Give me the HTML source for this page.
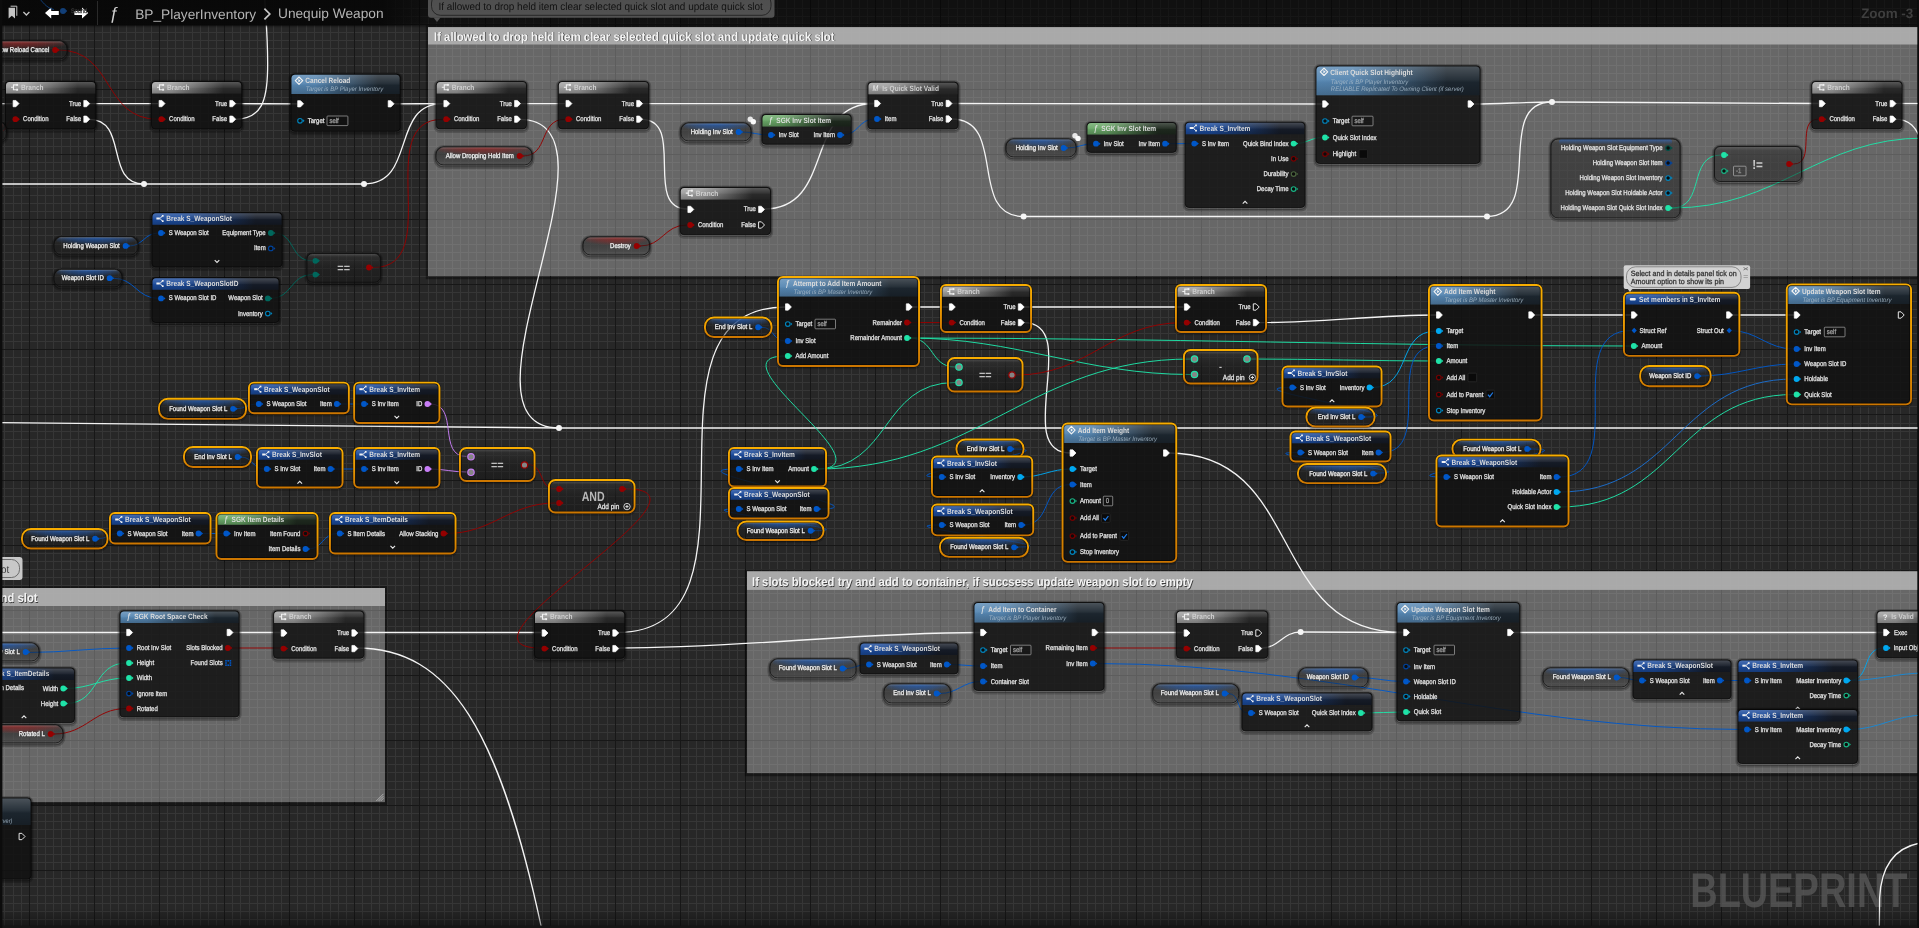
<!DOCTYPE html>
<html><head><meta charset="utf-8"><title>BP_PlayerInventory - Unequip Weapon</title><style>html,body{margin:0;padding:0;background:#262626;overflow:hidden}svg{display:block;will-change:transform}</style></head><body><svg width="1919" height="928" viewBox="0 0 1919 928" font-family="Liberation Sans, sans-serif" text-rendering="geometricPrecision">
<defs><linearGradient id="g1" x1="0" y1="0" x2="0" y2="1"><stop offset="0" stop-color="#505050" stop-opacity="0.8"/><stop offset="0.2" stop-color="#2c2c2c" stop-opacity="0.62"/><stop offset="0.5" stop-color="#1c1c1c" stop-opacity="0.5"/><stop offset="1" stop-color="#141414" stop-opacity="0.3"/></linearGradient><radialGradient id="g2" cx="0.5" cy="0" r="0.62" fx="0.5" fy="0" gradientTransform="translate(0 0) scale(1 1.6)"><stop offset="0" stop-color="#a82020" stop-opacity="0.66"/><stop offset="0.55" stop-color="#a82020" stop-opacity="0.36"/><stop offset="1" stop-color="#a82020" stop-opacity="0"/></radialGradient><linearGradient id="g3" x1="0" y1="0" x2="1" y2="0"><stop offset="0" stop-color="#a0a0a0" stop-opacity="1"/><stop offset="0.22" stop-color="#a0a0a0" stop-opacity="0.97"/><stop offset="0.8" stop-color="#2c2c2c" stop-opacity="1"/><stop offset="1" stop-color="#2c2c2c" stop-opacity="1"/></linearGradient><linearGradient id="g4" x1="0" y1="0" x2="0" y2="1"><stop offset="0" stop-color="#ffffff" stop-opacity="0.2"/><stop offset="0.45" stop-color="#ffffff" stop-opacity="0.05"/><stop offset="0.55" stop-color="#000000" stop-opacity="0.05"/><stop offset="1" stop-color="#000000" stop-opacity="0.22"/></linearGradient><linearGradient id="g5" x1="0" y1="0" x2="1" y2="0"><stop offset="0" stop-color="#5788b4" stop-opacity="1"/><stop offset="0.22" stop-color="#5788b4" stop-opacity="0.97"/><stop offset="0.8" stop-color="#1d2730" stop-opacity="1"/><stop offset="1" stop-color="#1d2730" stop-opacity="1"/></linearGradient><linearGradient id="g6" x1="0" y1="0" x2="1" y2="0"><stop offset="0" stop-color="#1c4c9e" stop-opacity="1"/><stop offset="0.22" stop-color="#1c4c9e" stop-opacity="0.97"/><stop offset="0.8" stop-color="#161c28" stop-opacity="1"/><stop offset="1" stop-color="#161c28" stop-opacity="1"/></linearGradient><radialGradient id="g7" cx="0.5" cy="0" r="0.62" fx="0.5" fy="0" gradientTransform="translate(0 0) scale(1 1.6)"><stop offset="0" stop-color="#1a62d0" stop-opacity="0.66"/><stop offset="0.55" stop-color="#1a62d0" stop-opacity="0.36"/><stop offset="1" stop-color="#1a62d0" stop-opacity="0"/></radialGradient><linearGradient id="g8" x1="0" y1="0" x2="0" y2="1"><stop offset="0" stop-color="#606060" stop-opacity="0.8"/><stop offset="0.12" stop-color="#303030" stop-opacity="0.62"/><stop offset="0.5" stop-color="#1c1c1c" stop-opacity="0.52"/><stop offset="1" stop-color="#121212" stop-opacity="0.45"/></linearGradient><linearGradient id="g9" x1="0" y1="0" x2="1" y2="0"><stop offset="0" stop-color="#6aa868" stop-opacity="1"/><stop offset="0.22" stop-color="#6aa868" stop-opacity="0.97"/><stop offset="0.8" stop-color="#1f2a1f" stop-opacity="1"/><stop offset="1" stop-color="#1f2a1f" stop-opacity="1"/></linearGradient><linearGradient id="g10" x1="0" y1="0" x2="1" y2="0"><stop offset="0" stop-color="#a0a0a0" stop-opacity="1"/><stop offset="0.22" stop-color="#a0a0a0" stop-opacity="0.97"/><stop offset="0.8" stop-color="#2c2c2c" stop-opacity="1"/><stop offset="1" stop-color="#2c2c2c" stop-opacity="1"/></linearGradient><linearGradient id="g11" x1="0" y1="0" x2="0" y2="1"><stop offset="0" stop-color="#606060" stop-opacity="0.8"/><stop offset="0.05" stop-color="#2c2c2c" stop-opacity="0.6"/><stop offset="0.4" stop-color="#1c1c1c" stop-opacity="0.5"/><stop offset="1" stop-color="#141414" stop-opacity="0.48"/></linearGradient><linearGradient id="g12" x1="0" y1="0" x2="0" y2="1"><stop offset="0" stop-color="#1a62d0" stop-opacity="0.5"/><stop offset="1" stop-color="#1a62d0" stop-opacity="0"/></linearGradient><linearGradient id="g13" x1="0" y1="0" x2="0" y2="1"><stop offset="0" stop-color="#f8ad00" stop-opacity="1"/><stop offset="0.5" stop-color="#ec9a00" stop-opacity="1"/><stop offset="1" stop-color="#cc7600" stop-opacity="1"/></linearGradient><linearGradient id="g14" x1="0" y1="0" x2="1" y2="0"><stop offset="0" stop-color="#1c4c9e" stop-opacity="1"/><stop offset="0.22" stop-color="#1c4c9e" stop-opacity="0.97"/><stop offset="0.8" stop-color="#161c28" stop-opacity="1"/><stop offset="1" stop-color="#161c28" stop-opacity="1"/></linearGradient><linearGradient id="g15" x1="0" y1="0" x2="0" y2="1"><stop offset="0" stop-color="#000" stop-opacity="0.6"/><stop offset="0.8" stop-color="#000" stop-opacity="0.58"/><stop offset="0.92" stop-color="#000" stop-opacity="0.35"/><stop offset="1" stop-color="#000" stop-opacity="0"/></linearGradient><linearGradient id="g16" x1="0" y1="0" x2="1" y2="0"><stop offset="0" stop-color="#080808" stop-opacity="0.92"/><stop offset="0.9" stop-color="#080808" stop-opacity="0.9"/><stop offset="1" stop-color="#080808" stop-opacity="0"/></linearGradient><linearGradient id="g17" x1="0" y1="0" x2="0" y2="1"><stop offset="0" stop-color="#000" stop-opacity="0"/><stop offset="1" stop-color="#000" stop-opacity="0.4"/></linearGradient></defs>
<g id="Lbg"><rect width="1919" height="928" fill="#272727"/>
<path d="M4.5 0V928M13.5 0V928M21.5 0V928M37.5 0V928M45.5 0V928M53.5 0V928M61.5 0V928M70.5 0V928M78.5 0V928M86.5 0V928M102.5 0V928M110.5 0V928M118.5 0V928M126.5 0V928M135.5 0V928M143.5 0V928M151.5 0V928M167.5 0V928M175.5 0V928M183.5 0V928M192.5 0V928M200.5 0V928M208.5 0V928M216.5 0V928M232.5 0V928M240.5 0V928M249.5 0V928M257.5 0V928M265.5 0V928M273.5 0V928M281.5 0V928M297.5 0V928M306.5 0V928M314.5 0V928M322.5 0V928M330.5 0V928M338.5 0V928M346.5 0V928M362.5 0V928M371.5 0V928M379.5 0V928M387.5 0V928M395.5 0V928M403.5 0V928M411.5 0V928M428.5 0V928M436.5 0V928M444.5 0V928M452.5 0V928M460.5 0V928M468.5 0V928M476.5 0V928M493.5 0V928M501.5 0V928M509.5 0V928M517.5 0V928M525.5 0V928M533.5 0V928M542.5 0V928M558.5 0V928M566.5 0V928M574.5 0V928M582.5 0V928M590.5 0V928M598.5 0V928M607.5 0V928M623.5 0V928M631.5 0V928M639.5 0V928M647.5 0V928M655.5 0V928M664.5 0V928M672.5 0V928M688.5 0V928M696.5 0V928M704.5 0V928M712.5 0V928M721.5 0V928M729.5 0V928M737.5 0V928M753.5 0V928M761.5 0V928M769.5 0V928M777.5 0V928M786.5 0V928M794.5 0V928M802.5 0V928M818.5 0V928M826.5 0V928M834.5 0V928M843.5 0V928M851.5 0V928M859.5 0V928M867.5 0V928M883.5 0V928M891.5 0V928M900.5 0V928M908.5 0V928M916.5 0V928M924.5 0V928M932.5 0V928M948.5 0V928M957.5 0V928M965.5 0V928M973.5 0V928M981.5 0V928M989.5 0V928M997.5 0V928M1013.5 0V928M1022.5 0V928M1030.5 0V928M1038.5 0V928M1046.5 0V928M1054.5 0V928M1062.5 0V928M1079.5 0V928M1087.5 0V928M1095.5 0V928M1103.5 0V928M1111.5 0V928M1119.5 0V928M1127.5 0V928M1144.5 0V928M1152.5 0V928M1160.5 0V928M1168.5 0V928M1176.5 0V928M1184.5 0V928M1193.5 0V928M1209.5 0V928M1217.5 0V928M1225.5 0V928M1233.5 0V928M1241.5 0V928M1249.5 0V928M1258.5 0V928M1274.5 0V928M1282.5 0V928M1290.5 0V928M1298.5 0V928M1306.5 0V928M1315.5 0V928M1323.5 0V928M1339.5 0V928M1347.5 0V928M1355.5 0V928M1363.5 0V928M1372.5 0V928M1380.5 0V928M1388.5 0V928M1404.5 0V928M1412.5 0V928M1420.5 0V928M1428.5 0V928M1437.5 0V928M1445.5 0V928M1453.5 0V928M1469.5 0V928M1477.5 0V928M1485.5 0V928M1494.5 0V928M1502.5 0V928M1510.5 0V928M1518.5 0V928M1534.5 0V928M1542.5 0V928M1551.5 0V928M1559.5 0V928M1567.5 0V928M1575.5 0V928M1583.5 0V928M1599.5 0V928M1608.5 0V928M1616.5 0V928M1624.5 0V928M1632.5 0V928M1640.5 0V928M1648.5 0V928M1664.5 0V928M1673.5 0V928M1681.5 0V928M1689.5 0V928M1697.5 0V928M1705.5 0V928M1713.5 0V928M1730.5 0V928M1738.5 0V928M1746.5 0V928M1754.5 0V928M1762.5 0V928M1770.5 0V928M1778.5 0V928M1795.5 0V928M1803.5 0V928M1811.5 0V928M1819.5 0V928M1827.5 0V928M1835.5 0V928M1844.5 0V928M1860.5 0V928M1868.5 0V928M1876.5 0V928M1884.5 0V928M1892.5 0V928M1900.5 0V928M1909.5 0V928M0 8.5H1919M0 16.5H1919M0 32.5H1919M0 40.5H1919M0 48.5H1919M0 56.5H1919M0 65.5H1919M0 73.5H1919M0 81.5H1919M0 97.5H1919M0 105.5H1919M0 113.5H1919M0 121.5H1919M0 130.5H1919M0 138.5H1919M0 146.5H1919M0 162.5H1919M0 170.5H1919M0 178.5H1919M0 187.5H1919M0 195.5H1919M0 203.5H1919M0 211.5H1919M0 227.5H1919M0 235.5H1919M0 244.5H1919M0 252.5H1919M0 260.5H1919M0 268.5H1919M0 276.5H1919M0 292.5H1919M0 301.5H1919M0 309.5H1919M0 317.5H1919M0 325.5H1919M0 333.5H1919M0 341.5H1919M0 357.5H1919M0 366.5H1919M0 374.5H1919M0 382.5H1919M0 390.5H1919M0 398.5H1919M0 406.5H1919M0 423.5H1919M0 431.5H1919M0 439.5H1919M0 447.5H1919M0 455.5H1919M0 463.5H1919M0 471.5H1919M0 488.5H1919M0 496.5H1919M0 504.5H1919M0 512.5H1919M0 520.5H1919M0 528.5H1919M0 537.5H1919M0 553.5H1919M0 561.5H1919M0 569.5H1919M0 577.5H1919M0 585.5H1919M0 593.5H1919M0 602.5H1919M0 618.5H1919M0 626.5H1919M0 634.5H1919M0 642.5H1919M0 650.5H1919M0 659.5H1919M0 667.5H1919M0 683.5H1919M0 691.5H1919M0 699.5H1919M0 707.5H1919M0 716.5H1919M0 724.5H1919M0 732.5H1919M0 748.5H1919M0 756.5H1919M0 764.5H1919M0 772.5H1919M0 781.5H1919M0 789.5H1919M0 797.5H1919M0 813.5H1919M0 821.5H1919M0 829.5H1919M0 838.5H1919M0 846.5H1919M0 854.5H1919M0 862.5H1919M0 878.5H1919M0 886.5H1919M0 895.5H1919M0 903.5H1919M0 911.5H1919M0 919.5H1919M0 927.5H1919" stroke="#363636" stroke-width="1" fill="none"/>
<path d="M29.5 0V928M94.5 0V928M159.5 0V928M224.5 0V928M289.5 0V928M354.5 0V928M419.5 0V928M485.5 0V928M550.5 0V928M615.5 0V928M680.5 0V928M745.5 0V928M810.5 0V928M875.5 0V928M940.5 0V928M1005.5 0V928M1070.5 0V928M1136.5 0V928M1201.5 0V928M1266.5 0V928M1331.5 0V928M1396.5 0V928M1461.5 0V928M1526.5 0V928M1591.5 0V928M1656.5 0V928M1721.5 0V928M1787.5 0V928M1852.5 0V928M1917.5 0V928M0 24.5H1919M0 89.5H1919M0 154.5H1919M0 219.5H1919M0 284.5H1919M0 349.5H1919M0 414.5H1919M0 480.5H1919M0 545.5H1919M0 610.5H1919M0 675.5H1919M0 740.5H1919M0 805.5H1919M0 870.5H1919" stroke="#171717" stroke-width="1" fill="none"/></g>
<g id="Lcomments"><rect x="427" y="26.4" width="1491.5" height="251.6" fill="none" stroke="#000" stroke-width="2.5" opacity="0.4"/>
<rect x="428" y="27" width="1489.5" height="249" fill="#c8c8c8" fill-opacity="0.4"/>
<rect x="428" y="27" width="1489.5" height="17.5" fill="#aeaeae" fill-opacity="0.93"/>
<text transform="translate(434.7 41.2) scale(0.9 1)" font-size="12.6" fill="#222" font-weight="bold" opacity="0.8">If allowed to drop held item clear selected quick slot and update quick slot</text>
<text transform="translate(434 40.5) scale(0.9 1)" font-size="12.6" fill="#f4f4f4" font-weight="bold">If allowed to drop held item clear selected quick slot and update quick slot</text>
<rect x="-41" y="587.4" width="427" height="216.6" fill="none" stroke="#000" stroke-width="2.5" opacity="0.4"/>
<rect x="-40" y="588" width="425" height="214" fill="#c8c8c8" fill-opacity="0.4"/>
<rect x="-40" y="588" width="425" height="18" fill="#aeaeae" fill-opacity="0.93"/>
<text transform="translate(1.2 602.7) scale(0.9 1)" font-size="12.6" fill="#222" font-weight="bold" opacity="0.8">nd slot</text>
<text transform="translate(0.5 602) scale(0.9 1)" font-size="12.6" fill="#f4f4f4" font-weight="bold">nd slot</text>
<path d="M383.5 796 l-5 5 M383.5 798.2 l-2.8 2.8 M383.5 793.8 l-7.2 7.2" stroke="#ddd" stroke-width="0.6" fill="none"/>
<rect x="746" y="570.7" width="1172.5" height="204.3" fill="none" stroke="#000" stroke-width="2.5" opacity="0.4"/>
<rect x="747" y="571.3" width="1170.5" height="201.7" fill="#c8c8c8" fill-opacity="0.4"/>
<rect x="747" y="571.3" width="1170.5" height="18.6" fill="#aeaeae" fill-opacity="0.93"/>
<text transform="translate(752.7 586.6) scale(0.9 1)" font-size="12.6" fill="#222" font-weight="bold" opacity="0.8">If slots blocked try and add to container, if succsess update weapon slot to empty</text>
<text transform="translate(752 585.9) scale(0.9 1)" font-size="12.6" fill="#f4f4f4" font-weight="bold">If slots blocked try and add to container, if succsess update weapon slot to empty</text>
<text transform="translate(1690.2 907.2) scale(0.78 1)" font-size="48.7" fill="#5a5a5a" font-weight="bold" opacity="0.75">BLUEPRINT</text></g>
<g id="Lwires"><path d="M-5 103.7 C0.83 103.7 6.67 103.7 12.5 103.7" stroke="#f4f4f4" stroke-width="1.3" fill="none"/>
<path d="M89 103.7 C112.07 103.7 135.13 103.7 158.2 103.7" stroke="#f4f4f4" stroke-width="1.3" fill="none"/>
<path d="M89 119.3 C128.9 119.3 104.1 184 144 184" stroke="#f4f4f4" stroke-width="1.3" fill="none"/>
<path d="M234.7 103.7 C255.67 103.7 276.53 103.8 297.5 103.8" stroke="#f4f4f4" stroke-width="1.3" fill="none"/>
<path d="M234.7 119.3 C262 119.3 267 100 267.6 70 S265.5 15 264.5 -5" stroke="#f4f4f4" stroke-width="1.3" fill="none"/>
<path d="M393.6 103.8 C410.03 103.8 426.37 103.7 442.8 103.7" stroke="#f4f4f4" stroke-width="1.3" fill="none"/>
<path d="M-5 184 C44.67 184 94.33 184 144 184" stroke="#f4f4f4" stroke-width="1.3" fill="none"/>
<path d="M144 184 C217.33 184 290.67 184 364 184" stroke="#f4f4f4" stroke-width="1.3" fill="none"/>
<path d="M364 184 C417.03 184 389.77 103.7 442.8 103.7" stroke="#f4f4f4" stroke-width="1.3" fill="none"/>
<circle cx="144" cy="184" r="3" fill="#f4f4f4"/>
<circle cx="364" cy="184" r="3" fill="#f4f4f4"/>
<path d="M519.3 103.7 C534.47 103.7 549.63 103.7 564.8 103.7" stroke="#f4f4f4" stroke-width="1.3" fill="none"/>
<path d="M519.3 119.3 C635.43 119.3 442.87 428 559 428" stroke="#f4f4f4" stroke-width="1.3" fill="none"/>
<path d="M641.3 103.7 C719.1 103.7 796.7 103.5 874.5 103.5" stroke="#f4f4f4" stroke-width="1.3" fill="none"/>
<path d="M641.3 119.3 C686.6 119.3 642.2 209 687.5 209" stroke="#f4f4f4" stroke-width="1.3" fill="none"/>
<path d="M764 209 C836 209 802.5 103.5 874.5 103.5" stroke="#f4f4f4" stroke-width="1.3" fill="none"/>
<path d="M951.5 103.5 C1075.33 103.5 1198.67 104 1322.5 104" stroke="#f4f4f4" stroke-width="1.3" fill="none"/>
<path d="M951.5 119 C1008.03 119 967.07 216.5 1023.6 216.5" stroke="#f4f4f4" stroke-width="1.3" fill="none"/>
<path d="M1023.6 216.5 C1178.07 216.5 1332.53 216.5 1487 216.5" stroke="#f4f4f4" stroke-width="1.3" fill="none"/>
<path d="M1487 216.5 C1546.83 216.5 1492.17 102 1552 102" stroke="#f4f4f4" stroke-width="1.3" fill="none"/>
<path d="M1473.5 104 C1500.33 104 1525.17 102 1552 102" stroke="#f4f4f4" stroke-width="1.3" fill="none"/>
<path d="M1552 102 C1641.33 102 1729.17 103.5 1818.5 103.5" stroke="#f4f4f4" stroke-width="1.3" fill="none"/>
<circle cx="1023.6" cy="216.5" r="3" fill="#f4f4f4"/>
<circle cx="1487" cy="216.5" r="3" fill="#f4f4f4"/>
<circle cx="1552" cy="102" r="3" fill="#f4f4f4"/>
<path d="M1895 103.5 C1905 103.5 1915 103.5 1925 103.5" stroke="#f4f4f4" stroke-width="1.3" fill="none"/>
<path d="M1895 119.1 C1910 119.1 1916 128 1921 140" stroke="#f4f4f4" stroke-width="1.3" fill="none"/>
<path d="M-5 422.5 C200 423.5 400 428 559 428" stroke="#f4f4f4" stroke-width="1.3" fill="none"/>
<path d="M559 428 C892.33 428 1591.67 428 1925 428" stroke="#f4f4f4" stroke-width="1.3" fill="none"/>
<circle cx="559" cy="428" r="3" fill="#f4f4f4"/>
<path d="M617.5 632.5 C781.93 632.5 620.87 307 785.3 307" stroke="#f4f4f4" stroke-width="1.3" fill="none"/>
<path d="M617.5 648 C743.67 648 854.33 632.5 980.5 632.5" stroke="#f4f4f4" stroke-width="1.3" fill="none"/>
<path d="M356.6 632.5 C418.07 632.5 479.53 632.5 541 632.5" stroke="#f4f4f4" stroke-width="1.3" fill="none"/>
<path d="M356.6 648 C450 648 500 730 543 935" stroke="#f4f4f4" stroke-width="1.3" fill="none"/>
<path d="M232.5 632.5 C248.37 632.5 264.23 632.5 280.1 632.5" stroke="#f4f4f4" stroke-width="1.3" fill="none"/>
<path d="M-5 632.5 C38.83 632.5 82.67 632.5 126.5 632.5" stroke="#f4f4f4" stroke-width="1.3" fill="none"/>
<path d="M911.7 307 C923.9 307 936.1 307 948.3 307" stroke="#f4f4f4" stroke-width="1.3" fill="none"/>
<path d="M1023.7 307 C1076.9 307 1130.1 307 1183.3 307" stroke="#f4f4f4" stroke-width="1.3" fill="none"/>
<path d="M1023.7 322.6 C1082.7 322.6 1011.3 453 1070.3 453" stroke="#f4f4f4" stroke-width="1.3" fill="none"/>
<path d="M1258.7 322.6 C1320.43 322.6 1374.57 315 1436.3 315" stroke="#f4f4f4" stroke-width="1.3" fill="none"/>
<path d="M1534.2 315 C1566.57 315 1598.93 315 1631.3 315" stroke="#f4f4f4" stroke-width="1.3" fill="none"/>
<path d="M1732 315 C1752.7 315 1773.4 315 1794.1 315" stroke="#f4f4f4" stroke-width="1.3" fill="none"/>
<path d="M1168.2 453 C1306.47 453 1265.23 632.5 1403.5 632.5" stroke="#f4f4f4" stroke-width="1.3" fill="none"/>
<path d="M1097.5 632.5 C1126 632.5 1154.5 632.5 1183 632.5" stroke="#f4f4f4" stroke-width="1.3" fill="none"/>
<path d="M1261.2 648 C1279.67 648 1282.13 632 1300.6 632" stroke="#f4f4f4" stroke-width="1.3" fill="none"/>
<path d="M1300.6 632 C1335.07 632 1369.03 632.5 1403.5 632.5" stroke="#f4f4f4" stroke-width="1.3" fill="none"/>
<circle cx="1300.6" cy="632" r="3" fill="#f4f4f4"/>
<path d="M1513.1 632.5 C1636.57 632.5 1760.03 632.5 1883.5 632.5" stroke="#f4f4f4" stroke-width="1.3" fill="none"/>
<path d="M1925 842.3 C1900 845 1881.5 860 1879.6 898 L1879.3 935" stroke="#f4f4f4" stroke-width="1.3" fill="none"/>
<path d="M58.5 50 C114.83 50 101.87 119.3 158.2 119.3" stroke="#950000" stroke-width="0.95" fill="none"/>
<path d="M3 131 C7 129 7 120 13 119.3" stroke="#5a1010" stroke-width="0.9" fill="none"/>
<path d="M523 156 C549.17 156 538.63 119.3 564.8 119.3" stroke="#950000" stroke-width="0.95" fill="none"/>
<path d="M373.5 267.5 C446 267.5 370.3 119.3 442.8 119.3" stroke="#950000" stroke-width="0.95" fill="none"/>
<path d="M129 246 C143.17 246 144.33 233 158.5 233" stroke="#0057c8" stroke-width="0.95" fill="none"/>
<path d="M113 278.2 C134.9 278.2 136.6 298.4 158.5 298.4" stroke="#0057c8" stroke-width="0.95" fill="none"/>
<path d="M273.5 233 C295.6 233 289.9 260.8 312 260.8" stroke="#00675c" stroke-width="0.95" fill="none"/>
<path d="M270.5 298.4 C292.27 298.4 290.23 274.6 312 274.6" stroke="#00675c" stroke-width="0.95" fill="none"/>
<path d="M742 132 C751.83 132 758.67 135 768.5 135" stroke="#0057c8" stroke-width="0.95" fill="none"/>
<path d="M842.5 135 C858.5 135 858.5 119 874.5 119" stroke="#0057c8" stroke-width="0.95" fill="none"/>
<path d="M640 246 C662.6 246 664.2 225 686.8 225" stroke="#950000" stroke-width="0.95" fill="none"/>
<path d="M1067 148 C1077.27 148 1083.23 143.7 1093.5 143.7" stroke="#0057c8" stroke-width="0.95" fill="none"/>
<path d="M1167.5 143.7 C1175.53 143.7 1183.47 143.6 1191.5 143.6" stroke="#0057c8" stroke-width="0.95" fill="none"/>
<path d="M1295.5 143.6 C1306.53 143.6 1311.47 137.5 1322.5 137.5" stroke="#1fe3a8" stroke-width="0.95" fill="none"/>
<path d="M1672 208 C1706 208 1687 155 1721 155" stroke="#1fe3a8" stroke-width="0.95" fill="none"/>
<path d="M1672 208 C1779.67 208 1817.33 138 1925 138" stroke="#1fe3a8" stroke-width="0.95" fill="none"/>
<path d="M1793.5 164 C1816.8 164 1795.2 119.1 1818.5 119.1" stroke="#950000" stroke-width="0.95" fill="none"/>
<path d="M236.5 408.8 C244.7 408.8 248.1 404 256.3 404" stroke="#0057c8" stroke-width="0.95" fill="none"/>
<path d="M339.5 404 C346.83 404 354.17 404 361.5 404" stroke="#0057c8" stroke-width="0.95" fill="none"/>
<path d="M430.1 404 C459.73 404 436.87 456.5 466.5 456.5" stroke="#c77df5" stroke-width="0.95" fill="none"/>
<path d="M241 457 C252.77 457 252.53 469 264.3 469" stroke="#0057c8" stroke-width="0.95" fill="none"/>
<path d="M333.2 469 C342.63 469 352.07 469 361.5 469" stroke="#0057c8" stroke-width="0.95" fill="none"/>
<path d="M430.1 469 C443.23 469 453.37 472 466.5 472" stroke="#c77df5" stroke-width="0.95" fill="none"/>
<path d="M527.5 464.5 C545 464.5 538 489 555.5 489" stroke="#950000" stroke-width="0.95" fill="none"/>
<path d="M446.2 533.5 C492.8 533.5 508.9 503 555.5 503" stroke="#950000" stroke-width="0.95" fill="none"/>
<path d="M626.5 489 C733.83 489 433.67 648 541 648" stroke="#950000" stroke-width="0.95" fill="none"/>
<path d="M98.5 538.8 C106.53 538.8 109.27 533.5 117.3 533.5" stroke="#0057c8" stroke-width="0.95" fill="none"/>
<path d="M201.2 533.5 C208.73 533.5 216.27 533.5 223.8 533.5" stroke="#0057c8" stroke-width="0.95" fill="none"/>
<path d="M308.2 549 C323.07 549 322.43 533.5 337.3 533.5" stroke="#0057c8" stroke-width="0.95" fill="none"/>
<path d="M761.5 327.2 C774.03 327.2 772.77 341 785.3 341" stroke="#0057c8" stroke-width="0.95" fill="none"/>
<path d="M909.7 322.5 C922.6 322.5 935.4 322.6 948.3 322.6" stroke="#950000" stroke-width="0.95" fill="none"/>
<path d="M909.7 338 C934.47 338 930.23 367 955 367" stroke="#1fe3a8" stroke-width="0.95" fill="none"/>
<path d="M909.7 338 C1015.47 338 1084.73 374.5 1190.5 374.5" stroke="#1fe3a8" stroke-width="0.95" fill="none"/>
<path d="M909.7 338 C1152.9 338 1388.1 346 1631.3 346" stroke="#1fe3a8" stroke-width="0.95" fill="none"/>
<path d="M816.7 469 C894.13 469 707.87 356 785.3 356" stroke="#1fe3a8" stroke-width="0.95" fill="none"/>
<path d="M816.7 469 C891.63 469 880.07 382.5 955 382.5" stroke="#1fe3a8" stroke-width="0.95" fill="none"/>
<path d="M816.7 469 C977.97 469 1029.23 359 1190.5 359" stroke="#1fe3a8" stroke-width="0.95" fill="none"/>
<path d="M1251 359 C1313.43 359 1373.87 361 1436.3 361" stroke="#1fe3a8" stroke-width="0.95" fill="none"/>
<path d="M1016 375 C1089.23 375 1110.07 322.6 1183.3 322.6" stroke="#950000" stroke-width="0.95" fill="none"/>
<path d="M814 530.7 C876.65 530.7 673.65 509 736.3 509" stroke="#0057c8" stroke-width="0.95" fill="none"/>
<path d="M819.2 509 C894.47 509 661.03 469 736.3 469" stroke="#0057c8" stroke-width="0.95" fill="none"/>
<path d="M1013.5 449 C1076.97 449 875.83 477 939.3 477" stroke="#0057c8" stroke-width="0.95" fill="none"/>
<path d="M1022.2 477 C1040.9 477 1051.6 469 1070.3 469" stroke="#00a8f0" stroke-width="0.95" fill="none"/>
<path d="M1017.5 547 C1080.63 547 876.17 525 939.3 525" stroke="#0057c8" stroke-width="0.95" fill="none"/>
<path d="M1023.2 525 C1052.4 525 1041.1 484.5 1070.3 484.5" stroke="#0057c8" stroke-width="0.95" fill="none"/>
<path d="M1372.2 387.5 C1412.4 387.5 1396.1 331 1436.3 331" stroke="#00a8f0" stroke-width="0.95" fill="none"/>
<path d="M1364.5 417 C1429.05 417 1225.25 387.5 1289.8 387.5" stroke="#0057c8" stroke-width="0.95" fill="none"/>
<path d="M1381.2 452.5 C1435.07 452.5 1382.43 346 1436.3 346" stroke="#0057c8" stroke-width="0.95" fill="none"/>
<path d="M1376.5 473 C1439.22 473 1235.08 452.5 1297.8 452.5" stroke="#0057c8" stroke-width="0.95" fill="none"/>
<path d="M1530.5 449 C1602.3 449 1372 477 1443.8 477" stroke="#0057c8" stroke-width="0.95" fill="none"/>
<path d="M1559.2 477 C1632.07 477 1558.43 330.5 1631.3 330.5" stroke="#0057c8" stroke-width="0.95" fill="none"/>
<path d="M1559.2 492 C1675.17 492 1678.13 379 1794.1 379" stroke="#1a6fd0" stroke-width="0.95" fill="none"/>
<path d="M1559.2 507 C1675 507 1678.3 394.5 1794.1 394.5" stroke="#1fe3a8" stroke-width="0.95" fill="none"/>
<path d="M1730 330.5 C1757.53 330.5 1766.57 349 1794.1 349" stroke="#0057c8" stroke-width="0.95" fill="none"/>
<path d="M1700 376 C1735.37 376 1758.73 364 1794.1 364" stroke="#0057c8" stroke-width="0.95" fill="none"/>
<path d="M29 652.5 C63 652.5 92.5 648 126.5 648" stroke="#0057c8" stroke-width="0.95" fill="none"/>
<path d="M66 688.5 C89.67 688.5 102.83 678 126.5 678" stroke="#1fe3a8" stroke-width="0.95" fill="none"/>
<path d="M66 703.5 C99.67 703.5 92.83 663 126.5 663" stroke="#1fe3a8" stroke-width="0.95" fill="none"/>
<path d="M54 734 C86.67 734 93.83 708.5 126.5 708.5" stroke="#950000" stroke-width="0.95" fill="none"/>
<path d="M230.5 648 C247.03 648 263.57 648 280.1 648" stroke="#950000" stroke-width="0.95" fill="none"/>
<path d="M846 668.5 C854.17 668.5 858.33 664.5 866.5 664.5" stroke="#0057c8" stroke-width="0.95" fill="none"/>
<path d="M949.5 664.5 C960.33 664.5 969.67 666 980.5 666" stroke="#0057c8" stroke-width="0.95" fill="none"/>
<path d="M940 693.5 C957.5 693.5 963 681.5 980.5 681.5" stroke="#0057c8" stroke-width="0.95" fill="none"/>
<path d="M1095.5 648 C1124.67 648 1153.83 648 1183 648" stroke="#950000" stroke-width="0.95" fill="none"/>
<path d="M1095.5 663.5 C1333.83 663.5 1506.17 729.5 1744.5 729.5" stroke="#0057c8" stroke-width="0.95" fill="none"/>
<path d="M1228 693.5 C1241.33 693.5 1235.17 713 1248.5 713" stroke="#0057c8" stroke-width="0.95" fill="none"/>
<path d="M1363.5 713 C1377.17 713 1389.83 712 1403.5 712" stroke="#1fe3a8" stroke-width="0.95" fill="none"/>
<path d="M1358 677.5 C1374.5 677.5 1387 681.5 1403.5 681.5" stroke="#0057c8" stroke-width="0.95" fill="none"/>
<path d="M1620 677.5 C1627.5 677.5 1632 680.5 1639.5 680.5" stroke="#0057c8" stroke-width="0.95" fill="none"/>
<path d="M1722.5 680.5 C1729.83 680.5 1737.17 680.5 1744.5 680.5" stroke="#0057c8" stroke-width="0.95" fill="none"/>
<path d="M1849 680.5 C1871.33 680.5 1861.17 648 1883.5 648" stroke="#00a8f0" stroke-width="0.95" fill="none"/>
<path d="M1849 680.5 C1876.83 680.5 1897.17 673 1925 673" stroke="#1888d4" stroke-width="0.95" fill="none"/>
<path d="M1849 729.5 C1879.17 729.5 1894.83 715 1925 715" stroke="#1888d4" stroke-width="0.95" fill="none"/></g>
<g id="Lnodes"><rect x="-31.3" y="40.4" width="99.6" height="21.4" rx="8.8" fill="none" stroke="#000" stroke-width="2.6" opacity="0.2"/>
<rect x="-30.7" y="40.8" width="98.4" height="19.8" rx="8.2" fill="none" stroke="#000" stroke-width="1.4" opacity="0.3"/>
<rect x="-30" y="41" width="97" height="18" rx="7.5" fill="url(#g1)" stroke="#0c0c0c" stroke-opacity="0.85" stroke-width="0.9"/>
<rect x="-27.5" y="41.6" width="92" height="8.1" rx="5" fill="url(#g2)"/>
<path d="M-24.75 41.9 h86.5" stroke="#ffffff" stroke-opacity="0.22" stroke-width="0.8" fill="none"/>
<circle cx="55.1" cy="50" r="2.9" fill="#950000"/>
<path d="M57.7 48.3 l1.9 1.7 l-1.9 1.7 z" fill="#950000"/>
<text transform="translate(49.3 51.9) scale(0.86 1)" font-size="7" fill="#f2f2f2" text-anchor="end" stroke="#f2f2f2" stroke-width="0.28">ow Reload Cancel</text>
<rect x="-41.3" y="121.4" width="49.1" height="22.4" rx="8.8" fill="none" stroke="#000" stroke-width="2.6" opacity="0.2"/>
<rect x="-40.7" y="121.8" width="47.9" height="20.8" rx="8.2" fill="none" stroke="#000" stroke-width="1.4" opacity="0.3"/>
<rect x="-40" y="122" width="46.5" height="19" rx="7.5" fill="url(#g1)" stroke="#0c0c0c" stroke-opacity="0.85" stroke-width="0.9"/>
<rect x="-37.5" y="122.6" width="41.5" height="8.55" rx="5" fill="url(#g2)"/>
<path d="M-34.75 122.9 h36" stroke="#ffffff" stroke-opacity="0.22" stroke-width="0.8" fill="none"/>
<circle cx="-12.4" cy="131.5" r="2.9" fill="#950000"/>
<path d="M-9.8 129.8 l1.9 1.7 l-1.9 1.7 z" fill="#950000"/>
<text transform="translate(-18.2 133.4) scale(0.86 1)" font-size="7" fill="#f2f2f2" text-anchor="end" stroke="#f2f2f2" stroke-width="0.28"></text>
<rect x="4.2" y="81" width="92.8" height="50.7" rx="4.8" fill="none" stroke="#000" stroke-width="2.6" opacity="0.2"/>
<rect x="4.8" y="81.4" width="91.6" height="49.1" rx="4.2" fill="none" stroke="#000" stroke-width="1.4" opacity="0.3"/>
<rect x="5.5" y="81.6" width="90.2" height="47.3" rx="3.5" fill="#111111" fill-opacity="0.86" stroke="#050505" stroke-opacity="0.9" stroke-width="0.8"/>
<path d="M6 93.6 v-8 a3.5 3.5 0 0 1 3.5 -3.5 h82.2 a3.5 3.5 0 0 1 3.5 3.5 v8 z" fill="url(#g3)"/>
<path d="M6 93.6 v-8 a3.5 3.5 0 0 1 3.5 -3.5 h82.2 a3.5 3.5 0 0 1 3.5 3.5 v8 z" fill="url(#g4)"/>
<g transform="translate(14.8 87.3)" fill="none" stroke="#f0f0f0" stroke-width="1.1"><path d="M-3.8 0 h2.6 M-1.3 -2.4 v4.8 M-1.9 -2.4 h3.4 M-1.9 2.4 h3.4"/><rect x="1.3" y="-3.4" width="2" height="2" fill="#f0f0f0" stroke="none"/><rect x="1.3" y="1.4" width="2" height="2" fill="#f0f0f0" stroke="none"/></g>
<text transform="translate(21 90) scale(0.86 1)" font-size="7.6" fill="#d0d0d0" font-weight="bold">Branch</text>
<path d="M13.1 100.45 h2.8 l3.1 3.15 l-3.1 3.15 h-2.8 z" fill="#fff" stroke="#fff" stroke-width="0.7" stroke-linejoin="round"/>
<circle cx="15.4" cy="119.2" r="2.9" fill="#950000"/>
<path d="M18 117.5 l1.9 1.7 l-1.9 1.7 z" fill="#950000"/>
<text transform="translate(23.1 121.2) scale(0.86 1)" font-size="7" fill="#e4e4e4" stroke="#e4e4e4" stroke-width="0.28">Condition</text>
<path d="M83.8 100.45 h2.8 l3.1 3.15 l-3.1 3.15 h-2.8 z" fill="#fff" stroke="#fff" stroke-width="0.7" stroke-linejoin="round"/>
<text transform="translate(81.1 105.6) scale(0.86 1)" font-size="7" fill="#e4e4e4" text-anchor="end" stroke="#e4e4e4" stroke-width="0.28">True</text>
<path d="M83.8 116.05 h2.8 l3.1 3.15 l-3.1 3.15 h-2.8 z" fill="#fff" stroke="#fff" stroke-width="0.7" stroke-linejoin="round"/>
<text transform="translate(81.1 121.2) scale(0.86 1)" font-size="7" fill="#e4e4e4" text-anchor="end" stroke="#e4e4e4" stroke-width="0.28">False</text>
<rect x="150.2" y="81" width="92.8" height="50.7" rx="4.8" fill="none" stroke="#000" stroke-width="2.6" opacity="0.2"/>
<rect x="150.8" y="81.4" width="91.6" height="49.1" rx="4.2" fill="none" stroke="#000" stroke-width="1.4" opacity="0.3"/>
<rect x="151.5" y="81.6" width="90.2" height="47.3" rx="3.5" fill="#111111" fill-opacity="0.86" stroke="#050505" stroke-opacity="0.9" stroke-width="0.8"/>
<path d="M152 93.6 v-8 a3.5 3.5 0 0 1 3.5 -3.5 h82.2 a3.5 3.5 0 0 1 3.5 3.5 v8 z" fill="url(#g3)"/>
<path d="M152 93.6 v-8 a3.5 3.5 0 0 1 3.5 -3.5 h82.2 a3.5 3.5 0 0 1 3.5 3.5 v8 z" fill="url(#g4)"/>
<g transform="translate(160.8 87.3)" fill="none" stroke="#f0f0f0" stroke-width="1.1"><path d="M-3.8 0 h2.6 M-1.3 -2.4 v4.8 M-1.9 -2.4 h3.4 M-1.9 2.4 h3.4"/><rect x="1.3" y="-3.4" width="2" height="2" fill="#f0f0f0" stroke="none"/><rect x="1.3" y="1.4" width="2" height="2" fill="#f0f0f0" stroke="none"/></g>
<text transform="translate(167 90) scale(0.86 1)" font-size="7.6" fill="#d0d0d0" font-weight="bold">Branch</text>
<path d="M159.1 100.45 h2.8 l3.1 3.15 l-3.1 3.15 h-2.8 z" fill="#fff" stroke="#fff" stroke-width="0.7" stroke-linejoin="round"/>
<circle cx="161.4" cy="119.2" r="2.9" fill="#950000"/>
<path d="M164 117.5 l1.9 1.7 l-1.9 1.7 z" fill="#950000"/>
<text transform="translate(169.1 121.2) scale(0.86 1)" font-size="7" fill="#e4e4e4" stroke="#e4e4e4" stroke-width="0.28">Condition</text>
<path d="M229.8 100.45 h2.8 l3.1 3.15 l-3.1 3.15 h-2.8 z" fill="#fff" stroke="#fff" stroke-width="0.7" stroke-linejoin="round"/>
<text transform="translate(227.1 105.6) scale(0.86 1)" font-size="7" fill="#e4e4e4" text-anchor="end" stroke="#e4e4e4" stroke-width="0.28">True</text>
<path d="M229.8 116.05 h2.8 l3.1 3.15 l-3.1 3.15 h-2.8 z" fill="#fff" stroke="#fff" stroke-width="0.7" stroke-linejoin="round"/>
<text transform="translate(227.1 121.2) scale(0.86 1)" font-size="7" fill="#e4e4e4" text-anchor="end" stroke="#e4e4e4" stroke-width="0.28">False</text>
<rect x="289.7" y="73.6" width="111.7" height="60.4" rx="4.8" fill="none" stroke="#000" stroke-width="2.6" opacity="0.2"/>
<rect x="290.3" y="74" width="110.5" height="58.8" rx="4.2" fill="none" stroke="#000" stroke-width="1.4" opacity="0.3"/>
<rect x="291" y="74.2" width="109.1" height="57" rx="3.5" fill="#111111" fill-opacity="0.86" stroke="#050505" stroke-opacity="0.9" stroke-width="0.8"/>
<path d="M291.5 94 v-15.8 a3.5 3.5 0 0 1 3.5 -3.5 h101.1 a3.5 3.5 0 0 1 3.5 3.5 v15.8 z" fill="url(#g5)"/>
<path d="M291.5 94 v-15.8 a3.5 3.5 0 0 1 3.5 -3.5 h101.1 a3.5 3.5 0 0 1 3.5 3.5 v15.8 z" fill="url(#g4)"/>
<g transform="translate(299 80.7)"><path d="M-3.7 0 L0 -3.7 L3.7 0 L0 3.7 Z" fill="none" stroke="#f4f4f4" stroke-width="1.15" stroke-linejoin="round"/><path d="M-0.6 -1.7 L1.6 0 L-0.6 1.7 Z" fill="#f4f4f4"/></g>
<text transform="translate(305.3 83.4) scale(0.86 1)" font-size="7.6" fill="#dcdcdc" font-weight="bold">Cancel Reload</text>
<text transform="translate(305.8 91.4) scale(0.94 1)" font-size="6.4" fill="#a9bccb" font-style="italic" opacity="0.85">Target is BP Player Inventory</text>
<path d="M297.7 100.65 h2.8 l3.1 3.15 l-3.1 3.15 h-2.8 z" fill="#fff" stroke="#fff" stroke-width="0.7" stroke-linejoin="round"/>
<circle cx="300" cy="120.8" r="2.3" fill="#0c0c0c" stroke="#0083bb" stroke-width="1.15"/>
<path d="M303 119.3 l1.6 1.5 l-1.6 1.5 z" fill="#0083bb"/>
<text transform="translate(307.7 122.8) scale(0.86 1)" font-size="7" fill="#e4e4e4" stroke="#e4e4e4" stroke-width="0.28">Target</text>
<rect x="327" y="116" width="20.9" height="9.6" rx="0.8" fill="#000" fill-opacity="0.15" stroke="#a8a8a8" stroke-width="0.7"/>
<text transform="translate(329.4 122.9) scale(0.86 1)" font-size="7" fill="#a0a0a0" stroke="#a0a0a0" stroke-width="0.28">self</text>
<path d="M388.2 100.65 h2.8 l3.1 3.15 l-3.1 3.15 h-2.8 z" fill="#fff" stroke="#fff" stroke-width="0.7" stroke-linejoin="round"/>
<rect x="435" y="81" width="92.8" height="50.7" rx="4.8" fill="none" stroke="#000" stroke-width="2.6" opacity="0.2"/>
<rect x="435.6" y="81.4" width="91.6" height="49.1" rx="4.2" fill="none" stroke="#000" stroke-width="1.4" opacity="0.3"/>
<rect x="436.3" y="81.6" width="90.2" height="47.3" rx="3.5" fill="#111111" fill-opacity="0.86" stroke="#050505" stroke-opacity="0.9" stroke-width="0.8"/>
<path d="M436.8 93.6 v-8 a3.5 3.5 0 0 1 3.5 -3.5 h82.2 a3.5 3.5 0 0 1 3.5 3.5 v8 z" fill="url(#g3)"/>
<path d="M436.8 93.6 v-8 a3.5 3.5 0 0 1 3.5 -3.5 h82.2 a3.5 3.5 0 0 1 3.5 3.5 v8 z" fill="url(#g4)"/>
<g transform="translate(445.6 87.3)" fill="none" stroke="#f0f0f0" stroke-width="1.1"><path d="M-3.8 0 h2.6 M-1.3 -2.4 v4.8 M-1.9 -2.4 h3.4 M-1.9 2.4 h3.4"/><rect x="1.3" y="-3.4" width="2" height="2" fill="#f0f0f0" stroke="none"/><rect x="1.3" y="1.4" width="2" height="2" fill="#f0f0f0" stroke="none"/></g>
<text transform="translate(451.8 90) scale(0.86 1)" font-size="7.6" fill="#d0d0d0" font-weight="bold">Branch</text>
<path d="M443.9 100.45 h2.8 l3.1 3.15 l-3.1 3.15 h-2.8 z" fill="#fff" stroke="#fff" stroke-width="0.7" stroke-linejoin="round"/>
<circle cx="446.2" cy="119.2" r="2.9" fill="#950000"/>
<path d="M448.8 117.5 l1.9 1.7 l-1.9 1.7 z" fill="#950000"/>
<text transform="translate(453.9 121.2) scale(0.86 1)" font-size="7" fill="#e4e4e4" stroke="#e4e4e4" stroke-width="0.28">Condition</text>
<path d="M514.6 100.45 h2.8 l3.1 3.15 l-3.1 3.15 h-2.8 z" fill="#fff" stroke="#fff" stroke-width="0.7" stroke-linejoin="round"/>
<text transform="translate(511.9 105.6) scale(0.86 1)" font-size="7" fill="#e4e4e4" text-anchor="end" stroke="#e4e4e4" stroke-width="0.28">True</text>
<path d="M514.6 116.05 h2.8 l3.1 3.15 l-3.1 3.15 h-2.8 z" fill="#fff" stroke="#fff" stroke-width="0.7" stroke-linejoin="round"/>
<text transform="translate(511.9 121.2) scale(0.86 1)" font-size="7" fill="#e4e4e4" text-anchor="end" stroke="#e4e4e4" stroke-width="0.28">False</text>
<rect x="557.1" y="81" width="92.8" height="50.7" rx="4.8" fill="none" stroke="#000" stroke-width="2.6" opacity="0.2"/>
<rect x="557.7" y="81.4" width="91.6" height="49.1" rx="4.2" fill="none" stroke="#000" stroke-width="1.4" opacity="0.3"/>
<rect x="558.4" y="81.6" width="90.2" height="47.3" rx="3.5" fill="#111111" fill-opacity="0.86" stroke="#050505" stroke-opacity="0.9" stroke-width="0.8"/>
<path d="M558.9 93.6 v-8 a3.5 3.5 0 0 1 3.5 -3.5 h82.2 a3.5 3.5 0 0 1 3.5 3.5 v8 z" fill="url(#g3)"/>
<path d="M558.9 93.6 v-8 a3.5 3.5 0 0 1 3.5 -3.5 h82.2 a3.5 3.5 0 0 1 3.5 3.5 v8 z" fill="url(#g4)"/>
<g transform="translate(567.7 87.3)" fill="none" stroke="#f0f0f0" stroke-width="1.1"><path d="M-3.8 0 h2.6 M-1.3 -2.4 v4.8 M-1.9 -2.4 h3.4 M-1.9 2.4 h3.4"/><rect x="1.3" y="-3.4" width="2" height="2" fill="#f0f0f0" stroke="none"/><rect x="1.3" y="1.4" width="2" height="2" fill="#f0f0f0" stroke="none"/></g>
<text transform="translate(573.9 90) scale(0.86 1)" font-size="7.6" fill="#d0d0d0" font-weight="bold">Branch</text>
<path d="M566 100.45 h2.8 l3.1 3.15 l-3.1 3.15 h-2.8 z" fill="#fff" stroke="#fff" stroke-width="0.7" stroke-linejoin="round"/>
<circle cx="568.3" cy="119.2" r="2.9" fill="#950000"/>
<path d="M570.9 117.5 l1.9 1.7 l-1.9 1.7 z" fill="#950000"/>
<text transform="translate(576 121.2) scale(0.86 1)" font-size="7" fill="#e4e4e4" stroke="#e4e4e4" stroke-width="0.28">Condition</text>
<path d="M636.7 100.45 h2.8 l3.1 3.15 l-3.1 3.15 h-2.8 z" fill="#fff" stroke="#fff" stroke-width="0.7" stroke-linejoin="round"/>
<text transform="translate(634 105.6) scale(0.86 1)" font-size="7" fill="#e4e4e4" text-anchor="end" stroke="#e4e4e4" stroke-width="0.28">True</text>
<path d="M636.7 116.05 h2.8 l3.1 3.15 l-3.1 3.15 h-2.8 z" fill="#fff" stroke="#fff" stroke-width="0.7" stroke-linejoin="round"/>
<text transform="translate(634 121.2) scale(0.86 1)" font-size="7" fill="#e4e4e4" text-anchor="end" stroke="#e4e4e4" stroke-width="0.28">False</text>
<rect x="434.7" y="146.4" width="98.6" height="21.4" rx="8.8" fill="none" stroke="#000" stroke-width="2.6" opacity="0.2"/>
<rect x="435.3" y="146.8" width="97.4" height="19.8" rx="8.2" fill="none" stroke="#000" stroke-width="1.4" opacity="0.3"/>
<rect x="436" y="147" width="96" height="18" rx="7.5" fill="url(#g1)" stroke="#0c0c0c" stroke-opacity="0.85" stroke-width="0.9"/>
<rect x="438.5" y="147.6" width="91" height="8.1" rx="5" fill="url(#g2)"/>
<path d="M441.25 147.9 h85.5" stroke="#ffffff" stroke-opacity="0.22" stroke-width="0.8" fill="none"/>
<circle cx="519.6" cy="156" r="2.9" fill="#950000"/>
<path d="M522.2 154.3 l1.9 1.7 l-1.9 1.7 z" fill="#950000"/>
<text transform="translate(513.8 157.9) scale(0.86 1)" font-size="7" fill="#f2f2f2" text-anchor="end" stroke="#f2f2f2" stroke-width="0.28">Allow Dropping Held Item</text>
<rect x="150.7" y="212.2" width="132.6" height="57.6" rx="4.8" fill="none" stroke="#000" stroke-width="2.6" opacity="0.2"/>
<rect x="151.3" y="212.6" width="131.4" height="56" rx="4.2" fill="none" stroke="#000" stroke-width="1.4" opacity="0.3"/>
<rect x="152" y="212.8" width="130" height="54.2" rx="3.5" fill="#111111" fill-opacity="0.86" stroke="#050505" stroke-opacity="0.9" stroke-width="0.8"/>
<path d="M152.5 224.8 v-8 a3.5 3.5 0 0 1 3.5 -3.5 h122 a3.5 3.5 0 0 1 3.5 3.5 v8 z" fill="url(#g6)"/>
<path d="M152.5 224.8 v-8 a3.5 3.5 0 0 1 3.5 -3.5 h122 a3.5 3.5 0 0 1 3.5 3.5 v8 z" fill="url(#g4)"/>
<g transform="translate(160 218.5)" fill="#f2f2f2" stroke="#f2f2f2"><rect x="-3.6" y="-1" width="3.4" height="2" stroke="none"/><path d="M0 0 L2.4 -2.6 M0 0 L2.4 2.6" stroke-width="1" fill="none"/><rect x="1.9" y="-3.5" width="1.7" height="1.7" stroke="none"/><rect x="1.9" y="1.8" width="1.7" height="1.7" stroke="none"/></g>
<text transform="translate(166.3 221.2) scale(0.86 1)" font-size="7.6" fill="#dcdcdc" font-weight="bold">Break S_WeaponSlot</text>
<circle cx="161" cy="233" r="2.9" fill="#0057c8"/>
<path d="M163.6 231.3 l1.9 1.7 l-1.9 1.7 z" fill="#0057c8"/>
<text transform="translate(168.7 235) scale(0.86 1)" font-size="7" fill="#e4e4e4" stroke="#e4e4e4" stroke-width="0.28">S Weapon Slot</text>
<circle cx="270.8" cy="233" r="2.9" fill="#00675c"/>
<path d="M273.4 231.3 l1.9 1.7 l-1.9 1.7 z" fill="#00675c"/>
<text transform="translate(265.7 235) scale(0.86 1)" font-size="7" fill="#e4e4e4" text-anchor="end" stroke="#e4e4e4" stroke-width="0.28">Equipment Type</text>
<circle cx="270.8" cy="248.4" r="2.3" fill="#0c0c0c" stroke="#00439c" stroke-width="1.15"/>
<path d="M273.8 246.9 l1.6 1.5 l-1.6 1.5 z" fill="#00439c"/>
<text transform="translate(265.7 250.4) scale(0.86 1)" font-size="7" fill="#e4e4e4" text-anchor="end" stroke="#e4e4e4" stroke-width="0.28">Item</text>
<path d="M214.7 260.1 l2.3 2.3 l2.3 -2.3" fill="none" stroke="#e8e8e8" stroke-width="1.1"/>
<rect x="52.7" y="236.2" width="86.6" height="21.6" rx="8.8" fill="none" stroke="#000" stroke-width="2.6" opacity="0.2"/>
<rect x="53.3" y="236.6" width="85.4" height="20" rx="8.2" fill="none" stroke="#000" stroke-width="1.4" opacity="0.3"/>
<rect x="54" y="236.8" width="84" height="18.2" rx="7.5" fill="url(#g1)" stroke="#0c0c0c" stroke-opacity="0.85" stroke-width="0.9"/>
<rect x="56.5" y="237.4" width="79" height="8.19" rx="5" fill="url(#g7)"/>
<path d="M59.25 237.7 h73.5" stroke="#ffffff" stroke-opacity="0.22" stroke-width="0.8" fill="none"/>
<circle cx="125.6" cy="245.9" r="2.9" fill="#0057c8"/>
<path d="M128.2 244.2 l1.9 1.7 l-1.9 1.7 z" fill="#0057c8"/>
<text transform="translate(119.8 247.8) scale(0.86 1)" font-size="7" fill="#f2f2f2" text-anchor="end" stroke="#f2f2f2" stroke-width="0.28">Holding Weapon Slot</text>
<rect x="52.7" y="268.7" width="70.6" height="21.1" rx="8.8" fill="none" stroke="#000" stroke-width="2.6" opacity="0.2"/>
<rect x="53.3" y="269.1" width="69.4" height="19.5" rx="8.2" fill="none" stroke="#000" stroke-width="1.4" opacity="0.3"/>
<rect x="54" y="269.3" width="68" height="17.7" rx="7.5" fill="url(#g1)" stroke="#0c0c0c" stroke-opacity="0.85" stroke-width="0.9"/>
<rect x="56.5" y="269.9" width="63" height="7.96" rx="5" fill="url(#g7)"/>
<path d="M59.25 270.2 h57.5" stroke="#ffffff" stroke-opacity="0.22" stroke-width="0.8" fill="none"/>
<circle cx="109.6" cy="278.15" r="2.9" fill="#0057c8"/>
<path d="M112.2 276.45 l1.9 1.7 l-1.9 1.7 z" fill="#0057c8"/>
<text transform="translate(103.8 280.05) scale(0.86 1)" font-size="7" fill="#f2f2f2" text-anchor="end" stroke="#f2f2f2" stroke-width="0.28">Weapon Slot ID</text>
<rect x="150.7" y="277.2" width="129.6" height="48.1" rx="4.8" fill="none" stroke="#000" stroke-width="2.6" opacity="0.2"/>
<rect x="151.3" y="277.6" width="128.4" height="46.5" rx="4.2" fill="none" stroke="#000" stroke-width="1.4" opacity="0.3"/>
<rect x="152" y="277.8" width="127" height="44.7" rx="3.5" fill="#111111" fill-opacity="0.86" stroke="#050505" stroke-opacity="0.9" stroke-width="0.8"/>
<path d="M152.5 289.8 v-8 a3.5 3.5 0 0 1 3.5 -3.5 h119 a3.5 3.5 0 0 1 3.5 3.5 v8 z" fill="url(#g6)"/>
<path d="M152.5 289.8 v-8 a3.5 3.5 0 0 1 3.5 -3.5 h119 a3.5 3.5 0 0 1 3.5 3.5 v8 z" fill="url(#g4)"/>
<g transform="translate(160 283.5)" fill="#f2f2f2" stroke="#f2f2f2"><rect x="-3.6" y="-1" width="3.4" height="2" stroke="none"/><path d="M0 0 L2.4 -2.6 M0 0 L2.4 2.6" stroke-width="1" fill="none"/><rect x="1.9" y="-3.5" width="1.7" height="1.7" stroke="none"/><rect x="1.9" y="1.8" width="1.7" height="1.7" stroke="none"/></g>
<text transform="translate(166.3 286.2) scale(0.86 1)" font-size="7.6" fill="#dcdcdc" font-weight="bold">Break S_WeaponSlotID</text>
<circle cx="161" cy="298.4" r="2.9" fill="#0057c8"/>
<path d="M163.6 296.7 l1.9 1.7 l-1.9 1.7 z" fill="#0057c8"/>
<text transform="translate(168.7 300.4) scale(0.86 1)" font-size="7" fill="#e4e4e4" stroke="#e4e4e4" stroke-width="0.28">S Weapon Slot ID</text>
<circle cx="267.8" cy="298.4" r="2.9" fill="#00675c"/>
<path d="M270.4 296.7 l1.9 1.7 l-1.9 1.7 z" fill="#00675c"/>
<text transform="translate(262.7 300.4) scale(0.86 1)" font-size="7" fill="#e4e4e4" text-anchor="end" stroke="#e4e4e4" stroke-width="0.28">Weapon Slot</text>
<circle cx="267.8" cy="313.5" r="2.3" fill="#0c0c0c" stroke="#0083bb" stroke-width="1.15"/>
<path d="M270.8 312 l1.6 1.5 l-1.6 1.5 z" fill="#0083bb"/>
<text transform="translate(262.7 315.5) scale(0.86 1)" font-size="7" fill="#e4e4e4" text-anchor="end" stroke="#e4e4e4" stroke-width="0.28">Inventory</text>
<rect x="305.7" y="252.9" width="75.9" height="32.2" rx="6.8" fill="none" stroke="#000" stroke-width="2.6" opacity="0.2"/>
<rect x="306.3" y="253.3" width="74.7" height="30.6" rx="6.2" fill="none" stroke="#000" stroke-width="1.4" opacity="0.3"/>
<rect x="307" y="253.5" width="73.3" height="28.8" rx="5.5" fill="url(#g8)" stroke="#0a0a0a" stroke-opacity="0.85" stroke-width="0.9"/>
<text transform="translate(343.65 271.98) scale(0.9 1)" font-size="12" fill="#c0c0c0" text-anchor="middle" font-weight="bold">==</text>
<circle cx="315.4" cy="260.8" r="2.9" fill="#00675c"/>
<path d="M318 259.1 l1.9 1.7 l-1.9 1.7 z" fill="#00675c"/>
<circle cx="315.4" cy="274.6" r="2.9" fill="#00675c"/>
<path d="M318 272.9 l1.9 1.7 l-1.9 1.7 z" fill="#00675c"/>
<circle cx="369" cy="267.5" r="2.9" fill="#950000"/>
<path d="M371.6 265.8 l1.9 1.7 l-1.9 1.7 z" fill="#950000"/>
<rect x="679.7" y="122.4" width="72.6" height="21.4" rx="8.8" fill="none" stroke="#000" stroke-width="2.6" opacity="0.2"/>
<rect x="680.3" y="122.8" width="71.4" height="19.8" rx="8.2" fill="none" stroke="#000" stroke-width="1.4" opacity="0.3"/>
<rect x="681" y="123" width="70" height="18" rx="7.5" fill="url(#g1)" stroke="#0c0c0c" stroke-opacity="0.85" stroke-width="0.9"/>
<rect x="683.5" y="123.6" width="65" height="8.1" rx="5" fill="url(#g7)"/>
<path d="M686.25 123.9 h59.5" stroke="#ffffff" stroke-opacity="0.22" stroke-width="0.8" fill="none"/>
<circle cx="738.6" cy="132" r="2.9" fill="#0057c8"/>
<path d="M741.2 130.3 l1.9 1.7 l-1.9 1.7 z" fill="#0057c8"/>
<text transform="translate(732.8 133.9) scale(0.86 1)" font-size="7" fill="#f2f2f2" text-anchor="end" stroke="#f2f2f2" stroke-width="0.28">Holding Inv Slot</text>
<circle cx="750.3" cy="119.2" r="2.7" fill="#e8e8e8"/><circle cx="753.3" cy="121.8" r="2.7" fill="#fafafa"/>
<circle cx="1075" cy="135.8" r="2.7" fill="#e8e8e8"/><circle cx="1078" cy="138.4" r="2.7" fill="#fafafa"/>
<rect x="760.7" y="113.8" width="91.8" height="33.3" rx="4.8" fill="none" stroke="#000" stroke-width="2.6" opacity="0.2"/>
<rect x="761.3" y="114.2" width="90.6" height="31.7" rx="4.2" fill="none" stroke="#000" stroke-width="1.4" opacity="0.3"/>
<rect x="762" y="114.4" width="89.2" height="29.9" rx="3.5" fill="#111111" fill-opacity="0.86" stroke="#050505" stroke-opacity="0.9" stroke-width="0.8"/>
<path d="M762.5 126.4 v-8 a3.5 3.5 0 0 1 3.5 -3.5 h81.2 a3.5 3.5 0 0 1 3.5 3.5 v8 z" fill="url(#g9)"/>
<path d="M762.5 126.4 v-8 a3.5 3.5 0 0 1 3.5 -3.5 h81.2 a3.5 3.5 0 0 1 3.5 3.5 v8 z" fill="url(#g4)"/>
<text x="768.2" y="122.7" font-size="8.5" fill="#e8e8e8" font-style="italic">ƒ</text>
<text transform="translate(776.3 122.8) scale(0.86 1)" font-size="7.6" fill="#dcdcdc" font-weight="bold">SGK Inv Slot Item</text>
<circle cx="771" cy="135" r="2.9" fill="#0057c8"/>
<path d="M773.6 133.3 l1.9 1.7 l-1.9 1.7 z" fill="#0057c8"/>
<text transform="translate(778.7 137) scale(0.86 1)" font-size="7" fill="#e4e4e4" stroke="#e4e4e4" stroke-width="0.28">Inv Slot</text>
<circle cx="840" cy="135" r="2.9" fill="#0057c8"/>
<path d="M842.6 133.3 l1.9 1.7 l-1.9 1.7 z" fill="#0057c8"/>
<text transform="translate(834.9 137) scale(0.86 1)" font-size="7" fill="#e4e4e4" text-anchor="end" stroke="#e4e4e4" stroke-width="0.28">Inv Item</text>
<rect x="866.7" y="81.6" width="92.6" height="50.2" rx="4.8" fill="none" stroke="#000" stroke-width="2.6" opacity="0.2"/>
<rect x="867.3" y="82" width="91.4" height="48.6" rx="4.2" fill="none" stroke="#000" stroke-width="1.4" opacity="0.3"/>
<rect x="868" y="82.2" width="90" height="46.8" rx="3.5" fill="#111111" fill-opacity="0.86" stroke="#050505" stroke-opacity="0.9" stroke-width="0.8"/>
<path d="M868.5 94.2 v-8 a3.5 3.5 0 0 1 3.5 -3.5 h82 a3.5 3.5 0 0 1 3.5 3.5 v8 z" fill="url(#g10)"/>
<path d="M868.5 94.2 v-8 a3.5 3.5 0 0 1 3.5 -3.5 h82 a3.5 3.5 0 0 1 3.5 3.5 v8 z" fill="url(#g4)"/>
<text transform="translate(872.4 90.7) scale(0.8 1)" font-size="8.5" fill="#eee" font-style="italic">M</text>
<text transform="translate(882.3 90.6) scale(0.86 1)" font-size="7.6" fill="#d0d0d0" font-weight="bold">Is Quick Slot Valid</text>
<path d="M874.7 100.35 h2.8 l3.1 3.15 l-3.1 3.15 h-2.8 z" fill="#fff" stroke="#fff" stroke-width="0.7" stroke-linejoin="round"/>
<circle cx="877" cy="119" r="2.9" fill="#0057c8"/>
<path d="M879.6 117.3 l1.9 1.7 l-1.9 1.7 z" fill="#0057c8"/>
<text transform="translate(884.7 121) scale(0.86 1)" font-size="7" fill="#e4e4e4" stroke="#e4e4e4" stroke-width="0.28">Item</text>
<path d="M946.1 100.35 h2.8 l3.1 3.15 l-3.1 3.15 h-2.8 z" fill="#fff" stroke="#fff" stroke-width="0.7" stroke-linejoin="round"/>
<text transform="translate(943.4 105.5) scale(0.86 1)" font-size="7" fill="#e4e4e4" text-anchor="end" stroke="#e4e4e4" stroke-width="0.28">True</text>
<path d="M946.1 115.85 h2.8 l3.1 3.15 l-3.1 3.15 h-2.8 z" fill="#fff" stroke="#fff" stroke-width="0.7" stroke-linejoin="round"/>
<text transform="translate(943.4 121) scale(0.86 1)" font-size="7" fill="#e4e4e4" text-anchor="end" stroke="#e4e4e4" stroke-width="0.28">False</text>
<rect x="679" y="186.8" width="92.8" height="50.7" rx="4.8" fill="none" stroke="#000" stroke-width="2.6" opacity="0.2"/>
<rect x="679.6" y="187.2" width="91.6" height="49.1" rx="4.2" fill="none" stroke="#000" stroke-width="1.4" opacity="0.3"/>
<rect x="680.3" y="187.4" width="90.2" height="47.3" rx="3.5" fill="#111111" fill-opacity="0.86" stroke="#050505" stroke-opacity="0.9" stroke-width="0.8"/>
<path d="M680.8 199.4 v-8 a3.5 3.5 0 0 1 3.5 -3.5 h82.2 a3.5 3.5 0 0 1 3.5 3.5 v8 z" fill="url(#g3)"/>
<path d="M680.8 199.4 v-8 a3.5 3.5 0 0 1 3.5 -3.5 h82.2 a3.5 3.5 0 0 1 3.5 3.5 v8 z" fill="url(#g4)"/>
<g transform="translate(689.6 193.1)" fill="none" stroke="#f0f0f0" stroke-width="1.1"><path d="M-3.8 0 h2.6 M-1.3 -2.4 v4.8 M-1.9 -2.4 h3.4 M-1.9 2.4 h3.4"/><rect x="1.3" y="-3.4" width="2" height="2" fill="#f0f0f0" stroke="none"/><rect x="1.3" y="1.4" width="2" height="2" fill="#f0f0f0" stroke="none"/></g>
<text transform="translate(695.8 195.8) scale(0.86 1)" font-size="7.6" fill="#d0d0d0" font-weight="bold">Branch</text>
<path d="M687.9 206.25 h2.8 l3.1 3.15 l-3.1 3.15 h-2.8 z" fill="#fff" stroke="#fff" stroke-width="0.7" stroke-linejoin="round"/>
<circle cx="690.2" cy="225" r="2.9" fill="#950000"/>
<path d="M692.8 223.3 l1.9 1.7 l-1.9 1.7 z" fill="#950000"/>
<text transform="translate(697.9 227) scale(0.86 1)" font-size="7" fill="#e4e4e4" stroke="#e4e4e4" stroke-width="0.28">Condition</text>
<path d="M758.6 206.25 h2.8 l3.1 3.15 l-3.1 3.15 h-2.8 z" fill="#fff" stroke="#fff" stroke-width="0.7" stroke-linejoin="round"/>
<text transform="translate(755.9 211.4) scale(0.86 1)" font-size="7" fill="#e4e4e4" text-anchor="end" stroke="#e4e4e4" stroke-width="0.28">True</text>
<path d="M758.6 221.85 h2.8 l3.1 3.15 l-3.1 3.15 h-2.8 z" fill="#111" stroke="#e8e8e8" stroke-width="1" stroke-linejoin="round"/>
<text transform="translate(755.9 227) scale(0.86 1)" font-size="7" fill="#e4e4e4" text-anchor="end" stroke="#e4e4e4" stroke-width="0.28">False</text>
<rect x="581.7" y="236.4" width="69.2" height="21.4" rx="8.8" fill="none" stroke="#000" stroke-width="2.6" opacity="0.2"/>
<rect x="582.3" y="236.8" width="68" height="19.8" rx="8.2" fill="none" stroke="#000" stroke-width="1.4" opacity="0.3"/>
<rect x="583" y="237" width="66.6" height="18" rx="7.5" fill="url(#g1)" stroke="#0c0c0c" stroke-opacity="0.85" stroke-width="0.9"/>
<rect x="585.5" y="237.6" width="61.6" height="8.1" rx="5" fill="url(#g2)"/>
<path d="M588.25 237.9 h56.1" stroke="#ffffff" stroke-opacity="0.22" stroke-width="0.8" fill="none"/>
<circle cx="636.6" cy="246" r="2.9" fill="#950000"/>
<path d="M639.2 244.3 l1.9 1.7 l-1.9 1.7 z" fill="#950000"/>
<text transform="translate(630.8 247.9) scale(0.86 1)" font-size="7" fill="#f2f2f2" text-anchor="end" stroke="#f2f2f2" stroke-width="0.28">Destroy</text>
<rect x="1004.7" y="138.4" width="72.6" height="21.4" rx="8.8" fill="none" stroke="#000" stroke-width="2.6" opacity="0.2"/>
<rect x="1005.3" y="138.8" width="71.4" height="19.8" rx="8.2" fill="none" stroke="#000" stroke-width="1.4" opacity="0.3"/>
<rect x="1006" y="139" width="70" height="18" rx="7.5" fill="url(#g1)" stroke="#0c0c0c" stroke-opacity="0.85" stroke-width="0.9"/>
<rect x="1008.5" y="139.6" width="65" height="8.1" rx="5" fill="url(#g7)"/>
<path d="M1011.25 139.9 h59.5" stroke="#ffffff" stroke-opacity="0.22" stroke-width="0.8" fill="none"/>
<circle cx="1063.6" cy="148" r="2.9" fill="#0057c8"/>
<path d="M1066.2 146.3 l1.9 1.7 l-1.9 1.7 z" fill="#0057c8"/>
<text transform="translate(1057.8 149.9) scale(0.86 1)" font-size="7" fill="#f2f2f2" text-anchor="end" stroke="#f2f2f2" stroke-width="0.28">Holding Inv Slot</text>
<rect x="1085.7" y="122" width="91.9" height="33.2" rx="4.8" fill="none" stroke="#000" stroke-width="2.6" opacity="0.2"/>
<rect x="1086.3" y="122.4" width="90.7" height="31.6" rx="4.2" fill="none" stroke="#000" stroke-width="1.4" opacity="0.3"/>
<rect x="1087" y="122.6" width="89.3" height="29.8" rx="3.5" fill="#111111" fill-opacity="0.86" stroke="#050505" stroke-opacity="0.9" stroke-width="0.8"/>
<path d="M1087.5 134.6 v-8 a3.5 3.5 0 0 1 3.5 -3.5 h81.3 a3.5 3.5 0 0 1 3.5 3.5 v8 z" fill="url(#g9)"/>
<path d="M1087.5 134.6 v-8 a3.5 3.5 0 0 1 3.5 -3.5 h81.3 a3.5 3.5 0 0 1 3.5 3.5 v8 z" fill="url(#g4)"/>
<text x="1093.2" y="130.9" font-size="8.5" fill="#e8e8e8" font-style="italic">ƒ</text>
<text transform="translate(1101.3 131) scale(0.86 1)" font-size="7.6" fill="#dcdcdc" font-weight="bold">SGK Inv Slot Item</text>
<circle cx="1096" cy="143.7" r="2.9" fill="#0057c8"/>
<path d="M1098.6 142 l1.9 1.7 l-1.9 1.7 z" fill="#0057c8"/>
<text transform="translate(1103.7 145.7) scale(0.86 1)" font-size="7" fill="#e4e4e4" stroke="#e4e4e4" stroke-width="0.28">Inv Slot</text>
<circle cx="1165.1" cy="143.7" r="2.9" fill="#0057c8"/>
<path d="M1167.7 142 l1.9 1.7 l-1.9 1.7 z" fill="#0057c8"/>
<text transform="translate(1160 145.7) scale(0.86 1)" font-size="7" fill="#e4e4e4" text-anchor="end" stroke="#e4e4e4" stroke-width="0.28">Inv Item</text>
<rect x="1184" y="121.7" width="122.1" height="88.6" rx="4.8" fill="none" stroke="#000" stroke-width="2.6" opacity="0.2"/>
<rect x="1184.6" y="122.1" width="120.9" height="87" rx="4.2" fill="none" stroke="#000" stroke-width="1.4" opacity="0.3"/>
<rect x="1185.3" y="122.3" width="119.5" height="85.2" rx="3.5" fill="#111111" fill-opacity="0.86" stroke="#050505" stroke-opacity="0.9" stroke-width="0.8"/>
<path d="M1185.8 134.3 v-8 a3.5 3.5 0 0 1 3.5 -3.5 h111.5 a3.5 3.5 0 0 1 3.5 3.5 v8 z" fill="url(#g6)"/>
<path d="M1185.8 134.3 v-8 a3.5 3.5 0 0 1 3.5 -3.5 h111.5 a3.5 3.5 0 0 1 3.5 3.5 v8 z" fill="url(#g4)"/>
<g transform="translate(1193.3 128)" fill="#f2f2f2" stroke="#f2f2f2"><rect x="-3.6" y="-1" width="3.4" height="2" stroke="none"/><path d="M0 0 L2.4 -2.6 M0 0 L2.4 2.6" stroke-width="1" fill="none"/><rect x="1.9" y="-3.5" width="1.7" height="1.7" stroke="none"/><rect x="1.9" y="1.8" width="1.7" height="1.7" stroke="none"/></g>
<text transform="translate(1199.6 130.7) scale(0.86 1)" font-size="7.6" fill="#dcdcdc" font-weight="bold">Break S_InvItem</text>
<circle cx="1194.3" cy="143.6" r="2.9" fill="#0057c8"/>
<path d="M1196.9 141.9 l1.9 1.7 l-1.9 1.7 z" fill="#0057c8"/>
<text transform="translate(1202 145.6) scale(0.86 1)" font-size="7" fill="#e4e4e4" stroke="#e4e4e4" stroke-width="0.28">S Inv Item</text>
<circle cx="1293.6" cy="143.6" r="2.9" fill="#1fe3a8"/>
<path d="M1296.2 141.9 l1.9 1.7 l-1.9 1.7 z" fill="#1fe3a8"/>
<text transform="translate(1288.5 145.6) scale(0.86 1)" font-size="7" fill="#e4e4e4" text-anchor="end" stroke="#e4e4e4" stroke-width="0.28">Quick Bind Index</text>
<circle cx="1293.6" cy="158.8" r="2.3" fill="#0c0c0c" stroke="#740000" stroke-width="1.15"/>
<path d="M1296.6 157.3 l1.6 1.5 l-1.6 1.5 z" fill="#740000"/>
<text transform="translate(1288.5 160.8) scale(0.86 1)" font-size="7" fill="#e4e4e4" text-anchor="end" stroke="#e4e4e4" stroke-width="0.28">In Use</text>
<circle cx="1293.6" cy="174" r="2.3" fill="#0c0c0c" stroke="#4a633e" stroke-width="1.15"/>
<path d="M1296.6 172.5 l1.6 1.5 l-1.6 1.5 z" fill="#4a633e"/>
<text transform="translate(1288.5 176) scale(0.86 1)" font-size="7" fill="#e4e4e4" text-anchor="end" stroke="#e4e4e4" stroke-width="0.28">Durability</text>
<circle cx="1293.6" cy="189" r="2.3" fill="#0c0c0c" stroke="#18b183" stroke-width="1.15"/>
<path d="M1296.6 187.5 l1.6 1.5 l-1.6 1.5 z" fill="#18b183"/>
<text transform="translate(1288.5 191) scale(0.86 1)" font-size="7" fill="#e4e4e4" text-anchor="end" stroke="#e4e4e4" stroke-width="0.28">Decay Time</text>
<path d="M1242.75 203.7 l2.3 -2.3 l2.3 2.3" fill="none" stroke="#e8e8e8" stroke-width="1.1"/>
<rect x="1314.7" y="65.4" width="166.6" height="100.9" rx="4.8" fill="none" stroke="#000" stroke-width="2.6" opacity="0.2"/>
<rect x="1315.3" y="65.8" width="165.4" height="99.3" rx="4.2" fill="none" stroke="#000" stroke-width="1.4" opacity="0.3"/>
<rect x="1316" y="66" width="164" height="97.5" rx="3.5" fill="#111111" fill-opacity="0.86" stroke="#050505" stroke-opacity="0.9" stroke-width="0.8"/>
<path d="M1316.5 95.3 v-25.3 a3.5 3.5 0 0 1 3.5 -3.5 h156 a3.5 3.5 0 0 1 3.5 3.5 v25.3 z" fill="url(#g5)"/>
<path d="M1316.5 95.3 v-25.3 a3.5 3.5 0 0 1 3.5 -3.5 h156 a3.5 3.5 0 0 1 3.5 3.5 v25.3 z" fill="url(#g4)"/>
<g transform="translate(1324 71.8)"><path d="M-3.7 0 L0 -3.7 L3.7 0 L0 3.7 Z" fill="none" stroke="#f4f4f4" stroke-width="1.15" stroke-linejoin="round"/><path d="M-0.6 -1.7 L1.6 0 L-0.6 1.7 Z" fill="#f4f4f4"/></g>
<text transform="translate(1330.3 74.5) scale(0.86 1)" font-size="7.6" fill="#dcdcdc" font-weight="bold">Client Quick Slot Highlight</text>
<text transform="translate(1330.8 84.1) scale(0.94 1)" font-size="6.4" fill="#a9bccb" font-style="italic" opacity="0.85">Target is BP Player Inventory</text>
<text transform="translate(1330.8 91.3) scale(0.94 1)" font-size="6.4" fill="#a9bccb" font-style="italic" opacity="0.85">RELIABLE Replicated To Owning Client (if server)</text>
<path d="M1322.7 100.85 h2.8 l3.1 3.15 l-3.1 3.15 h-2.8 z" fill="#fff" stroke="#fff" stroke-width="0.7" stroke-linejoin="round"/>
<circle cx="1325" cy="121" r="2.3" fill="#0c0c0c" stroke="#0083bb" stroke-width="1.15"/>
<path d="M1328 119.5 l1.6 1.5 l-1.6 1.5 z" fill="#0083bb"/>
<text transform="translate(1332.7 123) scale(0.86 1)" font-size="7" fill="#e4e4e4" stroke="#e4e4e4" stroke-width="0.28">Target</text>
<rect x="1352" y="116.2" width="21" height="9.6" rx="0.8" fill="#000" fill-opacity="0.15" stroke="#a8a8a8" stroke-width="0.7"/>
<text transform="translate(1354.4 123.1) scale(0.86 1)" font-size="7" fill="#a0a0a0" stroke="#a0a0a0" stroke-width="0.28">self</text>
<circle cx="1325" cy="137.5" r="2.9" fill="#1fe3a8"/>
<path d="M1327.6 135.8 l1.9 1.7 l-1.9 1.7 z" fill="#1fe3a8"/>
<text transform="translate(1332.7 139.5) scale(0.86 1)" font-size="7" fill="#e4e4e4" stroke="#e4e4e4" stroke-width="0.28">Quick Slot Index</text>
<circle cx="1325" cy="154" r="2.3" fill="#0c0c0c" stroke="#740000" stroke-width="1.15"/>
<path d="M1328 152.5 l1.6 1.5 l-1.6 1.5 z" fill="#740000"/>
<text transform="translate(1332.7 156) scale(0.86 1)" font-size="7" fill="#e4e4e4" stroke="#e4e4e4" stroke-width="0.28">Highlight</text>
<rect x="1359" y="149.7" width="8.6" height="8.6" rx="1" fill="#0a0a0a" stroke="#2a2a2a" stroke-width="0.8"/>
<path d="M1468.1 100.85 h2.8 l3.1 3.15 l-3.1 3.15 h-2.8 z" fill="#fff" stroke="#fff" stroke-width="0.7" stroke-linejoin="round"/>
<rect x="1549.7" y="138.4" width="131.6" height="82.4" rx="8.3" fill="none" stroke="#000" stroke-width="2.6" opacity="0.2"/>
<rect x="1550.3" y="138.8" width="130.4" height="80.8" rx="7.7" fill="none" stroke="#000" stroke-width="1.4" opacity="0.3"/>
<rect x="1551" y="139" width="129" height="79" rx="7" fill="url(#g11)" stroke="#0a0a0a" stroke-opacity="0.85" stroke-width="0.9"/>
<rect x="1559" y="139.6" width="113" height="5" rx="2" fill="url(#g12)"/>
<circle cx="1668.1" cy="148" r="2.3" fill="#0c0c0c" stroke="#005047" stroke-width="1.15"/>
<path d="M1671.1 146.5 l1.6 1.5 l-1.6 1.5 z" fill="#005047"/>
<text transform="translate(1662.5 149.8) scale(0.86 1)" font-size="7" fill="#e4e4e4" text-anchor="end" stroke="#e4e4e4" stroke-width="0.28">Holding Weapon Slot Equipment Type</text>
<circle cx="1668.1" cy="163" r="2.3" fill="#0c0c0c" stroke="#00439c" stroke-width="1.15"/>
<path d="M1671.1 161.5 l1.6 1.5 l-1.6 1.5 z" fill="#00439c"/>
<text transform="translate(1662.5 164.8) scale(0.86 1)" font-size="7" fill="#e4e4e4" text-anchor="end" stroke="#e4e4e4" stroke-width="0.28">Holding Weapon Slot Item</text>
<circle cx="1668.1" cy="178" r="2.3" fill="#0c0c0c" stroke="#0083bb" stroke-width="1.15"/>
<path d="M1671.1 176.5 l1.6 1.5 l-1.6 1.5 z" fill="#0083bb"/>
<text transform="translate(1662.5 179.8) scale(0.86 1)" font-size="7" fill="#e4e4e4" text-anchor="end" stroke="#e4e4e4" stroke-width="0.28">Holding Weapon Slot Inventory</text>
<circle cx="1668.1" cy="193" r="2.3" fill="#0c0c0c" stroke="#0083bb" stroke-width="1.15"/>
<path d="M1671.1 191.5 l1.6 1.5 l-1.6 1.5 z" fill="#0083bb"/>
<text transform="translate(1662.5 194.8) scale(0.86 1)" font-size="7" fill="#e4e4e4" text-anchor="end" stroke="#e4e4e4" stroke-width="0.28">Holding Weapon Slot Holdable Actor</text>
<circle cx="1668.1" cy="208" r="2.9" fill="#1fe3a8"/>
<path d="M1670.7 206.3 l1.9 1.7 l-1.9 1.7 z" fill="#1fe3a8"/>
<text transform="translate(1662.5 209.8) scale(0.86 1)" font-size="7" fill="#e4e4e4" text-anchor="end" stroke="#e4e4e4" stroke-width="0.28">Holding Weapon Slot Quick Slot Index</text>
<rect x="1713.2" y="145.9" width="89.6" height="38.4" rx="6.8" fill="none" stroke="#000" stroke-width="2.6" opacity="0.2"/>
<rect x="1713.8" y="146.3" width="88.4" height="36.8" rx="6.2" fill="none" stroke="#000" stroke-width="1.4" opacity="0.3"/>
<rect x="1714.5" y="146.5" width="87" height="35" rx="5.5" fill="url(#g8)" stroke="#0a0a0a" stroke-opacity="0.85" stroke-width="0.9"/>
<text transform="translate(1757.5 168.5) scale(0.9 1)" font-size="13" fill="#c8c8c8" text-anchor="middle" font-weight="bold">!=</text>
<circle cx="1724" cy="155" r="2.9" fill="#1fe3a8"/>
<path d="M1726.6 153.3 l1.9 1.7 l-1.9 1.7 z" fill="#1fe3a8"/>
<circle cx="1724" cy="171" r="2.3" fill="#0c0c0c" stroke="#18b183" stroke-width="1.15"/>
<path d="M1727 169.5 l1.6 1.5 l-1.6 1.5 z" fill="#18b183"/>
<rect x="1733.5" y="166.2" width="12.5" height="9.6" rx="0.8" fill="none" stroke="#b0b0b0" stroke-width="0.7"/>
<text transform="translate(1735.9 173.1) scale(0.86 1)" font-size="7" fill="#8c8c8c" stroke="#8c8c8c" stroke-width="0.28">-1</text>
<circle cx="1789.1" cy="164" r="2.9" fill="#950000"/>
<path d="M1791.7 162.3 l1.9 1.7 l-1.9 1.7 z" fill="#950000"/>
<rect x="1810.5" y="81" width="92.8" height="50.7" rx="4.8" fill="none" stroke="#000" stroke-width="2.6" opacity="0.2"/>
<rect x="1811.1" y="81.4" width="91.6" height="49.1" rx="4.2" fill="none" stroke="#000" stroke-width="1.4" opacity="0.3"/>
<rect x="1811.8" y="81.6" width="90.2" height="47.3" rx="3.5" fill="#111111" fill-opacity="0.86" stroke="#050505" stroke-opacity="0.9" stroke-width="0.8"/>
<path d="M1812.3 93.6 v-8 a3.5 3.5 0 0 1 3.5 -3.5 h82.2 a3.5 3.5 0 0 1 3.5 3.5 v8 z" fill="url(#g3)"/>
<path d="M1812.3 93.6 v-8 a3.5 3.5 0 0 1 3.5 -3.5 h82.2 a3.5 3.5 0 0 1 3.5 3.5 v8 z" fill="url(#g4)"/>
<g transform="translate(1821.1 87.3)" fill="none" stroke="#f0f0f0" stroke-width="1.1"><path d="M-3.8 0 h2.6 M-1.3 -2.4 v4.8 M-1.9 -2.4 h3.4 M-1.9 2.4 h3.4"/><rect x="1.3" y="-3.4" width="2" height="2" fill="#f0f0f0" stroke="none"/><rect x="1.3" y="1.4" width="2" height="2" fill="#f0f0f0" stroke="none"/></g>
<text transform="translate(1827.3 90) scale(0.86 1)" font-size="7.6" fill="#d0d0d0" font-weight="bold">Branch</text>
<path d="M1819.4 100.45 h2.8 l3.1 3.15 l-3.1 3.15 h-2.8 z" fill="#fff" stroke="#fff" stroke-width="0.7" stroke-linejoin="round"/>
<circle cx="1821.7" cy="119.2" r="2.9" fill="#950000"/>
<path d="M1824.3 117.5 l1.9 1.7 l-1.9 1.7 z" fill="#950000"/>
<text transform="translate(1829.4 121.2) scale(0.86 1)" font-size="7" fill="#e4e4e4" stroke="#e4e4e4" stroke-width="0.28">Condition</text>
<path d="M1890.1 100.45 h2.8 l3.1 3.15 l-3.1 3.15 h-2.8 z" fill="#fff" stroke="#fff" stroke-width="0.7" stroke-linejoin="round"/>
<text transform="translate(1887.4 105.6) scale(0.86 1)" font-size="7" fill="#e4e4e4" text-anchor="end" stroke="#e4e4e4" stroke-width="0.28">True</text>
<path d="M1890.1 116.05 h2.8 l3.1 3.15 l-3.1 3.15 h-2.8 z" fill="#fff" stroke="#fff" stroke-width="0.7" stroke-linejoin="round"/>
<text transform="translate(1887.4 121.2) scale(0.86 1)" font-size="7" fill="#e4e4e4" text-anchor="end" stroke="#e4e4e4" stroke-width="0.28">False</text>
<rect x="248.5" y="382.9" width="100.8" height="32.3" rx="4.8" fill="none" stroke="#000" stroke-width="2.6" opacity="0.2"/>
<rect x="249.1" y="383.3" width="99.6" height="30.7" rx="4.2" fill="none" stroke="#000" stroke-width="1.4" opacity="0.3"/>
<rect x="249.8" y="383.5" width="98.2" height="28.9" rx="3.5" fill="#111111" fill-opacity="0.86" stroke="#050505" stroke-opacity="0.9" stroke-width="0.8"/>
<path d="M250.3 394.5 v-7 a3.5 3.5 0 0 1 3.5 -3.5 h90.2 a3.5 3.5 0 0 1 3.5 3.5 v7 z" fill="url(#g6)"/>
<path d="M250.3 394.5 v-7 a3.5 3.5 0 0 1 3.5 -3.5 h90.2 a3.5 3.5 0 0 1 3.5 3.5 v7 z" fill="url(#g4)"/>
<g transform="translate(257.8 389.2)" fill="#f2f2f2" stroke="#f2f2f2"><rect x="-3.6" y="-1" width="3.4" height="2" stroke="none"/><path d="M0 0 L2.4 -2.6 M0 0 L2.4 2.6" stroke-width="1" fill="none"/><rect x="1.9" y="-3.5" width="1.7" height="1.7" stroke="none"/><rect x="1.9" y="1.8" width="1.7" height="1.7" stroke="none"/></g>
<text transform="translate(264.1 391.9) scale(0.86 1)" font-size="7.6" fill="#dcdcdc" font-weight="bold">Break S_WeaponSlot</text>
<circle cx="258.8" cy="404" r="2.9" fill="#0057c8"/>
<path d="M261.4 402.3 l1.9 1.7 l-1.9 1.7 z" fill="#0057c8"/>
<text transform="translate(266.5 406) scale(0.86 1)" font-size="7" fill="#e4e4e4" stroke="#e4e4e4" stroke-width="0.28">S Weapon Slot</text>
<circle cx="336.8" cy="404" r="2.9" fill="#0057c8"/>
<path d="M339.4 402.3 l1.9 1.7 l-1.9 1.7 z" fill="#0057c8"/>
<text transform="translate(331.7 406) scale(0.86 1)" font-size="7" fill="#e4e4e4" text-anchor="end" stroke="#e4e4e4" stroke-width="0.28">Item</text>
<rect x="249.2" y="382.9" width="99.4" height="30.1" rx="5" fill="none" stroke="#000" stroke-width="3.2" opacity="0.35"/>
<rect x="248.95" y="382.65" width="99.9" height="30.6" rx="5" fill="none" stroke="url(#g13)" stroke-width="1.9"/>
<rect x="158.5" y="399" width="88" height="21.8" rx="8.8" fill="none" stroke="#000" stroke-width="2.6" opacity="0.2"/>
<rect x="159.1" y="399.4" width="86.8" height="20.2" rx="8.2" fill="none" stroke="#000" stroke-width="1.4" opacity="0.3"/>
<rect x="159.8" y="399.6" width="85.4" height="18.4" rx="7.5" fill="url(#g1)" stroke="#0c0c0c" stroke-opacity="0.85" stroke-width="0.9"/>
<rect x="162.3" y="400.2" width="80.4" height="8.28" rx="5" fill="url(#g7)"/>
<path d="M165.05 400.5 h74.9" stroke="#ffffff" stroke-opacity="0.22" stroke-width="0.8" fill="none"/>
<circle cx="233.1" cy="408.8" r="2.9" fill="#0057c8"/>
<path d="M235.7 407.1 l1.9 1.7 l-1.9 1.7 z" fill="#0057c8"/>
<text transform="translate(227.3 410.7) scale(0.86 1)" font-size="7" fill="#f2f2f2" text-anchor="end" stroke="#f2f2f2" stroke-width="0.28">Found Weapon Slot L</text>
<rect x="159.2" y="399" width="86.6" height="19.6" rx="9" fill="none" stroke="#000" stroke-width="3.2" opacity="0.35"/>
<rect x="158.95" y="398.75" width="87.1" height="20.1" rx="9" fill="none" stroke="url(#g13)" stroke-width="1.9"/>
<rect x="353.7" y="382.9" width="86.2" height="42.1" rx="4.8" fill="none" stroke="#000" stroke-width="2.6" opacity="0.2"/>
<rect x="354.3" y="383.3" width="85" height="40.5" rx="4.2" fill="none" stroke="#000" stroke-width="1.4" opacity="0.3"/>
<rect x="355" y="383.5" width="83.6" height="38.7" rx="3.5" fill="#111111" fill-opacity="0.86" stroke="#050505" stroke-opacity="0.9" stroke-width="0.8"/>
<path d="M355.5 394.5 v-7 a3.5 3.5 0 0 1 3.5 -3.5 h75.6 a3.5 3.5 0 0 1 3.5 3.5 v7 z" fill="url(#g6)"/>
<path d="M355.5 394.5 v-7 a3.5 3.5 0 0 1 3.5 -3.5 h75.6 a3.5 3.5 0 0 1 3.5 3.5 v7 z" fill="url(#g4)"/>
<g transform="translate(363 389.2)" fill="#f2f2f2" stroke="#f2f2f2"><rect x="-3.6" y="-1" width="3.4" height="2" stroke="none"/><path d="M0 0 L2.4 -2.6 M0 0 L2.4 2.6" stroke-width="1" fill="none"/><rect x="1.9" y="-3.5" width="1.7" height="1.7" stroke="none"/><rect x="1.9" y="1.8" width="1.7" height="1.7" stroke="none"/></g>
<text transform="translate(369.3 391.9) scale(0.86 1)" font-size="7.6" fill="#dcdcdc" font-weight="bold">Break S_InvItem</text>
<circle cx="364" cy="404" r="2.9" fill="#0057c8"/>
<path d="M366.6 402.3 l1.9 1.7 l-1.9 1.7 z" fill="#0057c8"/>
<text transform="translate(371.7 406) scale(0.86 1)" font-size="7" fill="#e4e4e4" stroke="#e4e4e4" stroke-width="0.28">S Inv Item</text>
<circle cx="427.4" cy="404" r="2.9" fill="#c77df5"/>
<path d="M430 402.3 l1.9 1.7 l-1.9 1.7 z" fill="#c77df5"/>
<text transform="translate(422.3 406) scale(0.86 1)" font-size="7" fill="#e4e4e4" text-anchor="end" stroke="#e4e4e4" stroke-width="0.28">ID</text>
<path d="M394.5 415.8 l2.3 2.3 l2.3 -2.3" fill="none" stroke="#e8e8e8" stroke-width="1.1"/>
<rect x="354.4" y="382.9" width="84.8" height="39.9" rx="5" fill="none" stroke="#000" stroke-width="3.2" opacity="0.35"/>
<rect x="354.15" y="382.65" width="85.3" height="40.4" rx="5" fill="none" stroke="url(#g13)" stroke-width="1.9"/>
<rect x="183.5" y="447.2" width="68" height="21.8" rx="8.8" fill="none" stroke="#000" stroke-width="2.6" opacity="0.2"/>
<rect x="184.1" y="447.6" width="66.8" height="20.2" rx="8.2" fill="none" stroke="#000" stroke-width="1.4" opacity="0.3"/>
<rect x="184.8" y="447.8" width="65.4" height="18.4" rx="7.5" fill="url(#g1)" stroke="#0c0c0c" stroke-opacity="0.85" stroke-width="0.9"/>
<rect x="187.3" y="448.4" width="60.4" height="8.28" rx="5" fill="url(#g7)"/>
<path d="M190.05 448.7 h54.9" stroke="#ffffff" stroke-opacity="0.22" stroke-width="0.8" fill="none"/>
<circle cx="237.6" cy="457" r="2.9" fill="#0057c8"/>
<path d="M240.2 455.3 l1.9 1.7 l-1.9 1.7 z" fill="#0057c8"/>
<text transform="translate(231.8 458.9) scale(0.86 1)" font-size="7" fill="#f2f2f2" text-anchor="end" stroke="#f2f2f2" stroke-width="0.28">End Inv Slot L</text>
<rect x="184.2" y="447.2" width="66.6" height="19.6" rx="9" fill="none" stroke="#000" stroke-width="3.2" opacity="0.35"/>
<rect x="183.95" y="446.95" width="67.1" height="20.1" rx="9" fill="none" stroke="url(#g13)" stroke-width="1.9"/>
<rect x="256.5" y="448.2" width="86.5" height="41.3" rx="4.8" fill="none" stroke="#000" stroke-width="2.6" opacity="0.2"/>
<rect x="257.1" y="448.6" width="85.3" height="39.7" rx="4.2" fill="none" stroke="#000" stroke-width="1.4" opacity="0.3"/>
<rect x="257.8" y="448.8" width="83.9" height="37.9" rx="3.5" fill="#111111" fill-opacity="0.86" stroke="#050505" stroke-opacity="0.9" stroke-width="0.8"/>
<path d="M258.3 459.8 v-7 a3.5 3.5 0 0 1 3.5 -3.5 h75.9 a3.5 3.5 0 0 1 3.5 3.5 v7 z" fill="url(#g6)"/>
<path d="M258.3 459.8 v-7 a3.5 3.5 0 0 1 3.5 -3.5 h75.9 a3.5 3.5 0 0 1 3.5 3.5 v7 z" fill="url(#g4)"/>
<g transform="translate(265.8 454.5)" fill="#f2f2f2" stroke="#f2f2f2"><rect x="-3.6" y="-1" width="3.4" height="2" stroke="none"/><path d="M0 0 L2.4 -2.6 M0 0 L2.4 2.6" stroke-width="1" fill="none"/><rect x="1.9" y="-3.5" width="1.7" height="1.7" stroke="none"/><rect x="1.9" y="1.8" width="1.7" height="1.7" stroke="none"/></g>
<text transform="translate(272.1 457.2) scale(0.86 1)" font-size="7.6" fill="#dcdcdc" font-weight="bold">Break S_InvSlot</text>
<circle cx="266.8" cy="469" r="2.9" fill="#0057c8"/>
<path d="M269.4 467.3 l1.9 1.7 l-1.9 1.7 z" fill="#0057c8"/>
<text transform="translate(274.5 471) scale(0.86 1)" font-size="7" fill="#e4e4e4" stroke="#e4e4e4" stroke-width="0.28">S Inv Slot</text>
<circle cx="330.5" cy="469" r="2.9" fill="#0057c8"/>
<path d="M333.1 467.3 l1.9 1.7 l-1.9 1.7 z" fill="#0057c8"/>
<text transform="translate(325.4 471) scale(0.86 1)" font-size="7" fill="#e4e4e4" text-anchor="end" stroke="#e4e4e4" stroke-width="0.28">Item</text>
<path d="M297.45 483.7 l2.3 -2.3 l2.3 2.3" fill="none" stroke="#e8e8e8" stroke-width="1.1"/>
<rect x="257.2" y="448.2" width="85.1" height="39.1" rx="5" fill="none" stroke="#000" stroke-width="3.2" opacity="0.35"/>
<rect x="256.95" y="447.95" width="85.6" height="39.6" rx="5" fill="none" stroke="url(#g13)" stroke-width="1.9"/>
<rect x="353.7" y="448.2" width="86.2" height="41.3" rx="4.8" fill="none" stroke="#000" stroke-width="2.6" opacity="0.2"/>
<rect x="354.3" y="448.6" width="85" height="39.7" rx="4.2" fill="none" stroke="#000" stroke-width="1.4" opacity="0.3"/>
<rect x="355" y="448.8" width="83.6" height="37.9" rx="3.5" fill="#111111" fill-opacity="0.86" stroke="#050505" stroke-opacity="0.9" stroke-width="0.8"/>
<path d="M355.5 459.8 v-7 a3.5 3.5 0 0 1 3.5 -3.5 h75.6 a3.5 3.5 0 0 1 3.5 3.5 v7 z" fill="url(#g6)"/>
<path d="M355.5 459.8 v-7 a3.5 3.5 0 0 1 3.5 -3.5 h75.6 a3.5 3.5 0 0 1 3.5 3.5 v7 z" fill="url(#g4)"/>
<g transform="translate(363 454.5)" fill="#f2f2f2" stroke="#f2f2f2"><rect x="-3.6" y="-1" width="3.4" height="2" stroke="none"/><path d="M0 0 L2.4 -2.6 M0 0 L2.4 2.6" stroke-width="1" fill="none"/><rect x="1.9" y="-3.5" width="1.7" height="1.7" stroke="none"/><rect x="1.9" y="1.8" width="1.7" height="1.7" stroke="none"/></g>
<text transform="translate(369.3 457.2) scale(0.86 1)" font-size="7.6" fill="#dcdcdc" font-weight="bold">Break S_InvItem</text>
<circle cx="364" cy="469" r="2.9" fill="#0057c8"/>
<path d="M366.6 467.3 l1.9 1.7 l-1.9 1.7 z" fill="#0057c8"/>
<text transform="translate(371.7 471) scale(0.86 1)" font-size="7" fill="#e4e4e4" stroke="#e4e4e4" stroke-width="0.28">S Inv Item</text>
<circle cx="427.4" cy="469" r="2.9" fill="#c77df5"/>
<path d="M430 467.3 l1.9 1.7 l-1.9 1.7 z" fill="#c77df5"/>
<text transform="translate(422.3 471) scale(0.86 1)" font-size="7" fill="#e4e4e4" text-anchor="end" stroke="#e4e4e4" stroke-width="0.28">ID</text>
<path d="M394.5 481.3 l2.3 2.3 l2.3 -2.3" fill="none" stroke="#e8e8e8" stroke-width="1.1"/>
<rect x="354.4" y="448.2" width="84.8" height="39.1" rx="5" fill="none" stroke="#000" stroke-width="3.2" opacity="0.35"/>
<rect x="354.15" y="447.95" width="85.3" height="39.6" rx="5" fill="none" stroke="url(#g13)" stroke-width="1.9"/>
<rect x="459.5" y="448.2" width="75.5" height="34.8" rx="6.8" fill="none" stroke="#000" stroke-width="2.6" opacity="0.2"/>
<rect x="460.1" y="448.6" width="74.3" height="33.2" rx="6.2" fill="none" stroke="#000" stroke-width="1.4" opacity="0.3"/>
<rect x="460.8" y="448.8" width="72.9" height="31.4" rx="5.5" fill="url(#g8)" stroke="#0a0a0a" stroke-opacity="0.85" stroke-width="0.9"/>
<text transform="translate(497.25 468.58) scale(0.9 1)" font-size="12" fill="#c0c0c0" text-anchor="middle" font-weight="bold">==</text>
<circle cx="471" cy="456.8" r="3.2" fill="#858585" stroke="#c77df5" stroke-width="1.2"/>
<circle cx="471" cy="472.3" r="3.2" fill="#858585" stroke="#c77df5" stroke-width="1.2"/>
<circle cx="524.5" cy="465" r="3.2" fill="#858585" stroke="#950000" stroke-width="1.2"/>
<rect x="460.2" y="448.2" width="74.1" height="32.6" rx="6.5" fill="none" stroke="#000" stroke-width="3.2" opacity="0.35"/>
<rect x="459.95" y="447.95" width="74.6" height="33.1" rx="6.5" fill="none" stroke="url(#g13)" stroke-width="1.9"/>
<rect x="548.5" y="480.2" width="86.5" height="34.3" rx="6.8" fill="none" stroke="#000" stroke-width="2.6" opacity="0.2"/>
<rect x="549.1" y="480.6" width="85.3" height="32.7" rx="6.2" fill="none" stroke="#000" stroke-width="1.4" opacity="0.3"/>
<rect x="549.8" y="480.8" width="83.9" height="30.9" rx="5.5" fill="url(#g8)" stroke="#0a0a0a" stroke-opacity="0.85" stroke-width="0.9"/>
<text transform="translate(593.2 500.8) scale(0.8 1)" font-size="13.3" fill="#b8b8b8" text-anchor="middle" font-weight="bold">AND</text>
<circle cx="559.1" cy="489" r="2.9" fill="#950000"/>
<path d="M561.7 487.3 l1.9 1.7 l-1.9 1.7 z" fill="#950000"/>
<circle cx="559.1" cy="503" r="2.9" fill="#950000"/>
<path d="M561.7 501.3 l1.9 1.7 l-1.9 1.7 z" fill="#950000"/>
<circle cx="622.1" cy="489" r="2.9" fill="#950000"/>
<path d="M624.7 487.3 l1.9 1.7 l-1.9 1.7 z" fill="#950000"/>
<circle cx="627" cy="506.6" r="3.2" fill="none" stroke="#e0e0e0" stroke-width="0.9"/>
<path d="M625.4 506.6 h3.2 M627 505 v3.2" stroke="#e0e0e0" stroke-width="1"/>
<text transform="translate(619.3 509.2) scale(0.86 1)" font-size="7.5" fill="#e4e4e4" text-anchor="end" stroke="#e4e4e4" stroke-width="0.28">Add pin</text>
<rect x="549.2" y="480.2" width="85.1" height="32.1" rx="6.5" fill="none" stroke="#000" stroke-width="3.2" opacity="0.35"/>
<rect x="548.95" y="479.95" width="85.6" height="32.6" rx="6.5" fill="none" stroke="url(#g13)" stroke-width="1.9"/>
<rect x="21.5" y="529.2" width="86.5" height="21.3" rx="8.8" fill="none" stroke="#000" stroke-width="2.6" opacity="0.2"/>
<rect x="22.1" y="529.6" width="85.3" height="19.7" rx="8.2" fill="none" stroke="#000" stroke-width="1.4" opacity="0.3"/>
<rect x="22.8" y="529.8" width="83.9" height="17.9" rx="7.5" fill="url(#g1)" stroke="#0c0c0c" stroke-opacity="0.85" stroke-width="0.9"/>
<rect x="25.3" y="530.4" width="78.9" height="8.06" rx="5" fill="url(#g7)"/>
<path d="M28.05 530.7 h73.4" stroke="#ffffff" stroke-opacity="0.22" stroke-width="0.8" fill="none"/>
<circle cx="95.1" cy="538.75" r="2.9" fill="#0057c8"/>
<path d="M97.7 537.05 l1.9 1.7 l-1.9 1.7 z" fill="#0057c8"/>
<text transform="translate(89.3 540.65) scale(0.86 1)" font-size="7" fill="#f2f2f2" text-anchor="end" stroke="#f2f2f2" stroke-width="0.28">Found Weapon Slot L</text>
<rect x="22.2" y="529.2" width="85.1" height="19.1" rx="9" fill="none" stroke="#000" stroke-width="3.2" opacity="0.35"/>
<rect x="21.95" y="528.95" width="85.6" height="19.6" rx="9" fill="none" stroke="url(#g13)" stroke-width="1.9"/>
<rect x="109.5" y="513.2" width="101.5" height="32.3" rx="4.8" fill="none" stroke="#000" stroke-width="2.6" opacity="0.2"/>
<rect x="110.1" y="513.6" width="100.3" height="30.7" rx="4.2" fill="none" stroke="#000" stroke-width="1.4" opacity="0.3"/>
<rect x="110.8" y="513.8" width="98.9" height="28.9" rx="3.5" fill="#111111" fill-opacity="0.86" stroke="#050505" stroke-opacity="0.9" stroke-width="0.8"/>
<path d="M111.3 524.8 v-7 a3.5 3.5 0 0 1 3.5 -3.5 h90.9 a3.5 3.5 0 0 1 3.5 3.5 v7 z" fill="url(#g6)"/>
<path d="M111.3 524.8 v-7 a3.5 3.5 0 0 1 3.5 -3.5 h90.9 a3.5 3.5 0 0 1 3.5 3.5 v7 z" fill="url(#g4)"/>
<g transform="translate(118.8 519.5)" fill="#f2f2f2" stroke="#f2f2f2"><rect x="-3.6" y="-1" width="3.4" height="2" stroke="none"/><path d="M0 0 L2.4 -2.6 M0 0 L2.4 2.6" stroke-width="1" fill="none"/><rect x="1.9" y="-3.5" width="1.7" height="1.7" stroke="none"/><rect x="1.9" y="1.8" width="1.7" height="1.7" stroke="none"/></g>
<text transform="translate(125.1 522.2) scale(0.86 1)" font-size="7.6" fill="#dcdcdc" font-weight="bold">Break S_WeaponSlot</text>
<circle cx="119.8" cy="533.5" r="2.9" fill="#0057c8"/>
<path d="M122.4 531.8 l1.9 1.7 l-1.9 1.7 z" fill="#0057c8"/>
<text transform="translate(127.5 535.5) scale(0.86 1)" font-size="7" fill="#e4e4e4" stroke="#e4e4e4" stroke-width="0.28">S Weapon Slot</text>
<circle cx="198.5" cy="533.5" r="2.9" fill="#0057c8"/>
<path d="M201.1 531.8 l1.9 1.7 l-1.9 1.7 z" fill="#0057c8"/>
<text transform="translate(193.4 535.5) scale(0.86 1)" font-size="7" fill="#e4e4e4" text-anchor="end" stroke="#e4e4e4" stroke-width="0.28">Item</text>
<rect x="110.2" y="513.2" width="100.1" height="30.1" rx="5" fill="none" stroke="#000" stroke-width="3.2" opacity="0.35"/>
<rect x="109.95" y="512.95" width="100.6" height="30.6" rx="5" fill="none" stroke="url(#g13)" stroke-width="1.9"/>
<rect x="216" y="513.2" width="102" height="47.8" rx="4.8" fill="none" stroke="#000" stroke-width="2.6" opacity="0.2"/>
<rect x="216.6" y="513.6" width="100.8" height="46.2" rx="4.2" fill="none" stroke="#000" stroke-width="1.4" opacity="0.3"/>
<rect x="217.3" y="513.8" width="99.4" height="44.4" rx="3.5" fill="#111111" fill-opacity="0.86" stroke="#050505" stroke-opacity="0.9" stroke-width="0.8"/>
<path d="M217.8 524.8 v-7 a3.5 3.5 0 0 1 3.5 -3.5 h91.4 a3.5 3.5 0 0 1 3.5 3.5 v7 z" fill="url(#g9)"/>
<path d="M217.8 524.8 v-7 a3.5 3.5 0 0 1 3.5 -3.5 h91.4 a3.5 3.5 0 0 1 3.5 3.5 v7 z" fill="url(#g4)"/>
<text x="223.5" y="522.1" font-size="8.5" fill="#e8e8e8" font-style="italic">ƒ</text>
<text transform="translate(231.6 522.2) scale(0.86 1)" font-size="7.6" fill="#dcdcdc" font-weight="bold">SGK Item Details</text>
<circle cx="226.3" cy="533.5" r="2.9" fill="#0057c8"/>
<path d="M228.9 531.8 l1.9 1.7 l-1.9 1.7 z" fill="#0057c8"/>
<text transform="translate(234 535.5) scale(0.86 1)" font-size="7" fill="#e4e4e4" stroke="#e4e4e4" stroke-width="0.28">Inv Item</text>
<circle cx="305.5" cy="533.5" r="2.3" fill="#0c0c0c" stroke="#740000" stroke-width="1.15"/>
<path d="M308.5 532 l1.6 1.5 l-1.6 1.5 z" fill="#740000"/>
<text transform="translate(300.4 535.5) scale(0.86 1)" font-size="7" fill="#e4e4e4" text-anchor="end" stroke="#e4e4e4" stroke-width="0.28">Item Found</text>
<circle cx="305.5" cy="549" r="2.9" fill="#0057c8"/>
<path d="M308.1 547.3 l1.9 1.7 l-1.9 1.7 z" fill="#0057c8"/>
<text transform="translate(300.4 551) scale(0.86 1)" font-size="7" fill="#e4e4e4" text-anchor="end" stroke="#e4e4e4" stroke-width="0.28">Item Details</text>
<rect x="216.7" y="513.2" width="100.6" height="45.6" rx="5" fill="none" stroke="#000" stroke-width="3.2" opacity="0.35"/>
<rect x="216.45" y="512.95" width="101.1" height="46.1" rx="5" fill="none" stroke="url(#g13)" stroke-width="1.9"/>
<rect x="329.5" y="513.2" width="126.5" height="42.3" rx="4.8" fill="none" stroke="#000" stroke-width="2.6" opacity="0.2"/>
<rect x="330.1" y="513.6" width="125.3" height="40.7" rx="4.2" fill="none" stroke="#000" stroke-width="1.4" opacity="0.3"/>
<rect x="330.8" y="513.8" width="123.9" height="38.9" rx="3.5" fill="#111111" fill-opacity="0.86" stroke="#050505" stroke-opacity="0.9" stroke-width="0.8"/>
<path d="M331.3 524.8 v-7 a3.5 3.5 0 0 1 3.5 -3.5 h115.9 a3.5 3.5 0 0 1 3.5 3.5 v7 z" fill="url(#g6)"/>
<path d="M331.3 524.8 v-7 a3.5 3.5 0 0 1 3.5 -3.5 h115.9 a3.5 3.5 0 0 1 3.5 3.5 v7 z" fill="url(#g4)"/>
<g transform="translate(338.8 519.5)" fill="#f2f2f2" stroke="#f2f2f2"><rect x="-3.6" y="-1" width="3.4" height="2" stroke="none"/><path d="M0 0 L2.4 -2.6 M0 0 L2.4 2.6" stroke-width="1" fill="none"/><rect x="1.9" y="-3.5" width="1.7" height="1.7" stroke="none"/><rect x="1.9" y="1.8" width="1.7" height="1.7" stroke="none"/></g>
<text transform="translate(345.1 522.2) scale(0.86 1)" font-size="7.6" fill="#dcdcdc" font-weight="bold">Break S_ItemDetails</text>
<circle cx="339.8" cy="533.5" r="2.9" fill="#0057c8"/>
<path d="M342.4 531.8 l1.9 1.7 l-1.9 1.7 z" fill="#0057c8"/>
<text transform="translate(347.5 535.5) scale(0.86 1)" font-size="7" fill="#e4e4e4" stroke="#e4e4e4" stroke-width="0.28">S Item Details</text>
<circle cx="443.5" cy="533.5" r="2.9" fill="#950000"/>
<path d="M446.1 531.8 l1.9 1.7 l-1.9 1.7 z" fill="#950000"/>
<text transform="translate(438.4 535.5) scale(0.86 1)" font-size="7" fill="#e4e4e4" text-anchor="end" stroke="#e4e4e4" stroke-width="0.28">Allow Stacking</text>
<path d="M390.45 545.8 l2.3 2.3 l2.3 -2.3" fill="none" stroke="#e8e8e8" stroke-width="1.1"/>
<rect x="330.2" y="513.2" width="125.1" height="40.1" rx="5" fill="none" stroke="#000" stroke-width="3.2" opacity="0.35"/>
<rect x="329.95" y="512.95" width="125.6" height="40.6" rx="5" fill="none" stroke="url(#g13)" stroke-width="1.9"/>
<rect x="704.5" y="317.7" width="67.5" height="21.3" rx="8.8" fill="none" stroke="#000" stroke-width="2.6" opacity="0.2"/>
<rect x="705.1" y="318.1" width="66.3" height="19.7" rx="8.2" fill="none" stroke="#000" stroke-width="1.4" opacity="0.3"/>
<rect x="705.8" y="318.3" width="64.9" height="17.9" rx="7.5" fill="url(#g1)" stroke="#0c0c0c" stroke-opacity="0.85" stroke-width="0.9"/>
<rect x="708.3" y="318.9" width="59.9" height="8.05" rx="5" fill="url(#g7)"/>
<path d="M711.05 319.2 h54.4" stroke="#ffffff" stroke-opacity="0.22" stroke-width="0.8" fill="none"/>
<circle cx="758.1" cy="327.25" r="2.9" fill="#0057c8"/>
<path d="M760.7 325.55 l1.9 1.7 l-1.9 1.7 z" fill="#0057c8"/>
<text transform="translate(752.3 329.15) scale(0.86 1)" font-size="7" fill="#f2f2f2" text-anchor="end" stroke="#f2f2f2" stroke-width="0.28">End Inv Slot L</text>
<rect x="705.2" y="317.7" width="66.1" height="19.1" rx="9" fill="none" stroke="#000" stroke-width="3.2" opacity="0.35"/>
<rect x="704.95" y="317.45" width="66.6" height="19.6" rx="9" fill="none" stroke="url(#g13)" stroke-width="1.9"/>
<rect x="777.5" y="277.2" width="142" height="90.8" rx="4.8" fill="none" stroke="#000" stroke-width="2.6" opacity="0.2"/>
<rect x="778.1" y="277.6" width="140.8" height="89.2" rx="4.2" fill="none" stroke="#000" stroke-width="1.4" opacity="0.3"/>
<rect x="778.8" y="277.8" width="139.4" height="87.4" rx="3.5" fill="#111111" fill-opacity="0.86" stroke="#050505" stroke-opacity="0.9" stroke-width="0.8"/>
<path d="M779.3 296.6 v-14.8 a3.5 3.5 0 0 1 3.5 -3.5 h131.4 a3.5 3.5 0 0 1 3.5 3.5 v14.8 z" fill="url(#g5)"/>
<path d="M779.3 296.6 v-14.8 a3.5 3.5 0 0 1 3.5 -3.5 h131.4 a3.5 3.5 0 0 1 3.5 3.5 v14.8 z" fill="url(#g4)"/>
<text x="785" y="286.2" font-size="8.5" fill="#e8e8e8" font-style="italic">ƒ</text>
<text transform="translate(793.1 286.3) scale(0.86 1)" font-size="7.6" fill="#dcdcdc" font-weight="bold">Attempt to Add Item Amount</text>
<text transform="translate(793.6 294.1) scale(0.94 1)" font-size="6.4" fill="#a9bccb" font-style="italic" opacity="0.85">Target is BP Master Inventory</text>
<path d="M785.5 303.85 h2.8 l3.1 3.15 l-3.1 3.15 h-2.8 z" fill="#fff" stroke="#fff" stroke-width="0.7" stroke-linejoin="round"/>
<circle cx="787.8" cy="324" r="2.3" fill="#0c0c0c" stroke="#0083bb" stroke-width="1.15"/>
<path d="M790.8 322.5 l1.6 1.5 l-1.6 1.5 z" fill="#0083bb"/>
<text transform="translate(795.5 326) scale(0.86 1)" font-size="7" fill="#e4e4e4" stroke="#e4e4e4" stroke-width="0.28">Target</text>
<rect x="815" y="319.2" width="20.5" height="9.6" rx="0.8" fill="#000" fill-opacity="0.15" stroke="#a8a8a8" stroke-width="0.7"/>
<text transform="translate(817.4 326.1) scale(0.86 1)" font-size="7" fill="#a0a0a0" stroke="#a0a0a0" stroke-width="0.28">self</text>
<circle cx="787.8" cy="341" r="2.9" fill="#0057c8"/>
<path d="M790.4 339.3 l1.9 1.7 l-1.9 1.7 z" fill="#0057c8"/>
<text transform="translate(795.5 343) scale(0.86 1)" font-size="7" fill="#e4e4e4" stroke="#e4e4e4" stroke-width="0.28">Inv Slot</text>
<circle cx="787.8" cy="356" r="2.9" fill="#1fe3a8"/>
<path d="M790.4 354.3 l1.9 1.7 l-1.9 1.7 z" fill="#1fe3a8"/>
<text transform="translate(795.5 358) scale(0.86 1)" font-size="7" fill="#e4e4e4" stroke="#e4e4e4" stroke-width="0.28">Add Amount</text>
<path d="M906.3 303.85 h2.8 l3.1 3.15 l-3.1 3.15 h-2.8 z" fill="#fff" stroke="#fff" stroke-width="0.7" stroke-linejoin="round"/>
<circle cx="907" cy="322.5" r="2.9" fill="#950000"/>
<path d="M909.6 320.8 l1.9 1.7 l-1.9 1.7 z" fill="#950000"/>
<text transform="translate(901.9 324.5) scale(0.86 1)" font-size="7" fill="#e4e4e4" text-anchor="end" stroke="#e4e4e4" stroke-width="0.28">Remainder</text>
<circle cx="907" cy="338" r="2.9" fill="#1fe3a8"/>
<path d="M909.6 336.3 l1.9 1.7 l-1.9 1.7 z" fill="#1fe3a8"/>
<text transform="translate(901.9 340) scale(0.86 1)" font-size="7" fill="#e4e4e4" text-anchor="end" stroke="#e4e4e4" stroke-width="0.28">Remainder Amount</text>
<rect x="778.2" y="277.2" width="140.6" height="88.6" rx="5" fill="none" stroke="#000" stroke-width="3.2" opacity="0.35"/>
<rect x="777.95" y="276.95" width="141.1" height="89.1" rx="5" fill="none" stroke="url(#g13)" stroke-width="1.9"/>
<rect x="940.5" y="285.2" width="91" height="48.8" rx="4.8" fill="none" stroke="#000" stroke-width="2.6" opacity="0.2"/>
<rect x="941.1" y="285.6" width="89.8" height="47.2" rx="4.2" fill="none" stroke="#000" stroke-width="1.4" opacity="0.3"/>
<rect x="941.8" y="285.8" width="88.4" height="45.4" rx="3.5" fill="#111111" fill-opacity="0.86" stroke="#050505" stroke-opacity="0.9" stroke-width="0.8"/>
<path d="M942.3 296.8 v-7 a3.5 3.5 0 0 1 3.5 -3.5 h80.4 a3.5 3.5 0 0 1 3.5 3.5 v7 z" fill="url(#g3)"/>
<path d="M942.3 296.8 v-7 a3.5 3.5 0 0 1 3.5 -3.5 h80.4 a3.5 3.5 0 0 1 3.5 3.5 v7 z" fill="url(#g4)"/>
<g transform="translate(951.1 291.5)" fill="none" stroke="#f0f0f0" stroke-width="1.1"><path d="M-3.8 0 h2.6 M-1.3 -2.4 v4.8 M-1.9 -2.4 h3.4 M-1.9 2.4 h3.4"/><rect x="1.3" y="-3.4" width="2" height="2" fill="#f0f0f0" stroke="none"/><rect x="1.3" y="1.4" width="2" height="2" fill="#f0f0f0" stroke="none"/></g>
<text transform="translate(957.3 294.2) scale(0.86 1)" font-size="7.6" fill="#d0d0d0" font-weight="bold">Branch</text>
<path d="M949.4 303.85 h2.8 l3.1 3.15 l-3.1 3.15 h-2.8 z" fill="#fff" stroke="#fff" stroke-width="0.7" stroke-linejoin="round"/>
<circle cx="951.7" cy="322.6" r="2.9" fill="#950000"/>
<path d="M954.3 320.9 l1.9 1.7 l-1.9 1.7 z" fill="#950000"/>
<text transform="translate(959.4 324.6) scale(0.86 1)" font-size="7" fill="#e4e4e4" stroke="#e4e4e4" stroke-width="0.28">Condition</text>
<path d="M1018.3 303.85 h2.8 l3.1 3.15 l-3.1 3.15 h-2.8 z" fill="#fff" stroke="#fff" stroke-width="0.7" stroke-linejoin="round"/>
<text transform="translate(1015.6 309) scale(0.86 1)" font-size="7" fill="#e4e4e4" text-anchor="end" stroke="#e4e4e4" stroke-width="0.28">True</text>
<path d="M1018.3 319.45 h2.8 l3.1 3.15 l-3.1 3.15 h-2.8 z" fill="#fff" stroke="#fff" stroke-width="0.7" stroke-linejoin="round"/>
<text transform="translate(1015.6 324.6) scale(0.86 1)" font-size="7" fill="#e4e4e4" text-anchor="end" stroke="#e4e4e4" stroke-width="0.28">False</text>
<rect x="941.2" y="285.2" width="89.6" height="46.6" rx="5" fill="none" stroke="#000" stroke-width="3.2" opacity="0.35"/>
<rect x="940.95" y="284.95" width="90.1" height="47.1" rx="5" fill="none" stroke="url(#g13)" stroke-width="1.9"/>
<rect x="1175.5" y="285.2" width="91" height="48.8" rx="4.8" fill="none" stroke="#000" stroke-width="2.6" opacity="0.2"/>
<rect x="1176.1" y="285.6" width="89.8" height="47.2" rx="4.2" fill="none" stroke="#000" stroke-width="1.4" opacity="0.3"/>
<rect x="1176.8" y="285.8" width="88.4" height="45.4" rx="3.5" fill="#111111" fill-opacity="0.86" stroke="#050505" stroke-opacity="0.9" stroke-width="0.8"/>
<path d="M1177.3 296.8 v-7 a3.5 3.5 0 0 1 3.5 -3.5 h80.4 a3.5 3.5 0 0 1 3.5 3.5 v7 z" fill="url(#g3)"/>
<path d="M1177.3 296.8 v-7 a3.5 3.5 0 0 1 3.5 -3.5 h80.4 a3.5 3.5 0 0 1 3.5 3.5 v7 z" fill="url(#g4)"/>
<g transform="translate(1186.1 291.5)" fill="none" stroke="#f0f0f0" stroke-width="1.1"><path d="M-3.8 0 h2.6 M-1.3 -2.4 v4.8 M-1.9 -2.4 h3.4 M-1.9 2.4 h3.4"/><rect x="1.3" y="-3.4" width="2" height="2" fill="#f0f0f0" stroke="none"/><rect x="1.3" y="1.4" width="2" height="2" fill="#f0f0f0" stroke="none"/></g>
<text transform="translate(1192.3 294.2) scale(0.86 1)" font-size="7.6" fill="#d0d0d0" font-weight="bold">Branch</text>
<path d="M1184.4 303.85 h2.8 l3.1 3.15 l-3.1 3.15 h-2.8 z" fill="#fff" stroke="#fff" stroke-width="0.7" stroke-linejoin="round"/>
<circle cx="1186.7" cy="322.6" r="2.9" fill="#950000"/>
<path d="M1189.3 320.9 l1.9 1.7 l-1.9 1.7 z" fill="#950000"/>
<text transform="translate(1194.4 324.6) scale(0.86 1)" font-size="7" fill="#e4e4e4" stroke="#e4e4e4" stroke-width="0.28">Condition</text>
<path d="M1253.3 303.85 h2.8 l3.1 3.15 l-3.1 3.15 h-2.8 z" fill="#111" stroke="#e8e8e8" stroke-width="1" stroke-linejoin="round"/>
<text transform="translate(1250.6 309) scale(0.86 1)" font-size="7" fill="#e4e4e4" text-anchor="end" stroke="#e4e4e4" stroke-width="0.28">True</text>
<path d="M1253.3 319.45 h2.8 l3.1 3.15 l-3.1 3.15 h-2.8 z" fill="#fff" stroke="#fff" stroke-width="0.7" stroke-linejoin="round"/>
<text transform="translate(1250.6 324.6) scale(0.86 1)" font-size="7" fill="#e4e4e4" text-anchor="end" stroke="#e4e4e4" stroke-width="0.28">False</text>
<rect x="1176.2" y="285.2" width="89.6" height="46.6" rx="5" fill="none" stroke="#000" stroke-width="3.2" opacity="0.35"/>
<rect x="1175.95" y="284.95" width="90.1" height="47.1" rx="5" fill="none" stroke="url(#g13)" stroke-width="1.9"/>
<rect x="947.5" y="358.2" width="75.5" height="35.3" rx="6.8" fill="none" stroke="#000" stroke-width="2.6" opacity="0.2"/>
<rect x="948.1" y="358.6" width="74.3" height="33.7" rx="6.2" fill="none" stroke="#000" stroke-width="1.4" opacity="0.3"/>
<rect x="948.8" y="358.8" width="72.9" height="31.9" rx="5.5" fill="url(#g8)" stroke="#0a0a0a" stroke-opacity="0.85" stroke-width="0.9"/>
<text transform="translate(985.25 378.83) scale(0.9 1)" font-size="12" fill="#c0c0c0" text-anchor="middle" font-weight="bold">==</text>
<circle cx="959" cy="367" r="3.2" fill="#858585" stroke="#1fe3a8" stroke-width="1.2"/>
<circle cx="959" cy="382.5" r="3.2" fill="#858585" stroke="#1fe3a8" stroke-width="1.2"/>
<circle cx="1012" cy="375" r="3.2" fill="#858585" stroke="#950000" stroke-width="1.2"/>
<rect x="948.2" y="358.2" width="74.1" height="33.1" rx="6.5" fill="none" stroke="#000" stroke-width="3.2" opacity="0.35"/>
<rect x="947.95" y="357.95" width="74.6" height="33.6" rx="6.5" fill="none" stroke="url(#g13)" stroke-width="1.9"/>
<rect x="1183.5" y="350.2" width="74.5" height="35.3" rx="6.8" fill="none" stroke="#000" stroke-width="2.6" opacity="0.2"/>
<rect x="1184.1" y="350.6" width="73.3" height="33.7" rx="6.2" fill="none" stroke="#000" stroke-width="1.4" opacity="0.3"/>
<rect x="1184.8" y="350.8" width="71.9" height="31.9" rx="5.5" fill="url(#g8)" stroke="#0a0a0a" stroke-opacity="0.85" stroke-width="0.9"/>
<text transform="translate(1220.5 370) scale(0.9 1)" font-size="10" fill="#c0c0c0" text-anchor="middle" font-weight="bold">-</text>
<circle cx="1194.5" cy="359" r="3.2" fill="#858585" stroke="#1fe3a8" stroke-width="1.2"/>
<circle cx="1194.5" cy="374.5" r="3.2" fill="#858585" stroke="#1fe3a8" stroke-width="1.2"/>
<circle cx="1247" cy="359" r="3.2" fill="#858585" stroke="#1fe3a8" stroke-width="1.2"/>
<circle cx="1252.4" cy="377.5" r="3.2" fill="none" stroke="#e0e0e0" stroke-width="0.9"/>
<path d="M1250.8 377.5 h3.2 M1252.4 375.9 v3.2" stroke="#e0e0e0" stroke-width="1"/>
<text transform="translate(1244.7 380.1) scale(0.86 1)" font-size="7.5" fill="#e4e4e4" text-anchor="end" stroke="#e4e4e4" stroke-width="0.28">Add pin</text>
<rect x="1184.2" y="350.2" width="73.1" height="33.1" rx="6.5" fill="none" stroke="#000" stroke-width="3.2" opacity="0.35"/>
<rect x="1183.95" y="349.95" width="73.6" height="33.6" rx="6.5" fill="none" stroke="url(#g13)" stroke-width="1.9"/>
<rect x="728.5" y="448.2" width="98" height="40.3" rx="4.8" fill="none" stroke="#000" stroke-width="2.6" opacity="0.2"/>
<rect x="729.1" y="448.6" width="96.8" height="38.7" rx="4.2" fill="none" stroke="#000" stroke-width="1.4" opacity="0.3"/>
<rect x="729.8" y="448.8" width="95.4" height="36.9" rx="3.5" fill="#111111" fill-opacity="0.86" stroke="#050505" stroke-opacity="0.9" stroke-width="0.8"/>
<path d="M730.3 459.8 v-7 a3.5 3.5 0 0 1 3.5 -3.5 h87.4 a3.5 3.5 0 0 1 3.5 3.5 v7 z" fill="url(#g6)"/>
<path d="M730.3 459.8 v-7 a3.5 3.5 0 0 1 3.5 -3.5 h87.4 a3.5 3.5 0 0 1 3.5 3.5 v7 z" fill="url(#g4)"/>
<g transform="translate(737.8 454.5)" fill="#f2f2f2" stroke="#f2f2f2"><rect x="-3.6" y="-1" width="3.4" height="2" stroke="none"/><path d="M0 0 L2.4 -2.6 M0 0 L2.4 2.6" stroke-width="1" fill="none"/><rect x="1.9" y="-3.5" width="1.7" height="1.7" stroke="none"/><rect x="1.9" y="1.8" width="1.7" height="1.7" stroke="none"/></g>
<text transform="translate(744.1 457.2) scale(0.86 1)" font-size="7.6" fill="#dcdcdc" font-weight="bold">Break S_InvItem</text>
<circle cx="738.8" cy="469" r="2.9" fill="#0057c8"/>
<path d="M741.4 467.3 l1.9 1.7 l-1.9 1.7 z" fill="#0057c8"/>
<text transform="translate(746.5 471) scale(0.86 1)" font-size="7" fill="#e4e4e4" stroke="#e4e4e4" stroke-width="0.28">S Inv Item</text>
<circle cx="814" cy="469" r="2.9" fill="#1fe3a8"/>
<path d="M816.6 467.3 l1.9 1.7 l-1.9 1.7 z" fill="#1fe3a8"/>
<text transform="translate(808.9 471) scale(0.86 1)" font-size="7" fill="#e4e4e4" text-anchor="end" stroke="#e4e4e4" stroke-width="0.28">Amount</text>
<path d="M775.2 480.3 l2.3 2.3 l2.3 -2.3" fill="none" stroke="#e8e8e8" stroke-width="1.1"/>
<rect x="729.2" y="448.2" width="96.6" height="38.1" rx="5" fill="none" stroke="#000" stroke-width="3.2" opacity="0.35"/>
<rect x="728.95" y="447.95" width="97.1" height="38.6" rx="5" fill="none" stroke="url(#g13)" stroke-width="1.9"/>
<rect x="728.5" y="488.2" width="100.5" height="32.3" rx="4.8" fill="none" stroke="#000" stroke-width="2.6" opacity="0.2"/>
<rect x="729.1" y="488.6" width="99.3" height="30.7" rx="4.2" fill="none" stroke="#000" stroke-width="1.4" opacity="0.3"/>
<rect x="729.8" y="488.8" width="97.9" height="28.9" rx="3.5" fill="#111111" fill-opacity="0.86" stroke="#050505" stroke-opacity="0.9" stroke-width="0.8"/>
<path d="M730.3 499.8 v-7 a3.5 3.5 0 0 1 3.5 -3.5 h89.9 a3.5 3.5 0 0 1 3.5 3.5 v7 z" fill="url(#g6)"/>
<path d="M730.3 499.8 v-7 a3.5 3.5 0 0 1 3.5 -3.5 h89.9 a3.5 3.5 0 0 1 3.5 3.5 v7 z" fill="url(#g4)"/>
<g transform="translate(737.8 494.5)" fill="#f2f2f2" stroke="#f2f2f2"><rect x="-3.6" y="-1" width="3.4" height="2" stroke="none"/><path d="M0 0 L2.4 -2.6 M0 0 L2.4 2.6" stroke-width="1" fill="none"/><rect x="1.9" y="-3.5" width="1.7" height="1.7" stroke="none"/><rect x="1.9" y="1.8" width="1.7" height="1.7" stroke="none"/></g>
<text transform="translate(744.1 497.2) scale(0.86 1)" font-size="7.6" fill="#dcdcdc" font-weight="bold">Break S_WeaponSlot</text>
<circle cx="738.8" cy="509" r="2.9" fill="#0057c8"/>
<path d="M741.4 507.3 l1.9 1.7 l-1.9 1.7 z" fill="#0057c8"/>
<text transform="translate(746.5 511) scale(0.86 1)" font-size="7" fill="#e4e4e4" stroke="#e4e4e4" stroke-width="0.28">S Weapon Slot</text>
<circle cx="816.5" cy="509" r="2.9" fill="#0057c8"/>
<path d="M819.1 507.3 l1.9 1.7 l-1.9 1.7 z" fill="#0057c8"/>
<text transform="translate(811.4 511) scale(0.86 1)" font-size="7" fill="#e4e4e4" text-anchor="end" stroke="#e4e4e4" stroke-width="0.28">Item</text>
<rect x="729.2" y="488.2" width="99.1" height="30.1" rx="5" fill="none" stroke="#000" stroke-width="3.2" opacity="0.35"/>
<rect x="728.95" y="487.95" width="99.6" height="30.6" rx="5" fill="none" stroke="url(#g13)" stroke-width="1.9"/>
<rect x="737" y="521.7" width="87" height="20.3" rx="8.8" fill="none" stroke="#000" stroke-width="2.6" opacity="0.2"/>
<rect x="737.6" y="522.1" width="85.8" height="18.7" rx="8.2" fill="none" stroke="#000" stroke-width="1.4" opacity="0.3"/>
<rect x="738.3" y="522.3" width="84.4" height="16.9" rx="7.5" fill="url(#g1)" stroke="#0c0c0c" stroke-opacity="0.85" stroke-width="0.9"/>
<rect x="740.8" y="522.9" width="79.4" height="7.61" rx="5" fill="url(#g7)"/>
<path d="M743.55 523.2 h73.9" stroke="#ffffff" stroke-opacity="0.22" stroke-width="0.8" fill="none"/>
<circle cx="810.6" cy="530.75" r="2.9" fill="#0057c8"/>
<path d="M813.2 529.05 l1.9 1.7 l-1.9 1.7 z" fill="#0057c8"/>
<text transform="translate(804.8 532.65) scale(0.86 1)" font-size="7" fill="#f2f2f2" text-anchor="end" stroke="#f2f2f2" stroke-width="0.28">Found Weapon Slot L</text>
<rect x="737.7" y="521.7" width="85.6" height="18.1" rx="9" fill="none" stroke="#000" stroke-width="3.2" opacity="0.35"/>
<rect x="737.45" y="521.45" width="86.1" height="18.6" rx="9" fill="none" stroke="url(#g13)" stroke-width="1.9"/>
<rect x="956" y="439.7" width="68" height="20.8" rx="8.8" fill="none" stroke="#000" stroke-width="2.6" opacity="0.2"/>
<rect x="956.6" y="440.1" width="66.8" height="19.2" rx="8.2" fill="none" stroke="#000" stroke-width="1.4" opacity="0.3"/>
<rect x="957.3" y="440.3" width="65.4" height="17.4" rx="7.5" fill="url(#g1)" stroke="#0c0c0c" stroke-opacity="0.85" stroke-width="0.9"/>
<rect x="959.8" y="440.9" width="60.4" height="7.83" rx="5" fill="url(#g7)"/>
<path d="M962.55 441.2 h54.9" stroke="#ffffff" stroke-opacity="0.22" stroke-width="0.8" fill="none"/>
<circle cx="1010.1" cy="449" r="2.9" fill="#0057c8"/>
<path d="M1012.7 447.3 l1.9 1.7 l-1.9 1.7 z" fill="#0057c8"/>
<text transform="translate(1004.3 450.9) scale(0.86 1)" font-size="7" fill="#f2f2f2" text-anchor="end" stroke="#f2f2f2" stroke-width="0.28">End Inv Slot L</text>
<rect x="956.7" y="439.7" width="66.6" height="18.6" rx="9" fill="none" stroke="#000" stroke-width="3.2" opacity="0.35"/>
<rect x="956.45" y="439.45" width="67.1" height="19.1" rx="9" fill="none" stroke="url(#g13)" stroke-width="1.9"/>
<rect x="931.5" y="456.7" width="101.2" height="42.1" rx="4.8" fill="none" stroke="#000" stroke-width="2.6" opacity="0.2"/>
<rect x="932.1" y="457.1" width="100" height="40.5" rx="4.2" fill="none" stroke="#000" stroke-width="1.4" opacity="0.3"/>
<rect x="932.8" y="457.3" width="98.6" height="38.7" rx="3.5" fill="#111111" fill-opacity="0.86" stroke="#050505" stroke-opacity="0.9" stroke-width="0.8"/>
<path d="M933.3 468.3 v-7 a3.5 3.5 0 0 1 3.5 -3.5 h90.6 a3.5 3.5 0 0 1 3.5 3.5 v7 z" fill="url(#g6)"/>
<path d="M933.3 468.3 v-7 a3.5 3.5 0 0 1 3.5 -3.5 h90.6 a3.5 3.5 0 0 1 3.5 3.5 v7 z" fill="url(#g4)"/>
<g transform="translate(940.8 463)" fill="#f2f2f2" stroke="#f2f2f2"><rect x="-3.6" y="-1" width="3.4" height="2" stroke="none"/><path d="M0 0 L2.4 -2.6 M0 0 L2.4 2.6" stroke-width="1" fill="none"/><rect x="1.9" y="-3.5" width="1.7" height="1.7" stroke="none"/><rect x="1.9" y="1.8" width="1.7" height="1.7" stroke="none"/></g>
<text transform="translate(947.1 465.7) scale(0.86 1)" font-size="7.6" fill="#dcdcdc" font-weight="bold">Break S_InvSlot</text>
<circle cx="941.8" cy="477" r="2.9" fill="#0057c8"/>
<path d="M944.4 475.3 l1.9 1.7 l-1.9 1.7 z" fill="#0057c8"/>
<text transform="translate(949.5 479) scale(0.86 1)" font-size="7" fill="#e4e4e4" stroke="#e4e4e4" stroke-width="0.28">S Inv Slot</text>
<circle cx="1020.2" cy="477" r="2.9" fill="#00a8f0"/>
<path d="M1022.8 475.3 l1.9 1.7 l-1.9 1.7 z" fill="#00a8f0"/>
<text transform="translate(1015.1 479) scale(0.86 1)" font-size="7" fill="#e4e4e4" text-anchor="end" stroke="#e4e4e4" stroke-width="0.28">Inventory</text>
<path d="M979.8 492.2 l2.3 -2.3 l2.3 2.3" fill="none" stroke="#e8e8e8" stroke-width="1.1"/>
<rect x="932.2" y="456.7" width="99.8" height="39.9" rx="5" fill="none" stroke="#000" stroke-width="3.2" opacity="0.35"/>
<rect x="931.95" y="456.45" width="100.3" height="40.4" rx="5" fill="none" stroke="url(#g13)" stroke-width="1.9"/>
<rect x="931.5" y="504.7" width="102.2" height="32.6" rx="4.8" fill="none" stroke="#000" stroke-width="2.6" opacity="0.2"/>
<rect x="932.1" y="505.1" width="101" height="31" rx="4.2" fill="none" stroke="#000" stroke-width="1.4" opacity="0.3"/>
<rect x="932.8" y="505.3" width="99.6" height="29.2" rx="3.5" fill="#111111" fill-opacity="0.86" stroke="#050505" stroke-opacity="0.9" stroke-width="0.8"/>
<path d="M933.3 516.3 v-7 a3.5 3.5 0 0 1 3.5 -3.5 h91.6 a3.5 3.5 0 0 1 3.5 3.5 v7 z" fill="url(#g6)"/>
<path d="M933.3 516.3 v-7 a3.5 3.5 0 0 1 3.5 -3.5 h91.6 a3.5 3.5 0 0 1 3.5 3.5 v7 z" fill="url(#g4)"/>
<g transform="translate(940.8 511)" fill="#f2f2f2" stroke="#f2f2f2"><rect x="-3.6" y="-1" width="3.4" height="2" stroke="none"/><path d="M0 0 L2.4 -2.6 M0 0 L2.4 2.6" stroke-width="1" fill="none"/><rect x="1.9" y="-3.5" width="1.7" height="1.7" stroke="none"/><rect x="1.9" y="1.8" width="1.7" height="1.7" stroke="none"/></g>
<text transform="translate(947.1 513.7) scale(0.86 1)" font-size="7.6" fill="#dcdcdc" font-weight="bold">Break S_WeaponSlot</text>
<circle cx="941.8" cy="525" r="2.9" fill="#0057c8"/>
<path d="M944.4 523.3 l1.9 1.7 l-1.9 1.7 z" fill="#0057c8"/>
<text transform="translate(949.5 527) scale(0.86 1)" font-size="7" fill="#e4e4e4" stroke="#e4e4e4" stroke-width="0.28">S Weapon Slot</text>
<circle cx="1021.2" cy="525" r="2.9" fill="#0057c8"/>
<path d="M1023.8 523.3 l1.9 1.7 l-1.9 1.7 z" fill="#0057c8"/>
<text transform="translate(1016.1 527) scale(0.86 1)" font-size="7" fill="#e4e4e4" text-anchor="end" stroke="#e4e4e4" stroke-width="0.28">Item</text>
<rect x="932.2" y="504.7" width="100.8" height="30.4" rx="5" fill="none" stroke="#000" stroke-width="3.2" opacity="0.35"/>
<rect x="931.95" y="504.45" width="101.3" height="30.9" rx="5" fill="none" stroke="url(#g13)" stroke-width="1.9"/>
<rect x="939.5" y="538" width="89" height="20.8" rx="8.8" fill="none" stroke="#000" stroke-width="2.6" opacity="0.2"/>
<rect x="940.1" y="538.4" width="87.8" height="19.2" rx="8.2" fill="none" stroke="#000" stroke-width="1.4" opacity="0.3"/>
<rect x="940.8" y="538.6" width="86.4" height="17.4" rx="7.5" fill="url(#g1)" stroke="#0c0c0c" stroke-opacity="0.85" stroke-width="0.9"/>
<rect x="943.3" y="539.2" width="81.4" height="7.83" rx="5" fill="url(#g7)"/>
<path d="M946.05 539.5 h75.9" stroke="#ffffff" stroke-opacity="0.22" stroke-width="0.8" fill="none"/>
<circle cx="1014.1" cy="547.3" r="2.9" fill="#0057c8"/>
<path d="M1016.7 545.6 l1.9 1.7 l-1.9 1.7 z" fill="#0057c8"/>
<text transform="translate(1008.3 549.2) scale(0.86 1)" font-size="7" fill="#f2f2f2" text-anchor="end" stroke="#f2f2f2" stroke-width="0.28">Found Weapon Slot L</text>
<rect x="940.2" y="538" width="87.6" height="18.6" rx="9" fill="none" stroke="#000" stroke-width="3.2" opacity="0.35"/>
<rect x="939.95" y="537.75" width="88.1" height="19.1" rx="9" fill="none" stroke="url(#g13)" stroke-width="1.9"/>
<rect x="1062.1" y="423.7" width="114.6" height="140.1" rx="4.8" fill="none" stroke="#000" stroke-width="2.6" opacity="0.2"/>
<rect x="1062.7" y="424.1" width="113.4" height="138.5" rx="4.2" fill="none" stroke="#000" stroke-width="1.4" opacity="0.3"/>
<rect x="1063.4" y="424.3" width="112" height="136.7" rx="3.5" fill="#111111" fill-opacity="0.86" stroke="#050505" stroke-opacity="0.9" stroke-width="0.8"/>
<path d="M1063.9 443.1 v-14.8 a3.5 3.5 0 0 1 3.5 -3.5 h104 a3.5 3.5 0 0 1 3.5 3.5 v14.8 z" fill="url(#g5)"/>
<path d="M1063.9 443.1 v-14.8 a3.5 3.5 0 0 1 3.5 -3.5 h104 a3.5 3.5 0 0 1 3.5 3.5 v14.8 z" fill="url(#g4)"/>
<g transform="translate(1071.4 430.1)"><path d="M-3.7 0 L0 -3.7 L3.7 0 L0 3.7 Z" fill="none" stroke="#f4f4f4" stroke-width="1.15" stroke-linejoin="round"/><path d="M-0.6 -1.7 L1.6 0 L-0.6 1.7 Z" fill="#f4f4f4"/></g>
<text transform="translate(1077.7 432.8) scale(0.86 1)" font-size="7.6" fill="#dcdcdc" font-weight="bold">Add Item Weight</text>
<text transform="translate(1078.2 440.6) scale(0.94 1)" font-size="6.4" fill="#a9bccb" font-style="italic" opacity="0.85">Target is BP Master Inventory</text>
<path d="M1070.1 449.85 h2.8 l3.1 3.15 l-3.1 3.15 h-2.8 z" fill="#fff" stroke="#fff" stroke-width="0.7" stroke-linejoin="round"/>
<circle cx="1072.4" cy="469" r="2.9" fill="#00a8f0"/>
<path d="M1075 467.3 l1.9 1.7 l-1.9 1.7 z" fill="#00a8f0"/>
<text transform="translate(1080.1 471) scale(0.86 1)" font-size="7" fill="#e4e4e4" stroke="#e4e4e4" stroke-width="0.28">Target</text>
<circle cx="1072.4" cy="484.5" r="2.9" fill="#0057c8"/>
<path d="M1075 482.8 l1.9 1.7 l-1.9 1.7 z" fill="#0057c8"/>
<text transform="translate(1080.1 486.5) scale(0.86 1)" font-size="7" fill="#e4e4e4" stroke="#e4e4e4" stroke-width="0.28">Item</text>
<circle cx="1072.4" cy="501" r="2.3" fill="#0c0c0c" stroke="#18b183" stroke-width="1.15"/>
<path d="M1075.4 499.5 l1.6 1.5 l-1.6 1.5 z" fill="#18b183"/>
<text transform="translate(1080.1 503) scale(0.86 1)" font-size="7" fill="#e4e4e4" stroke="#e4e4e4" stroke-width="0.28">Amount</text>
<rect x="1103.3" y="496.2" width="9.4" height="9.6" rx="0.8" fill="#000" fill-opacity="0.15" stroke="#a8a8a8" stroke-width="0.7"/>
<text transform="translate(1105.7 503.1) scale(0.86 1)" font-size="7" fill="#a0a0a0" stroke="#a0a0a0" stroke-width="0.28">0</text>
<circle cx="1072.4" cy="518" r="2.3" fill="#0c0c0c" stroke="#740000" stroke-width="1.15"/>
<path d="M1075.4 516.5 l1.6 1.5 l-1.6 1.5 z" fill="#740000"/>
<text transform="translate(1080.1 520) scale(0.86 1)" font-size="7" fill="#e4e4e4" stroke="#e4e4e4" stroke-width="0.28">Add All</text>
<rect x="1101.5" y="513.7" width="8.6" height="8.6" rx="1" fill="#0a0a0a" stroke="#2a2a2a" stroke-width="0.8"/>
<path d="M1103.4 518.2 l1.8 2 l3.2 -4.2" fill="none" stroke="#1e7be8" stroke-width="1.2"/>
<circle cx="1072.4" cy="536" r="2.3" fill="#0c0c0c" stroke="#740000" stroke-width="1.15"/>
<path d="M1075.4 534.5 l1.6 1.5 l-1.6 1.5 z" fill="#740000"/>
<text transform="translate(1080.1 538) scale(0.86 1)" font-size="7" fill="#e4e4e4" stroke="#e4e4e4" stroke-width="0.28">Add to Parent</text>
<rect x="1120" y="531.7" width="8.6" height="8.6" rx="1" fill="#0a0a0a" stroke="#2a2a2a" stroke-width="0.8"/>
<path d="M1121.9 536.2 l1.8 2 l3.2 -4.2" fill="none" stroke="#1e7be8" stroke-width="1.2"/>
<circle cx="1072.4" cy="552" r="2.3" fill="#0c0c0c" stroke="#0083bb" stroke-width="1.15"/>
<path d="M1075.4 550.5 l1.6 1.5 l-1.6 1.5 z" fill="#0083bb"/>
<text transform="translate(1080.1 554) scale(0.86 1)" font-size="7" fill="#e4e4e4" stroke="#e4e4e4" stroke-width="0.28">Stop Inventory</text>
<path d="M1163.5 449.85 h2.8 l3.1 3.15 l-3.1 3.15 h-2.8 z" fill="#fff" stroke="#fff" stroke-width="0.7" stroke-linejoin="round"/>
<rect x="1062.8" y="423.7" width="113.2" height="137.9" rx="5" fill="none" stroke="#000" stroke-width="3.2" opacity="0.35"/>
<rect x="1062.55" y="423.45" width="113.7" height="138.4" rx="5" fill="none" stroke="url(#g13)" stroke-width="1.9"/>
<rect x="1428.5" y="285.2" width="113.5" height="137.3" rx="4.8" fill="none" stroke="#000" stroke-width="2.6" opacity="0.2"/>
<rect x="1429.1" y="285.6" width="112.3" height="135.7" rx="4.2" fill="none" stroke="#000" stroke-width="1.4" opacity="0.3"/>
<rect x="1429.8" y="285.8" width="110.9" height="133.9" rx="3.5" fill="#111111" fill-opacity="0.86" stroke="#050505" stroke-opacity="0.9" stroke-width="0.8"/>
<path d="M1430.3 304.6 v-14.8 a3.5 3.5 0 0 1 3.5 -3.5 h102.9 a3.5 3.5 0 0 1 3.5 3.5 v14.8 z" fill="url(#g5)"/>
<path d="M1430.3 304.6 v-14.8 a3.5 3.5 0 0 1 3.5 -3.5 h102.9 a3.5 3.5 0 0 1 3.5 3.5 v14.8 z" fill="url(#g4)"/>
<g transform="translate(1437.8 291.6)"><path d="M-3.7 0 L0 -3.7 L3.7 0 L0 3.7 Z" fill="none" stroke="#f4f4f4" stroke-width="1.15" stroke-linejoin="round"/><path d="M-0.6 -1.7 L1.6 0 L-0.6 1.7 Z" fill="#f4f4f4"/></g>
<text transform="translate(1444.1 294.3) scale(0.86 1)" font-size="7.6" fill="#dcdcdc" font-weight="bold">Add Item Weight</text>
<text transform="translate(1444.6 302.1) scale(0.94 1)" font-size="6.4" fill="#a9bccb" font-style="italic" opacity="0.85">Target is BP Master Inventory</text>
<path d="M1436.5 311.85 h2.8 l3.1 3.15 l-3.1 3.15 h-2.8 z" fill="#fff" stroke="#fff" stroke-width="0.7" stroke-linejoin="round"/>
<circle cx="1438.8" cy="331" r="2.9" fill="#00a8f0"/>
<path d="M1441.4 329.3 l1.9 1.7 l-1.9 1.7 z" fill="#00a8f0"/>
<text transform="translate(1446.5 333) scale(0.86 1)" font-size="7" fill="#e4e4e4" stroke="#e4e4e4" stroke-width="0.28">Target</text>
<circle cx="1438.8" cy="346" r="2.9" fill="#0057c8"/>
<path d="M1441.4 344.3 l1.9 1.7 l-1.9 1.7 z" fill="#0057c8"/>
<text transform="translate(1446.5 348) scale(0.86 1)" font-size="7" fill="#e4e4e4" stroke="#e4e4e4" stroke-width="0.28">Item</text>
<circle cx="1438.8" cy="361" r="2.9" fill="#1fe3a8"/>
<path d="M1441.4 359.3 l1.9 1.7 l-1.9 1.7 z" fill="#1fe3a8"/>
<text transform="translate(1446.5 363) scale(0.86 1)" font-size="7" fill="#e4e4e4" stroke="#e4e4e4" stroke-width="0.28">Amount</text>
<circle cx="1438.8" cy="377.5" r="2.3" fill="#0c0c0c" stroke="#740000" stroke-width="1.15"/>
<path d="M1441.8 376 l1.6 1.5 l-1.6 1.5 z" fill="#740000"/>
<text transform="translate(1446.5 379.5) scale(0.86 1)" font-size="7" fill="#e4e4e4" stroke="#e4e4e4" stroke-width="0.28">Add All</text>
<rect x="1468" y="373.2" width="8.6" height="8.6" rx="1" fill="#0a0a0a" stroke="#2a2a2a" stroke-width="0.8"/>
<circle cx="1438.8" cy="394.5" r="2.3" fill="#0c0c0c" stroke="#740000" stroke-width="1.15"/>
<path d="M1441.8 393 l1.6 1.5 l-1.6 1.5 z" fill="#740000"/>
<text transform="translate(1446.5 396.5) scale(0.86 1)" font-size="7" fill="#e4e4e4" stroke="#e4e4e4" stroke-width="0.28">Add to Parent</text>
<rect x="1486" y="390.2" width="8.6" height="8.6" rx="1" fill="#0a0a0a" stroke="#2a2a2a" stroke-width="0.8"/>
<path d="M1487.9 394.7 l1.8 2 l3.2 -4.2" fill="none" stroke="#1e7be8" stroke-width="1.2"/>
<circle cx="1438.8" cy="410.5" r="2.3" fill="#0c0c0c" stroke="#0083bb" stroke-width="1.15"/>
<path d="M1441.8 409 l1.6 1.5 l-1.6 1.5 z" fill="#0083bb"/>
<text transform="translate(1446.5 412.5) scale(0.86 1)" font-size="7" fill="#e4e4e4" stroke="#e4e4e4" stroke-width="0.28">Stop Inventory</text>
<path d="M1528.8 311.85 h2.8 l3.1 3.15 l-3.1 3.15 h-2.8 z" fill="#fff" stroke="#fff" stroke-width="0.7" stroke-linejoin="round"/>
<rect x="1429.2" y="285.2" width="112.1" height="135.1" rx="5" fill="none" stroke="#000" stroke-width="3.2" opacity="0.35"/>
<rect x="1428.95" y="284.95" width="112.6" height="135.6" rx="5" fill="none" stroke="url(#g13)" stroke-width="1.9"/>
<rect x="1282" y="366.7" width="100" height="41.8" rx="4.8" fill="none" stroke="#000" stroke-width="2.6" opacity="0.2"/>
<rect x="1282.6" y="367.1" width="98.8" height="40.2" rx="4.2" fill="none" stroke="#000" stroke-width="1.4" opacity="0.3"/>
<rect x="1283.3" y="367.3" width="97.4" height="38.4" rx="3.5" fill="#111111" fill-opacity="0.86" stroke="#050505" stroke-opacity="0.9" stroke-width="0.8"/>
<path d="M1283.8 378.3 v-7 a3.5 3.5 0 0 1 3.5 -3.5 h89.4 a3.5 3.5 0 0 1 3.5 3.5 v7 z" fill="url(#g6)"/>
<path d="M1283.8 378.3 v-7 a3.5 3.5 0 0 1 3.5 -3.5 h89.4 a3.5 3.5 0 0 1 3.5 3.5 v7 z" fill="url(#g4)"/>
<g transform="translate(1291.3 373)" fill="#f2f2f2" stroke="#f2f2f2"><rect x="-3.6" y="-1" width="3.4" height="2" stroke="none"/><path d="M0 0 L2.4 -2.6 M0 0 L2.4 2.6" stroke-width="1" fill="none"/><rect x="1.9" y="-3.5" width="1.7" height="1.7" stroke="none"/><rect x="1.9" y="1.8" width="1.7" height="1.7" stroke="none"/></g>
<text transform="translate(1297.6 375.7) scale(0.86 1)" font-size="7.6" fill="#dcdcdc" font-weight="bold">Break S_InvSlot</text>
<circle cx="1292.3" cy="387.5" r="2.9" fill="#0057c8"/>
<path d="M1294.9 385.8 l1.9 1.7 l-1.9 1.7 z" fill="#0057c8"/>
<text transform="translate(1300 389.5) scale(0.86 1)" font-size="7" fill="#e4e4e4" stroke="#e4e4e4" stroke-width="0.28">S Inv Slot</text>
<circle cx="1369.5" cy="387.5" r="2.9" fill="#00a8f0"/>
<path d="M1372.1 385.8 l1.9 1.7 l-1.9 1.7 z" fill="#00a8f0"/>
<text transform="translate(1364.4 389.5) scale(0.86 1)" font-size="7" fill="#e4e4e4" text-anchor="end" stroke="#e4e4e4" stroke-width="0.28">Inventory</text>
<path d="M1329.7 402.2 l2.3 -2.3 l2.3 2.3" fill="none" stroke="#e8e8e8" stroke-width="1.1"/>
<rect x="1282.7" y="366.7" width="98.6" height="39.6" rx="5" fill="none" stroke="#000" stroke-width="3.2" opacity="0.35"/>
<rect x="1282.45" y="366.45" width="99.1" height="40.1" rx="5" fill="none" stroke="url(#g13)" stroke-width="1.9"/>
<rect x="1306" y="407.7" width="69" height="20.8" rx="8.8" fill="none" stroke="#000" stroke-width="2.6" opacity="0.2"/>
<rect x="1306.6" y="408.1" width="67.8" height="19.2" rx="8.2" fill="none" stroke="#000" stroke-width="1.4" opacity="0.3"/>
<rect x="1307.3" y="408.3" width="66.4" height="17.4" rx="7.5" fill="url(#g1)" stroke="#0c0c0c" stroke-opacity="0.85" stroke-width="0.9"/>
<rect x="1309.8" y="408.9" width="61.4" height="7.83" rx="5" fill="url(#g7)"/>
<path d="M1312.55 409.2 h55.9" stroke="#ffffff" stroke-opacity="0.22" stroke-width="0.8" fill="none"/>
<circle cx="1361.1" cy="417" r="2.9" fill="#0057c8"/>
<path d="M1363.7 415.3 l1.9 1.7 l-1.9 1.7 z" fill="#0057c8"/>
<text transform="translate(1355.3 418.9) scale(0.86 1)" font-size="7" fill="#f2f2f2" text-anchor="end" stroke="#f2f2f2" stroke-width="0.28">End Inv Slot L</text>
<rect x="1306.7" y="407.7" width="67.6" height="18.6" rx="9" fill="none" stroke="#000" stroke-width="3.2" opacity="0.35"/>
<rect x="1306.45" y="407.45" width="68.1" height="19.1" rx="9" fill="none" stroke="url(#g13)" stroke-width="1.9"/>
<rect x="1290" y="431.7" width="101" height="31.8" rx="4.8" fill="none" stroke="#000" stroke-width="2.6" opacity="0.2"/>
<rect x="1290.6" y="432.1" width="99.8" height="30.2" rx="4.2" fill="none" stroke="#000" stroke-width="1.4" opacity="0.3"/>
<rect x="1291.3" y="432.3" width="98.4" height="28.4" rx="3.5" fill="#111111" fill-opacity="0.86" stroke="#050505" stroke-opacity="0.9" stroke-width="0.8"/>
<path d="M1291.8 443.3 v-7 a3.5 3.5 0 0 1 3.5 -3.5 h90.4 a3.5 3.5 0 0 1 3.5 3.5 v7 z" fill="url(#g6)"/>
<path d="M1291.8 443.3 v-7 a3.5 3.5 0 0 1 3.5 -3.5 h90.4 a3.5 3.5 0 0 1 3.5 3.5 v7 z" fill="url(#g4)"/>
<g transform="translate(1299.3 438)" fill="#f2f2f2" stroke="#f2f2f2"><rect x="-3.6" y="-1" width="3.4" height="2" stroke="none"/><path d="M0 0 L2.4 -2.6 M0 0 L2.4 2.6" stroke-width="1" fill="none"/><rect x="1.9" y="-3.5" width="1.7" height="1.7" stroke="none"/><rect x="1.9" y="1.8" width="1.7" height="1.7" stroke="none"/></g>
<text transform="translate(1305.6 440.7) scale(0.86 1)" font-size="7.6" fill="#dcdcdc" font-weight="bold">Break S_WeaponSlot</text>
<circle cx="1300.3" cy="452.5" r="2.9" fill="#0057c8"/>
<path d="M1302.9 450.8 l1.9 1.7 l-1.9 1.7 z" fill="#0057c8"/>
<text transform="translate(1308 454.5) scale(0.86 1)" font-size="7" fill="#e4e4e4" stroke="#e4e4e4" stroke-width="0.28">S Weapon Slot</text>
<circle cx="1378.5" cy="452.5" r="2.9" fill="#0057c8"/>
<path d="M1381.1 450.8 l1.9 1.7 l-1.9 1.7 z" fill="#0057c8"/>
<text transform="translate(1373.4 454.5) scale(0.86 1)" font-size="7" fill="#e4e4e4" text-anchor="end" stroke="#e4e4e4" stroke-width="0.28">Item</text>
<rect x="1290.7" y="431.7" width="99.6" height="29.6" rx="5" fill="none" stroke="#000" stroke-width="3.2" opacity="0.35"/>
<rect x="1290.45" y="431.45" width="100.1" height="30.1" rx="5" fill="none" stroke="url(#g13)" stroke-width="1.9"/>
<rect x="1297.5" y="464.3" width="89" height="20.8" rx="8.8" fill="none" stroke="#000" stroke-width="2.6" opacity="0.2"/>
<rect x="1298.1" y="464.7" width="87.8" height="19.2" rx="8.2" fill="none" stroke="#000" stroke-width="1.4" opacity="0.3"/>
<rect x="1298.8" y="464.9" width="86.4" height="17.4" rx="7.5" fill="url(#g1)" stroke="#0c0c0c" stroke-opacity="0.85" stroke-width="0.9"/>
<rect x="1301.3" y="465.5" width="81.4" height="7.83" rx="5" fill="url(#g7)"/>
<path d="M1304.05 465.8 h75.9" stroke="#ffffff" stroke-opacity="0.22" stroke-width="0.8" fill="none"/>
<circle cx="1373.1" cy="473.6" r="2.9" fill="#0057c8"/>
<path d="M1375.7 471.9 l1.9 1.7 l-1.9 1.7 z" fill="#0057c8"/>
<text transform="translate(1367.3 475.5) scale(0.86 1)" font-size="7" fill="#f2f2f2" text-anchor="end" stroke="#f2f2f2" stroke-width="0.28">Found Weapon Slot L</text>
<rect x="1298.2" y="464.3" width="87.6" height="18.6" rx="9" fill="none" stroke="#000" stroke-width="3.2" opacity="0.35"/>
<rect x="1297.95" y="464.05" width="88.1" height="19.1" rx="9" fill="none" stroke="url(#g13)" stroke-width="1.9"/>
<rect x="1452" y="439.9" width="89" height="20.3" rx="8.8" fill="none" stroke="#000" stroke-width="2.6" opacity="0.2"/>
<rect x="1452.6" y="440.3" width="87.8" height="18.7" rx="8.2" fill="none" stroke="#000" stroke-width="1.4" opacity="0.3"/>
<rect x="1453.3" y="440.5" width="86.4" height="16.9" rx="7.5" fill="url(#g1)" stroke="#0c0c0c" stroke-opacity="0.85" stroke-width="0.9"/>
<rect x="1455.8" y="441.1" width="81.4" height="7.6" rx="5" fill="url(#g7)"/>
<path d="M1458.55 441.4 h75.9" stroke="#ffffff" stroke-opacity="0.22" stroke-width="0.8" fill="none"/>
<circle cx="1527.1" cy="448.95" r="2.9" fill="#0057c8"/>
<path d="M1529.7 447.25 l1.9 1.7 l-1.9 1.7 z" fill="#0057c8"/>
<text transform="translate(1521.3 450.85) scale(0.86 1)" font-size="7" fill="#f2f2f2" text-anchor="end" stroke="#f2f2f2" stroke-width="0.28">Found Weapon Slot L</text>
<rect x="1452.7" y="439.9" width="87.6" height="18.1" rx="9" fill="none" stroke="#000" stroke-width="3.2" opacity="0.35"/>
<rect x="1452.45" y="439.65" width="88.1" height="18.6" rx="9" fill="none" stroke="url(#g13)" stroke-width="1.9"/>
<rect x="1436" y="455.7" width="133" height="72.8" rx="4.8" fill="none" stroke="#000" stroke-width="2.6" opacity="0.2"/>
<rect x="1436.6" y="456.1" width="131.8" height="71.2" rx="4.2" fill="none" stroke="#000" stroke-width="1.4" opacity="0.3"/>
<rect x="1437.3" y="456.3" width="130.4" height="69.4" rx="3.5" fill="#111111" fill-opacity="0.86" stroke="#050505" stroke-opacity="0.9" stroke-width="0.8"/>
<path d="M1437.8 467.3 v-7 a3.5 3.5 0 0 1 3.5 -3.5 h122.4 a3.5 3.5 0 0 1 3.5 3.5 v7 z" fill="url(#g6)"/>
<path d="M1437.8 467.3 v-7 a3.5 3.5 0 0 1 3.5 -3.5 h122.4 a3.5 3.5 0 0 1 3.5 3.5 v7 z" fill="url(#g4)"/>
<g transform="translate(1445.3 462)" fill="#f2f2f2" stroke="#f2f2f2"><rect x="-3.6" y="-1" width="3.4" height="2" stroke="none"/><path d="M0 0 L2.4 -2.6 M0 0 L2.4 2.6" stroke-width="1" fill="none"/><rect x="1.9" y="-3.5" width="1.7" height="1.7" stroke="none"/><rect x="1.9" y="1.8" width="1.7" height="1.7" stroke="none"/></g>
<text transform="translate(1451.6 464.7) scale(0.86 1)" font-size="7.6" fill="#dcdcdc" font-weight="bold">Break S_WeaponSlot</text>
<circle cx="1446.3" cy="477" r="2.9" fill="#0057c8"/>
<path d="M1448.9 475.3 l1.9 1.7 l-1.9 1.7 z" fill="#0057c8"/>
<text transform="translate(1454 479) scale(0.86 1)" font-size="7" fill="#e4e4e4" stroke="#e4e4e4" stroke-width="0.28">S Weapon Slot</text>
<circle cx="1556.5" cy="477" r="2.9" fill="#0057c8"/>
<path d="M1559.1 475.3 l1.9 1.7 l-1.9 1.7 z" fill="#0057c8"/>
<text transform="translate(1551.4 479) scale(0.86 1)" font-size="7" fill="#e4e4e4" text-anchor="end" stroke="#e4e4e4" stroke-width="0.28">Item</text>
<circle cx="1556.5" cy="492" r="2.9" fill="#00a8f0"/>
<path d="M1559.1 490.3 l1.9 1.7 l-1.9 1.7 z" fill="#00a8f0"/>
<text transform="translate(1551.4 494) scale(0.86 1)" font-size="7" fill="#e4e4e4" text-anchor="end" stroke="#e4e4e4" stroke-width="0.28">Holdable Actor</text>
<circle cx="1556.5" cy="507" r="2.9" fill="#1fe3a8"/>
<path d="M1559.1 505.3 l1.9 1.7 l-1.9 1.7 z" fill="#1fe3a8"/>
<text transform="translate(1551.4 509) scale(0.86 1)" font-size="7" fill="#e4e4e4" text-anchor="end" stroke="#e4e4e4" stroke-width="0.28">Quick Slot Index</text>
<path d="M1500.2 522.2 l2.3 -2.3 l2.3 2.3" fill="none" stroke="#e8e8e8" stroke-width="1.1"/>
<rect x="1436.7" y="455.7" width="131.6" height="70.6" rx="5" fill="none" stroke="#000" stroke-width="3.2" opacity="0.35"/>
<rect x="1436.45" y="455.45" width="132.1" height="71.1" rx="5" fill="none" stroke="url(#g13)" stroke-width="1.9"/>
<rect x="1623.5" y="293" width="116.3" height="64.8" rx="4.8" fill="none" stroke="#000" stroke-width="2.6" opacity="0.2"/>
<rect x="1624.1" y="293.4" width="115.1" height="63.2" rx="4.2" fill="none" stroke="#000" stroke-width="1.4" opacity="0.3"/>
<rect x="1624.8" y="293.6" width="113.7" height="61.4" rx="3.5" fill="#111111" fill-opacity="0.86" stroke="#050505" stroke-opacity="0.9" stroke-width="0.8"/>
<path d="M1625.3 304.6 v-7 a3.5 3.5 0 0 1 3.5 -3.5 h105.7 a3.5 3.5 0 0 1 3.5 3.5 v7 z" fill="url(#g14)"/>
<path d="M1625.3 304.6 v-7 a3.5 3.5 0 0 1 3.5 -3.5 h105.7 a3.5 3.5 0 0 1 3.5 3.5 v7 z" fill="url(#g4)"/>
<rect x="1629.8" y="298" width="6" height="2.6" rx="1" fill="#f2f2f2"/>
<text transform="translate(1639.1 302) scale(0.86 1)" font-size="7.6" fill="#dcdcdc" font-weight="bold">Set members in S_InvItem</text>
<path d="M1631.5 311.85 h2.8 l3.1 3.15 l-3.1 3.15 h-2.8 z" fill="#fff" stroke="#fff" stroke-width="0.7" stroke-linejoin="round"/>
<path d="M1631.6 330.5 l2.6 -2.8 l2.6 2.8 l-2.6 2.8 z" fill="#0057c8"/>
<text transform="translate(1639.6 332.5) scale(0.86 1)" font-size="7" fill="#e4e4e4" stroke="#e4e4e4" stroke-width="0.28">Struct Ref</text>
<circle cx="1633.8" cy="346" r="2.9" fill="#1fe3a8"/>
<path d="M1636.4 344.3 l1.9 1.7 l-1.9 1.7 z" fill="#1fe3a8"/>
<text transform="translate(1641.5 348) scale(0.86 1)" font-size="7" fill="#e4e4e4" stroke="#e4e4e4" stroke-width="0.28">Amount</text>
<path d="M1726.6 311.85 h2.8 l3.1 3.15 l-3.1 3.15 h-2.8 z" fill="#fff" stroke="#fff" stroke-width="0.7" stroke-linejoin="round"/>
<path d="M1726.6 330.5 l2.6 -2.8 l2.6 2.8 l-2.6 2.8 z" fill="#0057c8"/>
<text transform="translate(1723.8 332.5) scale(0.86 1)" font-size="7" fill="#e4e4e4" text-anchor="end" stroke="#e4e4e4" stroke-width="0.28">Struct Out</text>
<rect x="1624.2" y="293" width="114.9" height="62.6" rx="5" fill="none" stroke="#000" stroke-width="3.2" opacity="0.35"/>
<rect x="1623.95" y="292.75" width="115.4" height="63.1" rx="5" fill="none" stroke="url(#g13)" stroke-width="1.9"/>
<rect x="1639.7" y="366.2" width="71.4" height="22" rx="8.8" fill="none" stroke="#000" stroke-width="2.6" opacity="0.2"/>
<rect x="1640.3" y="366.6" width="70.2" height="20.4" rx="8.2" fill="none" stroke="#000" stroke-width="1.4" opacity="0.3"/>
<rect x="1641" y="366.8" width="68.8" height="18.6" rx="7.5" fill="url(#g1)" stroke="#0c0c0c" stroke-opacity="0.85" stroke-width="0.9"/>
<rect x="1643.5" y="367.4" width="63.8" height="8.37" rx="5" fill="url(#g7)"/>
<path d="M1646.25 367.7 h58.3" stroke="#ffffff" stroke-opacity="0.22" stroke-width="0.8" fill="none"/>
<circle cx="1697.1" cy="376.1" r="2.9" fill="#0057c8"/>
<path d="M1699.7 374.4 l1.9 1.7 l-1.9 1.7 z" fill="#0057c8"/>
<text transform="translate(1691.3 378) scale(0.86 1)" font-size="7" fill="#f2f2f2" text-anchor="end" stroke="#f2f2f2" stroke-width="0.28">Weapon Slot ID</text>
<rect x="1640.4" y="366.2" width="70" height="19.8" rx="9" fill="none" stroke="#000" stroke-width="3.2" opacity="0.35"/>
<rect x="1640.15" y="365.95" width="70.5" height="20.3" rx="9" fill="none" stroke="url(#g13)" stroke-width="1.9"/>
<rect x="1786.3" y="284.6" width="125.2" height="121.7" rx="4.8" fill="none" stroke="#000" stroke-width="2.6" opacity="0.2"/>
<rect x="1786.9" y="285" width="124" height="120.1" rx="4.2" fill="none" stroke="#000" stroke-width="1.4" opacity="0.3"/>
<rect x="1787.6" y="285.2" width="122.6" height="118.3" rx="3.5" fill="#111111" fill-opacity="0.86" stroke="#050505" stroke-opacity="0.9" stroke-width="0.8"/>
<path d="M1788.1 304 v-14.8 a3.5 3.5 0 0 1 3.5 -3.5 h114.6 a3.5 3.5 0 0 1 3.5 3.5 v14.8 z" fill="url(#g5)"/>
<path d="M1788.1 304 v-14.8 a3.5 3.5 0 0 1 3.5 -3.5 h114.6 a3.5 3.5 0 0 1 3.5 3.5 v14.8 z" fill="url(#g4)"/>
<g transform="translate(1795.6 291)"><path d="M-3.7 0 L0 -3.7 L3.7 0 L0 3.7 Z" fill="none" stroke="#f4f4f4" stroke-width="1.15" stroke-linejoin="round"/><path d="M-0.6 -1.7 L1.6 0 L-0.6 1.7 Z" fill="#f4f4f4"/></g>
<text transform="translate(1801.9 293.7) scale(0.86 1)" font-size="7.6" fill="#dcdcdc" font-weight="bold">Update Weapon Slot Item</text>
<text transform="translate(1802.4 301.5) scale(0.94 1)" font-size="6.4" fill="#a9bccb" font-style="italic" opacity="0.85">Target is BP Equipment Inventory</text>
<path d="M1794.3 311.85 h2.8 l3.1 3.15 l-3.1 3.15 h-2.8 z" fill="#fff" stroke="#fff" stroke-width="0.7" stroke-linejoin="round"/>
<circle cx="1796.6" cy="332" r="2.3" fill="#0c0c0c" stroke="#0083bb" stroke-width="1.15"/>
<path d="M1799.6 330.5 l1.6 1.5 l-1.6 1.5 z" fill="#0083bb"/>
<text transform="translate(1804.3 334) scale(0.86 1)" font-size="7" fill="#e4e4e4" stroke="#e4e4e4" stroke-width="0.28">Target</text>
<rect x="1824.3" y="327.2" width="20.7" height="9.6" rx="0.8" fill="#000" fill-opacity="0.15" stroke="#a8a8a8" stroke-width="0.7"/>
<text transform="translate(1826.7 334.1) scale(0.86 1)" font-size="7" fill="#a0a0a0" stroke="#a0a0a0" stroke-width="0.28">self</text>
<circle cx="1796.6" cy="349" r="2.9" fill="#0057c8"/>
<path d="M1799.2 347.3 l1.9 1.7 l-1.9 1.7 z" fill="#0057c8"/>
<text transform="translate(1804.3 351) scale(0.86 1)" font-size="7" fill="#e4e4e4" stroke="#e4e4e4" stroke-width="0.28">Inv Item</text>
<circle cx="1796.6" cy="364" r="2.9" fill="#0057c8"/>
<path d="M1799.2 362.3 l1.9 1.7 l-1.9 1.7 z" fill="#0057c8"/>
<text transform="translate(1804.3 366) scale(0.86 1)" font-size="7" fill="#e4e4e4" stroke="#e4e4e4" stroke-width="0.28">Weapon Slot ID</text>
<circle cx="1796.6" cy="379" r="2.9" fill="#00a8f0"/>
<path d="M1799.2 377.3 l1.9 1.7 l-1.9 1.7 z" fill="#00a8f0"/>
<text transform="translate(1804.3 381) scale(0.86 1)" font-size="7" fill="#e4e4e4" stroke="#e4e4e4" stroke-width="0.28">Holdable</text>
<circle cx="1796.6" cy="394.5" r="2.9" fill="#1fe3a8"/>
<path d="M1799.2 392.8 l1.9 1.7 l-1.9 1.7 z" fill="#1fe3a8"/>
<text transform="translate(1804.3 396.5) scale(0.86 1)" font-size="7" fill="#e4e4e4" stroke="#e4e4e4" stroke-width="0.28">Quick Slot</text>
<path d="M1898.3 311.85 h2.8 l3.1 3.15 l-3.1 3.15 h-2.8 z" fill="#111" stroke="#e8e8e8" stroke-width="1" stroke-linejoin="round"/>
<rect x="1787" y="284.6" width="123.8" height="119.5" rx="5" fill="none" stroke="#000" stroke-width="3.2" opacity="0.35"/>
<rect x="1786.75" y="284.35" width="124.3" height="120" rx="5" fill="none" stroke="url(#g13)" stroke-width="1.9"/>
<rect x="-31.3" y="642.4" width="71.6" height="21.4" rx="8.8" fill="none" stroke="#000" stroke-width="2.6" opacity="0.2"/>
<rect x="-30.7" y="642.8" width="70.4" height="19.8" rx="8.2" fill="none" stroke="#000" stroke-width="1.4" opacity="0.3"/>
<rect x="-30" y="643" width="69" height="18" rx="7.5" fill="url(#g1)" stroke="#0c0c0c" stroke-opacity="0.85" stroke-width="0.9"/>
<rect x="-27.5" y="643.6" width="64" height="8.1" rx="5" fill="url(#g7)"/>
<path d="M-24.75 643.9 h58.5" stroke="#ffffff" stroke-opacity="0.22" stroke-width="0.8" fill="none"/>
<circle cx="25.6" cy="652" r="2.9" fill="#0057c8"/>
<path d="M28.2 650.3 l1.9 1.7 l-1.9 1.7 z" fill="#0057c8"/>
<text transform="translate(19.8 653.9) scale(0.86 1)" font-size="7" fill="#f2f2f2" text-anchor="end" stroke="#f2f2f2" stroke-width="0.28">v Slot L</text>
<rect x="-26.3" y="667.4" width="102.1" height="57.9" rx="4.8" fill="none" stroke="#000" stroke-width="2.6" opacity="0.2"/>
<rect x="-25.7" y="667.8" width="100.9" height="56.3" rx="4.2" fill="none" stroke="#000" stroke-width="1.4" opacity="0.3"/>
<rect x="-25" y="668" width="99.5" height="54.5" rx="3.5" fill="#111111" fill-opacity="0.86" stroke="#050505" stroke-opacity="0.9" stroke-width="0.8"/>
<path d="M-24.5 680 v-8 a3.5 3.5 0 0 1 3.5 -3.5 h91.5 a3.5 3.5 0 0 1 3.5 3.5 v8 z" fill="url(#g6)"/>
<path d="M-24.5 680 v-8 a3.5 3.5 0 0 1 3.5 -3.5 h91.5 a3.5 3.5 0 0 1 3.5 3.5 v8 z" fill="url(#g4)"/>
<text transform="translate(1 676.4) scale(0.86 1)" font-size="7.6" fill="#dcdcdc" font-weight="bold">k S_ItemDetails</text>
<circle cx="63.3" cy="688.5" r="2.9" fill="#1fe3a8"/>
<path d="M65.9 686.8 l1.9 1.7 l-1.9 1.7 z" fill="#1fe3a8"/>
<text transform="translate(58.2 690.5) scale(0.86 1)" font-size="7" fill="#e4e4e4" text-anchor="end" stroke="#e4e4e4" stroke-width="0.28">Width</text>
<circle cx="63.3" cy="703.5" r="2.9" fill="#1fe3a8"/>
<path d="M65.9 701.8 l1.9 1.7 l-1.9 1.7 z" fill="#1fe3a8"/>
<text transform="translate(58.2 705.5) scale(0.86 1)" font-size="7" fill="#e4e4e4" text-anchor="end" stroke="#e4e4e4" stroke-width="0.28">Height</text>
<text transform="translate(0.5 690.3) scale(0.86 1)" font-size="7" fill="#e4e4e4" stroke="#e4e4e4" stroke-width="0.28">n Details</text>
<path d="M21.7 718.2 l2.3 -2.3 l2.3 2.3" fill="none" stroke="#e8e8e8" stroke-width="1.1"/>
<rect x="-31.3" y="724.4" width="95.6" height="21.4" rx="8.8" fill="none" stroke="#000" stroke-width="2.6" opacity="0.2"/>
<rect x="-30.7" y="724.8" width="94.4" height="19.8" rx="8.2" fill="none" stroke="#000" stroke-width="1.4" opacity="0.3"/>
<rect x="-30" y="725" width="93" height="18" rx="7.5" fill="url(#g1)" stroke="#0c0c0c" stroke-opacity="0.85" stroke-width="0.9"/>
<rect x="-27.5" y="725.6" width="88" height="8.1" rx="5" fill="url(#g2)"/>
<path d="M-24.75 725.9 h82.5" stroke="#ffffff" stroke-opacity="0.22" stroke-width="0.8" fill="none"/>
<circle cx="50.6" cy="734" r="2.9" fill="#950000"/>
<path d="M53.2 732.3 l1.9 1.7 l-1.9 1.7 z" fill="#950000"/>
<text transform="translate(44.8 735.9) scale(0.86 1)" font-size="7" fill="#f2f2f2" text-anchor="end" stroke="#f2f2f2" stroke-width="0.28">Rotated L</text>
<rect x="118.7" y="610.4" width="121.6" height="109.4" rx="4.8" fill="none" stroke="#000" stroke-width="2.6" opacity="0.2"/>
<rect x="119.3" y="610.8" width="120.4" height="107.8" rx="4.2" fill="none" stroke="#000" stroke-width="1.4" opacity="0.3"/>
<rect x="120" y="611" width="119" height="106" rx="3.5" fill="#111111" fill-opacity="0.86" stroke="#050505" stroke-opacity="0.9" stroke-width="0.8"/>
<path d="M120.5 623 v-8 a3.5 3.5 0 0 1 3.5 -3.5 h111 a3.5 3.5 0 0 1 3.5 3.5 v8 z" fill="url(#g5)"/>
<path d="M120.5 623 v-8 a3.5 3.5 0 0 1 3.5 -3.5 h111 a3.5 3.5 0 0 1 3.5 3.5 v8 z" fill="url(#g4)"/>
<text x="126.2" y="619.3" font-size="8.5" fill="#e8e8e8" font-style="italic">ƒ</text>
<text transform="translate(134.3 619.4) scale(0.86 1)" font-size="7.6" fill="#dcdcdc" font-weight="bold">SGK Root Space Check</text>
<path d="M126.7 629.35 h2.8 l3.1 3.15 l-3.1 3.15 h-2.8 z" fill="#fff" stroke="#fff" stroke-width="0.7" stroke-linejoin="round"/>
<circle cx="129" cy="648" r="2.9" fill="#0057c8"/>
<path d="M131.6 646.3 l1.9 1.7 l-1.9 1.7 z" fill="#0057c8"/>
<text transform="translate(136.7 650) scale(0.86 1)" font-size="7" fill="#e4e4e4" stroke="#e4e4e4" stroke-width="0.28">Root Inv Slot</text>
<circle cx="129" cy="663" r="2.9" fill="#1fe3a8"/>
<path d="M131.6 661.3 l1.9 1.7 l-1.9 1.7 z" fill="#1fe3a8"/>
<text transform="translate(136.7 665) scale(0.86 1)" font-size="7" fill="#e4e4e4" stroke="#e4e4e4" stroke-width="0.28">Height</text>
<circle cx="129" cy="678" r="2.9" fill="#1fe3a8"/>
<path d="M131.6 676.3 l1.9 1.7 l-1.9 1.7 z" fill="#1fe3a8"/>
<text transform="translate(136.7 680) scale(0.86 1)" font-size="7" fill="#e4e4e4" stroke="#e4e4e4" stroke-width="0.28">Width</text>
<circle cx="129" cy="693.5" r="2.3" fill="#0c0c0c" stroke="#00439c" stroke-width="1.15"/>
<path d="M132 692 l1.6 1.5 l-1.6 1.5 z" fill="#00439c"/>
<text transform="translate(136.7 695.5) scale(0.86 1)" font-size="7" fill="#e4e4e4" stroke="#e4e4e4" stroke-width="0.28">Ignore Item</text>
<circle cx="129" cy="708.5" r="2.9" fill="#950000"/>
<path d="M131.6 706.8 l1.9 1.7 l-1.9 1.7 z" fill="#950000"/>
<text transform="translate(136.7 710.5) scale(0.86 1)" font-size="7" fill="#e4e4e4" stroke="#e4e4e4" stroke-width="0.28">Rotated</text>
<path d="M227.1 629.35 h2.8 l3.1 3.15 l-3.1 3.15 h-2.8 z" fill="#fff" stroke="#fff" stroke-width="0.7" stroke-linejoin="round"/>
<circle cx="227.8" cy="648" r="2.9" fill="#950000"/>
<path d="M230.4 646.3 l1.9 1.7 l-1.9 1.7 z" fill="#950000"/>
<text transform="translate(222.7 650) scale(0.86 1)" font-size="7" fill="#e4e4e4" text-anchor="end" stroke="#e4e4e4" stroke-width="0.28">Slots Blocked</text>
<rect x="225.2" y="660" width="1.6" height="1.6" fill="#0057c8"/>
<rect x="225.2" y="662.2" width="1.6" height="1.6" fill="#0057c8"/>
<rect x="225.2" y="664.4" width="1.6" height="1.6" fill="#0057c8"/>
<rect x="227.4" y="660" width="1.6" height="1.6" fill="#0057c8"/>
<rect x="227.4" y="664.4" width="1.6" height="1.6" fill="#0057c8"/>
<rect x="229.6" y="660" width="1.6" height="1.6" fill="#0057c8"/>
<rect x="229.6" y="662.2" width="1.6" height="1.6" fill="#0057c8"/>
<rect x="229.6" y="664.4" width="1.6" height="1.6" fill="#0057c8"/>
<text transform="translate(222.7 665) scale(0.86 1)" font-size="7" fill="#e4e4e4" text-anchor="end" stroke="#e4e4e4" stroke-width="0.28">Found Slots</text>
<rect x="272.3" y="610.4" width="92.8" height="50.7" rx="4.8" fill="none" stroke="#000" stroke-width="2.6" opacity="0.2"/>
<rect x="272.9" y="610.8" width="91.6" height="49.1" rx="4.2" fill="none" stroke="#000" stroke-width="1.4" opacity="0.3"/>
<rect x="273.6" y="611" width="90.2" height="47.3" rx="3.5" fill="#111111" fill-opacity="0.86" stroke="#050505" stroke-opacity="0.9" stroke-width="0.8"/>
<path d="M274.1 623 v-8 a3.5 3.5 0 0 1 3.5 -3.5 h82.2 a3.5 3.5 0 0 1 3.5 3.5 v8 z" fill="url(#g3)"/>
<path d="M274.1 623 v-8 a3.5 3.5 0 0 1 3.5 -3.5 h82.2 a3.5 3.5 0 0 1 3.5 3.5 v8 z" fill="url(#g4)"/>
<g transform="translate(282.9 616.7)" fill="none" stroke="#f0f0f0" stroke-width="1.1"><path d="M-3.8 0 h2.6 M-1.3 -2.4 v4.8 M-1.9 -2.4 h3.4 M-1.9 2.4 h3.4"/><rect x="1.3" y="-3.4" width="2" height="2" fill="#f0f0f0" stroke="none"/><rect x="1.3" y="1.4" width="2" height="2" fill="#f0f0f0" stroke="none"/></g>
<text transform="translate(289.1 619.4) scale(0.86 1)" font-size="7.6" fill="#d0d0d0" font-weight="bold">Branch</text>
<path d="M281.2 629.85 h2.8 l3.1 3.15 l-3.1 3.15 h-2.8 z" fill="#fff" stroke="#fff" stroke-width="0.7" stroke-linejoin="round"/>
<circle cx="283.5" cy="648.6" r="2.9" fill="#950000"/>
<path d="M286.1 646.9 l1.9 1.7 l-1.9 1.7 z" fill="#950000"/>
<text transform="translate(291.2 650.6) scale(0.86 1)" font-size="7" fill="#e4e4e4" stroke="#e4e4e4" stroke-width="0.28">Condition</text>
<path d="M351.9 629.85 h2.8 l3.1 3.15 l-3.1 3.15 h-2.8 z" fill="#fff" stroke="#fff" stroke-width="0.7" stroke-linejoin="round"/>
<text transform="translate(349.2 635) scale(0.86 1)" font-size="7" fill="#e4e4e4" text-anchor="end" stroke="#e4e4e4" stroke-width="0.28">True</text>
<path d="M351.9 645.45 h2.8 l3.1 3.15 l-3.1 3.15 h-2.8 z" fill="#fff" stroke="#fff" stroke-width="0.7" stroke-linejoin="round"/>
<text transform="translate(349.2 650.6) scale(0.86 1)" font-size="7" fill="#e4e4e4" text-anchor="end" stroke="#e4e4e4" stroke-width="0.28">False</text>
<rect x="533.2" y="610.4" width="92.8" height="50.7" rx="4.8" fill="none" stroke="#000" stroke-width="2.6" opacity="0.2"/>
<rect x="533.8" y="610.8" width="91.6" height="49.1" rx="4.2" fill="none" stroke="#000" stroke-width="1.4" opacity="0.3"/>
<rect x="534.5" y="611" width="90.2" height="47.3" rx="3.5" fill="#111111" fill-opacity="0.86" stroke="#050505" stroke-opacity="0.9" stroke-width="0.8"/>
<path d="M535 623 v-8 a3.5 3.5 0 0 1 3.5 -3.5 h82.2 a3.5 3.5 0 0 1 3.5 3.5 v8 z" fill="url(#g3)"/>
<path d="M535 623 v-8 a3.5 3.5 0 0 1 3.5 -3.5 h82.2 a3.5 3.5 0 0 1 3.5 3.5 v8 z" fill="url(#g4)"/>
<g transform="translate(543.8 616.7)" fill="none" stroke="#f0f0f0" stroke-width="1.1"><path d="M-3.8 0 h2.6 M-1.3 -2.4 v4.8 M-1.9 -2.4 h3.4 M-1.9 2.4 h3.4"/><rect x="1.3" y="-3.4" width="2" height="2" fill="#f0f0f0" stroke="none"/><rect x="1.3" y="1.4" width="2" height="2" fill="#f0f0f0" stroke="none"/></g>
<text transform="translate(550 619.4) scale(0.86 1)" font-size="7.6" fill="#d0d0d0" font-weight="bold">Branch</text>
<path d="M542.1 629.85 h2.8 l3.1 3.15 l-3.1 3.15 h-2.8 z" fill="#fff" stroke="#fff" stroke-width="0.7" stroke-linejoin="round"/>
<circle cx="544.4" cy="648.6" r="2.9" fill="#950000"/>
<path d="M547 646.9 l1.9 1.7 l-1.9 1.7 z" fill="#950000"/>
<text transform="translate(552.1 650.6) scale(0.86 1)" font-size="7" fill="#e4e4e4" stroke="#e4e4e4" stroke-width="0.28">Condition</text>
<path d="M612.8 629.85 h2.8 l3.1 3.15 l-3.1 3.15 h-2.8 z" fill="#fff" stroke="#fff" stroke-width="0.7" stroke-linejoin="round"/>
<text transform="translate(610.1 635) scale(0.86 1)" font-size="7" fill="#e4e4e4" text-anchor="end" stroke="#e4e4e4" stroke-width="0.28">True</text>
<path d="M612.8 645.45 h2.8 l3.1 3.15 l-3.1 3.15 h-2.8 z" fill="#fff" stroke="#fff" stroke-width="0.7" stroke-linejoin="round"/>
<text transform="translate(610.1 650.6) scale(0.86 1)" font-size="7" fill="#e4e4e4" text-anchor="end" stroke="#e4e4e4" stroke-width="0.28">False</text>
<rect x="-101.3" y="797.4" width="133.6" height="84.4" rx="4.8" fill="none" stroke="#000" stroke-width="2.6" opacity="0.2"/>
<rect x="-100.7" y="797.8" width="132.4" height="82.8" rx="4.2" fill="none" stroke="#000" stroke-width="1.4" opacity="0.3"/>
<rect x="-100" y="798" width="131" height="81" rx="3.5" fill="#111111" fill-opacity="0.86" stroke="#050505" stroke-opacity="0.9" stroke-width="0.8"/>
<path d="M-99.5 825 v-23 a3.5 3.5 0 0 1 3.5 -3.5 h123 a3.5 3.5 0 0 1 3.5 3.5 v23 z" fill="url(#g5)"/>
<path d="M-99.5 825 v-23 a3.5 3.5 0 0 1 3.5 -3.5 h123 a3.5 3.5 0 0 1 3.5 3.5 v23 z" fill="url(#g4)"/>
<text transform="translate(-85.7 806.5) scale(0.86 1)" font-size="7.6" fill="#dcdcdc" font-weight="bold"></text>
<text transform="translate(-85.2 816.1) scale(0.94 1)" font-size="6.4" fill="#a9bccb" font-style="italic" opacity="0.85"> </text>
<text transform="translate(-85.2 823.3) scale(0.94 1)" font-size="6.4" fill="#a9bccb" font-style="italic" opacity="0.85"> </text>
<path d="M19.1 833.35 h2.8 l3.1 3.15 l-3.1 3.15 h-2.8 z" fill="#111" stroke="#e8e8e8" stroke-width="1" stroke-linejoin="round"/>
<text transform="translate(1 823) scale(0.86 1)" font-size="6.4" fill="#a9bccb" font-style="italic" opacity="0.85">rver)</text>
<rect x="768.7" y="658.4" width="88.6" height="22.4" rx="8.8" fill="none" stroke="#000" stroke-width="2.6" opacity="0.2"/>
<rect x="769.3" y="658.8" width="87.4" height="20.8" rx="8.2" fill="none" stroke="#000" stroke-width="1.4" opacity="0.3"/>
<rect x="770" y="659" width="86" height="19" rx="7.5" fill="url(#g1)" stroke="#0c0c0c" stroke-opacity="0.85" stroke-width="0.9"/>
<rect x="772.5" y="659.6" width="81" height="8.55" rx="5" fill="url(#g7)"/>
<path d="M775.25 659.9 h75.5" stroke="#ffffff" stroke-opacity="0.22" stroke-width="0.8" fill="none"/>
<circle cx="842.6" cy="668.5" r="2.9" fill="#0057c8"/>
<path d="M845.2 666.8 l1.9 1.7 l-1.9 1.7 z" fill="#0057c8"/>
<text transform="translate(836.8 670.4) scale(0.86 1)" font-size="7" fill="#f2f2f2" text-anchor="end" stroke="#f2f2f2" stroke-width="0.28">Found Weapon Slot L</text>
<rect x="858.7" y="642.4" width="100.6" height="34.4" rx="4.8" fill="none" stroke="#000" stroke-width="2.6" opacity="0.2"/>
<rect x="859.3" y="642.8" width="99.4" height="32.8" rx="4.2" fill="none" stroke="#000" stroke-width="1.4" opacity="0.3"/>
<rect x="860" y="643" width="98" height="31" rx="3.5" fill="#111111" fill-opacity="0.86" stroke="#050505" stroke-opacity="0.9" stroke-width="0.8"/>
<path d="M860.5 655 v-8 a3.5 3.5 0 0 1 3.5 -3.5 h90 a3.5 3.5 0 0 1 3.5 3.5 v8 z" fill="url(#g6)"/>
<path d="M860.5 655 v-8 a3.5 3.5 0 0 1 3.5 -3.5 h90 a3.5 3.5 0 0 1 3.5 3.5 v8 z" fill="url(#g4)"/>
<g transform="translate(868 648.7)" fill="#f2f2f2" stroke="#f2f2f2"><rect x="-3.6" y="-1" width="3.4" height="2" stroke="none"/><path d="M0 0 L2.4 -2.6 M0 0 L2.4 2.6" stroke-width="1" fill="none"/><rect x="1.9" y="-3.5" width="1.7" height="1.7" stroke="none"/><rect x="1.9" y="1.8" width="1.7" height="1.7" stroke="none"/></g>
<text transform="translate(874.3 651.4) scale(0.86 1)" font-size="7.6" fill="#dcdcdc" font-weight="bold">Break S_WeaponSlot</text>
<circle cx="869" cy="664.5" r="2.9" fill="#0057c8"/>
<path d="M871.6 662.8 l1.9 1.7 l-1.9 1.7 z" fill="#0057c8"/>
<text transform="translate(876.7 666.5) scale(0.86 1)" font-size="7" fill="#e4e4e4" stroke="#e4e4e4" stroke-width="0.28">S Weapon Slot</text>
<circle cx="946.8" cy="664.5" r="2.9" fill="#0057c8"/>
<path d="M949.4 662.8 l1.9 1.7 l-1.9 1.7 z" fill="#0057c8"/>
<text transform="translate(941.7 666.5) scale(0.86 1)" font-size="7" fill="#e4e4e4" text-anchor="end" stroke="#e4e4e4" stroke-width="0.28">Item</text>
<rect x="882.7" y="683.4" width="69.1" height="22.4" rx="8.8" fill="none" stroke="#000" stroke-width="2.6" opacity="0.2"/>
<rect x="883.3" y="683.8" width="67.9" height="20.8" rx="8.2" fill="none" stroke="#000" stroke-width="1.4" opacity="0.3"/>
<rect x="884" y="684" width="66.5" height="19" rx="7.5" fill="url(#g1)" stroke="#0c0c0c" stroke-opacity="0.85" stroke-width="0.9"/>
<rect x="886.5" y="684.6" width="61.5" height="8.55" rx="5" fill="url(#g7)"/>
<path d="M889.25 684.9 h56" stroke="#ffffff" stroke-opacity="0.22" stroke-width="0.8" fill="none"/>
<circle cx="936.6" cy="693.5" r="2.9" fill="#0057c8"/>
<path d="M939.2 691.8 l1.9 1.7 l-1.9 1.7 z" fill="#0057c8"/>
<text transform="translate(930.8 695.4) scale(0.86 1)" font-size="7" fill="#f2f2f2" text-anchor="end" stroke="#f2f2f2" stroke-width="0.28">End Inv Slot L</text>
<rect x="972.7" y="602" width="132.6" height="91.3" rx="4.8" fill="none" stroke="#000" stroke-width="2.6" opacity="0.2"/>
<rect x="973.3" y="602.4" width="131.4" height="89.7" rx="4.2" fill="none" stroke="#000" stroke-width="1.4" opacity="0.3"/>
<rect x="974" y="602.6" width="130" height="87.9" rx="3.5" fill="#111111" fill-opacity="0.86" stroke="#050505" stroke-opacity="0.9" stroke-width="0.8"/>
<path d="M974.5 622.4 v-15.8 a3.5 3.5 0 0 1 3.5 -3.5 h122 a3.5 3.5 0 0 1 3.5 3.5 v15.8 z" fill="url(#g5)"/>
<path d="M974.5 622.4 v-15.8 a3.5 3.5 0 0 1 3.5 -3.5 h122 a3.5 3.5 0 0 1 3.5 3.5 v15.8 z" fill="url(#g4)"/>
<text x="980.2" y="611.7" font-size="8.5" fill="#e8e8e8" font-style="italic">ƒ</text>
<text transform="translate(988.3 611.8) scale(0.86 1)" font-size="7.6" fill="#dcdcdc" font-weight="bold">Add Item to Container</text>
<text transform="translate(988.8 619.8) scale(0.94 1)" font-size="6.4" fill="#a9bccb" font-style="italic" opacity="0.85">Target is BP Player Inventory</text>
<path d="M980.7 629.35 h2.8 l3.1 3.15 l-3.1 3.15 h-2.8 z" fill="#fff" stroke="#fff" stroke-width="0.7" stroke-linejoin="round"/>
<circle cx="983" cy="650" r="2.3" fill="#0c0c0c" stroke="#0083bb" stroke-width="1.15"/>
<path d="M986 648.5 l1.6 1.5 l-1.6 1.5 z" fill="#0083bb"/>
<text transform="translate(990.7 652) scale(0.86 1)" font-size="7" fill="#e4e4e4" stroke="#e4e4e4" stroke-width="0.28">Target</text>
<rect x="1010.5" y="645.2" width="20.5" height="9.6" rx="0.8" fill="#000" fill-opacity="0.15" stroke="#a8a8a8" stroke-width="0.7"/>
<text transform="translate(1012.9 652.1) scale(0.86 1)" font-size="7" fill="#a0a0a0" stroke="#a0a0a0" stroke-width="0.28">self</text>
<circle cx="983" cy="666" r="2.9" fill="#0057c8"/>
<path d="M985.6 664.3 l1.9 1.7 l-1.9 1.7 z" fill="#0057c8"/>
<text transform="translate(990.7 668) scale(0.86 1)" font-size="7" fill="#e4e4e4" stroke="#e4e4e4" stroke-width="0.28">Item</text>
<circle cx="983" cy="681.5" r="2.9" fill="#0057c8"/>
<path d="M985.6 679.8 l1.9 1.7 l-1.9 1.7 z" fill="#0057c8"/>
<text transform="translate(990.7 683.5) scale(0.86 1)" font-size="7" fill="#e4e4e4" stroke="#e4e4e4" stroke-width="0.28">Container Slot</text>
<path d="M1092.1 629.35 h2.8 l3.1 3.15 l-3.1 3.15 h-2.8 z" fill="#fff" stroke="#fff" stroke-width="0.7" stroke-linejoin="round"/>
<circle cx="1092.8" cy="648" r="2.9" fill="#950000"/>
<path d="M1095.4 646.3 l1.9 1.7 l-1.9 1.7 z" fill="#950000"/>
<text transform="translate(1087.7 650) scale(0.86 1)" font-size="7" fill="#e4e4e4" text-anchor="end" stroke="#e4e4e4" stroke-width="0.28">Remaining Item</text>
<circle cx="1092.8" cy="663.5" r="2.9" fill="#0057c8"/>
<path d="M1095.4 661.8 l1.9 1.7 l-1.9 1.7 z" fill="#0057c8"/>
<text transform="translate(1087.7 665.5) scale(0.86 1)" font-size="7" fill="#e4e4e4" text-anchor="end" stroke="#e4e4e4" stroke-width="0.28">Inv Item</text>
<rect x="1175.2" y="610.4" width="93.8" height="50.7" rx="4.8" fill="none" stroke="#000" stroke-width="2.6" opacity="0.2"/>
<rect x="1175.8" y="610.8" width="92.6" height="49.1" rx="4.2" fill="none" stroke="#000" stroke-width="1.4" opacity="0.3"/>
<rect x="1176.5" y="611" width="91.2" height="47.3" rx="3.5" fill="#111111" fill-opacity="0.86" stroke="#050505" stroke-opacity="0.9" stroke-width="0.8"/>
<path d="M1177 623 v-8 a3.5 3.5 0 0 1 3.5 -3.5 h83.2 a3.5 3.5 0 0 1 3.5 3.5 v8 z" fill="url(#g3)"/>
<path d="M1177 623 v-8 a3.5 3.5 0 0 1 3.5 -3.5 h83.2 a3.5 3.5 0 0 1 3.5 3.5 v8 z" fill="url(#g4)"/>
<g transform="translate(1185.8 616.7)" fill="none" stroke="#f0f0f0" stroke-width="1.1"><path d="M-3.8 0 h2.6 M-1.3 -2.4 v4.8 M-1.9 -2.4 h3.4 M-1.9 2.4 h3.4"/><rect x="1.3" y="-3.4" width="2" height="2" fill="#f0f0f0" stroke="none"/><rect x="1.3" y="1.4" width="2" height="2" fill="#f0f0f0" stroke="none"/></g>
<text transform="translate(1192 619.4) scale(0.86 1)" font-size="7.6" fill="#d0d0d0" font-weight="bold">Branch</text>
<path d="M1184.1 629.85 h2.8 l3.1 3.15 l-3.1 3.15 h-2.8 z" fill="#fff" stroke="#fff" stroke-width="0.7" stroke-linejoin="round"/>
<circle cx="1186.4" cy="648.6" r="2.9" fill="#950000"/>
<path d="M1189 646.9 l1.9 1.7 l-1.9 1.7 z" fill="#950000"/>
<text transform="translate(1194.1 650.6) scale(0.86 1)" font-size="7" fill="#e4e4e4" stroke="#e4e4e4" stroke-width="0.28">Condition</text>
<path d="M1255.8 629.85 h2.8 l3.1 3.15 l-3.1 3.15 h-2.8 z" fill="#111" stroke="#e8e8e8" stroke-width="1" stroke-linejoin="round"/>
<text transform="translate(1253.1 635) scale(0.86 1)" font-size="7" fill="#e4e4e4" text-anchor="end" stroke="#e4e4e4" stroke-width="0.28">True</text>
<path d="M1255.8 645.45 h2.8 l3.1 3.15 l-3.1 3.15 h-2.8 z" fill="#fff" stroke="#fff" stroke-width="0.7" stroke-linejoin="round"/>
<text transform="translate(1253.1 650.6) scale(0.86 1)" font-size="7" fill="#e4e4e4" text-anchor="end" stroke="#e4e4e4" stroke-width="0.28">False</text>
<rect x="1151.4" y="683.4" width="88.6" height="22.4" rx="8.8" fill="none" stroke="#000" stroke-width="2.6" opacity="0.2"/>
<rect x="1152" y="683.8" width="87.4" height="20.8" rx="8.2" fill="none" stroke="#000" stroke-width="1.4" opacity="0.3"/>
<rect x="1152.7" y="684" width="86" height="19" rx="7.5" fill="url(#g1)" stroke="#0c0c0c" stroke-opacity="0.85" stroke-width="0.9"/>
<rect x="1155.2" y="684.6" width="81" height="8.55" rx="5" fill="url(#g7)"/>
<path d="M1157.95 684.9 h75.5" stroke="#ffffff" stroke-opacity="0.22" stroke-width="0.8" fill="none"/>
<circle cx="1224.6" cy="693.5" r="2.9" fill="#0057c8"/>
<path d="M1227.2 691.8 l1.9 1.7 l-1.9 1.7 z" fill="#0057c8"/>
<text transform="translate(1218.8 695.4) scale(0.86 1)" font-size="7" fill="#f2f2f2" text-anchor="end" stroke="#f2f2f2" stroke-width="0.28">Found Weapon Slot L</text>
<rect x="1240.7" y="692.4" width="132.6" height="41.4" rx="4.8" fill="none" stroke="#000" stroke-width="2.6" opacity="0.2"/>
<rect x="1241.3" y="692.8" width="131.4" height="39.8" rx="4.2" fill="none" stroke="#000" stroke-width="1.4" opacity="0.3"/>
<rect x="1242" y="693" width="130" height="38" rx="3.5" fill="#111111" fill-opacity="0.86" stroke="#050505" stroke-opacity="0.9" stroke-width="0.8"/>
<path d="M1242.5 705 v-8 a3.5 3.5 0 0 1 3.5 -3.5 h122 a3.5 3.5 0 0 1 3.5 3.5 v8 z" fill="url(#g6)"/>
<path d="M1242.5 705 v-8 a3.5 3.5 0 0 1 3.5 -3.5 h122 a3.5 3.5 0 0 1 3.5 3.5 v8 z" fill="url(#g4)"/>
<g transform="translate(1250 698.7)" fill="#f2f2f2" stroke="#f2f2f2"><rect x="-3.6" y="-1" width="3.4" height="2" stroke="none"/><path d="M0 0 L2.4 -2.6 M0 0 L2.4 2.6" stroke-width="1" fill="none"/><rect x="1.9" y="-3.5" width="1.7" height="1.7" stroke="none"/><rect x="1.9" y="1.8" width="1.7" height="1.7" stroke="none"/></g>
<text transform="translate(1256.3 701.4) scale(0.86 1)" font-size="7.6" fill="#dcdcdc" font-weight="bold">Break S_WeaponSlot</text>
<circle cx="1251" cy="713" r="2.9" fill="#0057c8"/>
<path d="M1253.6 711.3 l1.9 1.7 l-1.9 1.7 z" fill="#0057c8"/>
<text transform="translate(1258.7 715) scale(0.86 1)" font-size="7" fill="#e4e4e4" stroke="#e4e4e4" stroke-width="0.28">S Weapon Slot</text>
<circle cx="1360.8" cy="713" r="2.9" fill="#1fe3a8"/>
<path d="M1363.4 711.3 l1.9 1.7 l-1.9 1.7 z" fill="#1fe3a8"/>
<text transform="translate(1355.7 715) scale(0.86 1)" font-size="7" fill="#e4e4e4" text-anchor="end" stroke="#e4e4e4" stroke-width="0.28">Quick Slot Index</text>
<path d="M1304.7 727.2 l2.3 -2.3 l2.3 2.3" fill="none" stroke="#e8e8e8" stroke-width="1.1"/>
<rect x="1297.3" y="667.4" width="72" height="22.4" rx="8.8" fill="none" stroke="#000" stroke-width="2.6" opacity="0.2"/>
<rect x="1297.9" y="667.8" width="70.8" height="20.8" rx="8.2" fill="none" stroke="#000" stroke-width="1.4" opacity="0.3"/>
<rect x="1298.6" y="668" width="69.4" height="19" rx="7.5" fill="url(#g1)" stroke="#0c0c0c" stroke-opacity="0.85" stroke-width="0.9"/>
<rect x="1301.1" y="668.6" width="64.4" height="8.55" rx="5" fill="url(#g7)"/>
<path d="M1303.85 668.9 h58.9" stroke="#ffffff" stroke-opacity="0.22" stroke-width="0.8" fill="none"/>
<circle cx="1354.6" cy="677.5" r="2.9" fill="#0057c8"/>
<path d="M1357.2 675.8 l1.9 1.7 l-1.9 1.7 z" fill="#0057c8"/>
<text transform="translate(1348.8 679.4) scale(0.86 1)" font-size="7" fill="#f2f2f2" text-anchor="end" stroke="#f2f2f2" stroke-width="0.28">Weapon Slot ID</text>
<rect x="1395.7" y="602" width="125.2" height="121.8" rx="4.8" fill="none" stroke="#000" stroke-width="2.6" opacity="0.2"/>
<rect x="1396.3" y="602.4" width="124" height="120.2" rx="4.2" fill="none" stroke="#000" stroke-width="1.4" opacity="0.3"/>
<rect x="1397" y="602.6" width="122.6" height="118.4" rx="3.5" fill="#111111" fill-opacity="0.86" stroke="#050505" stroke-opacity="0.9" stroke-width="0.8"/>
<path d="M1397.5 622.4 v-15.8 a3.5 3.5 0 0 1 3.5 -3.5 h114.6 a3.5 3.5 0 0 1 3.5 3.5 v15.8 z" fill="url(#g5)"/>
<path d="M1397.5 622.4 v-15.8 a3.5 3.5 0 0 1 3.5 -3.5 h114.6 a3.5 3.5 0 0 1 3.5 3.5 v15.8 z" fill="url(#g4)"/>
<g transform="translate(1405 609.1)"><path d="M-3.7 0 L0 -3.7 L3.7 0 L0 3.7 Z" fill="none" stroke="#f4f4f4" stroke-width="1.15" stroke-linejoin="round"/><path d="M-0.6 -1.7 L1.6 0 L-0.6 1.7 Z" fill="#f4f4f4"/></g>
<text transform="translate(1411.3 611.8) scale(0.86 1)" font-size="7.6" fill="#dcdcdc" font-weight="bold">Update Weapon Slot Item</text>
<text transform="translate(1411.8 619.8) scale(0.94 1)" font-size="6.4" fill="#a9bccb" font-style="italic" opacity="0.85">Target is BP Equipment Inventory</text>
<path d="M1403.7 629.35 h2.8 l3.1 3.15 l-3.1 3.15 h-2.8 z" fill="#fff" stroke="#fff" stroke-width="0.7" stroke-linejoin="round"/>
<circle cx="1406" cy="650" r="2.3" fill="#0c0c0c" stroke="#0083bb" stroke-width="1.15"/>
<path d="M1409 648.5 l1.6 1.5 l-1.6 1.5 z" fill="#0083bb"/>
<text transform="translate(1413.7 652) scale(0.86 1)" font-size="7" fill="#e4e4e4" stroke="#e4e4e4" stroke-width="0.28">Target</text>
<rect x="1434" y="645.2" width="20.5" height="9.6" rx="0.8" fill="#000" fill-opacity="0.15" stroke="#a8a8a8" stroke-width="0.7"/>
<text transform="translate(1436.4 652.1) scale(0.86 1)" font-size="7" fill="#a0a0a0" stroke="#a0a0a0" stroke-width="0.28">self</text>
<circle cx="1406" cy="666.5" r="2.3" fill="#0c0c0c" stroke="#00439c" stroke-width="1.15"/>
<path d="M1409 665 l1.6 1.5 l-1.6 1.5 z" fill="#00439c"/>
<text transform="translate(1413.7 668.5) scale(0.86 1)" font-size="7" fill="#e4e4e4" stroke="#e4e4e4" stroke-width="0.28">Inv Item</text>
<circle cx="1406" cy="681.5" r="2.9" fill="#0057c8"/>
<path d="M1408.6 679.8 l1.9 1.7 l-1.9 1.7 z" fill="#0057c8"/>
<text transform="translate(1413.7 683.5) scale(0.86 1)" font-size="7" fill="#e4e4e4" stroke="#e4e4e4" stroke-width="0.28">Weapon Slot ID</text>
<circle cx="1406" cy="696.5" r="2.3" fill="#0c0c0c" stroke="#0083bb" stroke-width="1.15"/>
<path d="M1409 695 l1.6 1.5 l-1.6 1.5 z" fill="#0083bb"/>
<text transform="translate(1413.7 698.5) scale(0.86 1)" font-size="7" fill="#e4e4e4" stroke="#e4e4e4" stroke-width="0.28">Holdable</text>
<circle cx="1406" cy="712" r="2.9" fill="#1fe3a8"/>
<path d="M1408.6 710.3 l1.9 1.7 l-1.9 1.7 z" fill="#1fe3a8"/>
<text transform="translate(1413.7 714) scale(0.86 1)" font-size="7" fill="#e4e4e4" stroke="#e4e4e4" stroke-width="0.28">Quick Slot</text>
<path d="M1507.7 629.35 h2.8 l3.1 3.15 l-3.1 3.15 h-2.8 z" fill="#fff" stroke="#fff" stroke-width="0.7" stroke-linejoin="round"/>
<rect x="1541.7" y="667.4" width="88.6" height="22.4" rx="8.8" fill="none" stroke="#000" stroke-width="2.6" opacity="0.2"/>
<rect x="1542.3" y="667.8" width="87.4" height="20.8" rx="8.2" fill="none" stroke="#000" stroke-width="1.4" opacity="0.3"/>
<rect x="1543" y="668" width="86" height="19" rx="7.5" fill="url(#g1)" stroke="#0c0c0c" stroke-opacity="0.85" stroke-width="0.9"/>
<rect x="1545.5" y="668.6" width="81" height="8.55" rx="5" fill="url(#g7)"/>
<path d="M1548.25 668.9 h75.5" stroke="#ffffff" stroke-opacity="0.22" stroke-width="0.8" fill="none"/>
<circle cx="1616.6" cy="677.5" r="2.9" fill="#0057c8"/>
<path d="M1619.2 675.8 l1.9 1.7 l-1.9 1.7 z" fill="#0057c8"/>
<text transform="translate(1610.8 679.4) scale(0.86 1)" font-size="7" fill="#f2f2f2" text-anchor="end" stroke="#f2f2f2" stroke-width="0.28">Found Weapon Slot L</text>
<rect x="1631.7" y="659.4" width="100.6" height="42.4" rx="4.8" fill="none" stroke="#000" stroke-width="2.6" opacity="0.2"/>
<rect x="1632.3" y="659.8" width="99.4" height="40.8" rx="4.2" fill="none" stroke="#000" stroke-width="1.4" opacity="0.3"/>
<rect x="1633" y="660" width="98" height="39" rx="3.5" fill="#111111" fill-opacity="0.86" stroke="#050505" stroke-opacity="0.9" stroke-width="0.8"/>
<path d="M1633.5 672 v-8 a3.5 3.5 0 0 1 3.5 -3.5 h90 a3.5 3.5 0 0 1 3.5 3.5 v8 z" fill="url(#g6)"/>
<path d="M1633.5 672 v-8 a3.5 3.5 0 0 1 3.5 -3.5 h90 a3.5 3.5 0 0 1 3.5 3.5 v8 z" fill="url(#g4)"/>
<g transform="translate(1641 665.7)" fill="#f2f2f2" stroke="#f2f2f2"><rect x="-3.6" y="-1" width="3.4" height="2" stroke="none"/><path d="M0 0 L2.4 -2.6 M0 0 L2.4 2.6" stroke-width="1" fill="none"/><rect x="1.9" y="-3.5" width="1.7" height="1.7" stroke="none"/><rect x="1.9" y="1.8" width="1.7" height="1.7" stroke="none"/></g>
<text transform="translate(1647.3 668.4) scale(0.86 1)" font-size="7.6" fill="#dcdcdc" font-weight="bold">Break S_WeaponSlot</text>
<circle cx="1642" cy="680.5" r="2.9" fill="#0057c8"/>
<path d="M1644.6 678.8 l1.9 1.7 l-1.9 1.7 z" fill="#0057c8"/>
<text transform="translate(1649.7 682.5) scale(0.86 1)" font-size="7" fill="#e4e4e4" stroke="#e4e4e4" stroke-width="0.28">S Weapon Slot</text>
<circle cx="1719.8" cy="680.5" r="2.9" fill="#0057c8"/>
<path d="M1722.4 678.8 l1.9 1.7 l-1.9 1.7 z" fill="#0057c8"/>
<text transform="translate(1714.7 682.5) scale(0.86 1)" font-size="7" fill="#e4e4e4" text-anchor="end" stroke="#e4e4e4" stroke-width="0.28">Item</text>
<path d="M1679.7 694.7 l2.3 -2.3 l2.3 2.3" fill="none" stroke="#e8e8e8" stroke-width="1.1"/>
<rect x="1736.7" y="659.4" width="122.1" height="57.4" rx="4.8" fill="none" stroke="#000" stroke-width="2.6" opacity="0.2"/>
<rect x="1737.3" y="659.8" width="120.9" height="55.8" rx="4.2" fill="none" stroke="#000" stroke-width="1.4" opacity="0.3"/>
<rect x="1738" y="660" width="119.5" height="54" rx="3.5" fill="#111111" fill-opacity="0.86" stroke="#050505" stroke-opacity="0.9" stroke-width="0.8"/>
<path d="M1738.5 672 v-8 a3.5 3.5 0 0 1 3.5 -3.5 h111.5 a3.5 3.5 0 0 1 3.5 3.5 v8 z" fill="url(#g6)"/>
<path d="M1738.5 672 v-8 a3.5 3.5 0 0 1 3.5 -3.5 h111.5 a3.5 3.5 0 0 1 3.5 3.5 v8 z" fill="url(#g4)"/>
<g transform="translate(1746 665.7)" fill="#f2f2f2" stroke="#f2f2f2"><rect x="-3.6" y="-1" width="3.4" height="2" stroke="none"/><path d="M0 0 L2.4 -2.6 M0 0 L2.4 2.6" stroke-width="1" fill="none"/><rect x="1.9" y="-3.5" width="1.7" height="1.7" stroke="none"/><rect x="1.9" y="1.8" width="1.7" height="1.7" stroke="none"/></g>
<text transform="translate(1752.3 668.4) scale(0.86 1)" font-size="7.6" fill="#dcdcdc" font-weight="bold">Break S_InvItem</text>
<circle cx="1747" cy="680.5" r="2.9" fill="#0057c8"/>
<path d="M1749.6 678.8 l1.9 1.7 l-1.9 1.7 z" fill="#0057c8"/>
<text transform="translate(1754.7 682.5) scale(0.86 1)" font-size="7" fill="#e4e4e4" stroke="#e4e4e4" stroke-width="0.28">S Inv Item</text>
<circle cx="1846.3" cy="680.5" r="2.9" fill="#00a8f0"/>
<path d="M1848.9 678.8 l1.9 1.7 l-1.9 1.7 z" fill="#00a8f0"/>
<text transform="translate(1841.2 682.5) scale(0.86 1)" font-size="7" fill="#e4e4e4" text-anchor="end" stroke="#e4e4e4" stroke-width="0.28">Master Inventory</text>
<circle cx="1846.3" cy="695.5" r="2.3" fill="#0c0c0c" stroke="#18b183" stroke-width="1.15"/>
<path d="M1849.3 694 l1.6 1.5 l-1.6 1.5 z" fill="#18b183"/>
<text transform="translate(1841.2 697.5) scale(0.86 1)" font-size="7" fill="#e4e4e4" text-anchor="end" stroke="#e4e4e4" stroke-width="0.28">Decay Time</text>
<path d="M1795.45 709.5 l2.3 -2.3 l2.3 2.3" fill="none" stroke="#e8e8e8" stroke-width="1.1"/>
<rect x="1736.7" y="708.9" width="122.1" height="57.4" rx="4.8" fill="none" stroke="#000" stroke-width="2.6" opacity="0.2"/>
<rect x="1737.3" y="709.3" width="120.9" height="55.8" rx="4.2" fill="none" stroke="#000" stroke-width="1.4" opacity="0.3"/>
<rect x="1738" y="709.5" width="119.5" height="54" rx="3.5" fill="#111111" fill-opacity="0.86" stroke="#050505" stroke-opacity="0.9" stroke-width="0.8"/>
<path d="M1738.5 721.5 v-8 a3.5 3.5 0 0 1 3.5 -3.5 h111.5 a3.5 3.5 0 0 1 3.5 3.5 v8 z" fill="url(#g6)"/>
<path d="M1738.5 721.5 v-8 a3.5 3.5 0 0 1 3.5 -3.5 h111.5 a3.5 3.5 0 0 1 3.5 3.5 v8 z" fill="url(#g4)"/>
<g transform="translate(1746 715.2)" fill="#f2f2f2" stroke="#f2f2f2"><rect x="-3.6" y="-1" width="3.4" height="2" stroke="none"/><path d="M0 0 L2.4 -2.6 M0 0 L2.4 2.6" stroke-width="1" fill="none"/><rect x="1.9" y="-3.5" width="1.7" height="1.7" stroke="none"/><rect x="1.9" y="1.8" width="1.7" height="1.7" stroke="none"/></g>
<text transform="translate(1752.3 717.9) scale(0.86 1)" font-size="7.6" fill="#dcdcdc" font-weight="bold">Break S_InvItem</text>
<circle cx="1747" cy="729.5" r="2.9" fill="#0057c8"/>
<path d="M1749.6 727.8 l1.9 1.7 l-1.9 1.7 z" fill="#0057c8"/>
<text transform="translate(1754.7 731.5) scale(0.86 1)" font-size="7" fill="#e4e4e4" stroke="#e4e4e4" stroke-width="0.28">S Inv Item</text>
<circle cx="1846.3" cy="729.5" r="2.9" fill="#00a8f0"/>
<path d="M1848.9 727.8 l1.9 1.7 l-1.9 1.7 z" fill="#00a8f0"/>
<text transform="translate(1841.2 731.5) scale(0.86 1)" font-size="7" fill="#e4e4e4" text-anchor="end" stroke="#e4e4e4" stroke-width="0.28">Master Inventory</text>
<circle cx="1846.3" cy="744.5" r="2.3" fill="#0c0c0c" stroke="#18b183" stroke-width="1.15"/>
<path d="M1849.3 743 l1.6 1.5 l-1.6 1.5 z" fill="#18b183"/>
<text transform="translate(1841.2 746.5) scale(0.86 1)" font-size="7" fill="#e4e4e4" text-anchor="end" stroke="#e4e4e4" stroke-width="0.28">Decay Time</text>
<path d="M1795.45 759.2 l2.3 -2.3 l2.3 2.3" fill="none" stroke="#e8e8e8" stroke-width="1.1"/>
<rect x="1875.7" y="610.4" width="85.6" height="50.4" rx="4.8" fill="none" stroke="#000" stroke-width="2.6" opacity="0.2"/>
<rect x="1876.3" y="610.8" width="84.4" height="48.8" rx="4.2" fill="none" stroke="#000" stroke-width="1.4" opacity="0.3"/>
<rect x="1877" y="611" width="83" height="47" rx="3.5" fill="#111111" fill-opacity="0.86" stroke="#050505" stroke-opacity="0.9" stroke-width="0.8"/>
<path d="M1877.5 623 v-8 a3.5 3.5 0 0 1 3.5 -3.5 h75 a3.5 3.5 0 0 1 3.5 3.5 v8 z" fill="url(#g10)"/>
<path d="M1877.5 623 v-8 a3.5 3.5 0 0 1 3.5 -3.5 h75 a3.5 3.5 0 0 1 3.5 3.5 v8 z" fill="url(#g4)"/>
<text transform="translate(1883 619.5) scale(0.9 1)" font-size="8" fill="#eee" font-weight="bold">?</text>
<text transform="translate(1891.3 619.4) scale(0.86 1)" font-size="7.6" fill="#d0d0d0" font-weight="bold">Is Valid</text>
<path d="M1883.7 629.35 h2.8 l3.1 3.15 l-3.1 3.15 h-2.8 z" fill="#fff" stroke="#fff" stroke-width="0.7" stroke-linejoin="round"/>
<text transform="translate(1893.9 634.5) scale(0.86 1)" font-size="7" fill="#e4e4e4" stroke="#e4e4e4" stroke-width="0.28">Exec</text>
<circle cx="1886" cy="648" r="2.9" fill="#00a8f0"/>
<path d="M1888.6 646.3 l1.9 1.7 l-1.9 1.7 z" fill="#00a8f0"/>
<text transform="translate(1893.7 650) scale(0.86 1)" font-size="7" fill="#e4e4e4" stroke="#e4e4e4" stroke-width="0.28">Input Object</text></g>
<g id="Ltop"><rect x="428" y="-6" width="346.5" height="23.7" rx="3" fill="#c4c4c4"/>
<rect x="431.5" y="-6" width="339.5" height="21.3" rx="9" fill="none" stroke="#444" stroke-width="0.8"/>
<path d="M433.5 17.5 l3.5 4.5 l3.5 -4.5 z" fill="#c4c4c4"/>
<text transform="translate(438.5 10) scale(0.94 1)" font-size="10.6" fill="#2c2c2c">If allowed to drop held item clear selected quick slot and update quick slot</text>
<rect x="-10" y="557" width="32.5" height="23" rx="3" fill="#c8c8c8"/>
<rect x="-10" y="559.5" width="29.5" height="18" rx="8" fill="none" stroke="#555" stroke-width="0.8"/>
<text transform="translate(1 572.5) scale(0.93 1)" font-size="10.6" fill="#3c3c3c">ot</text>
<rect x="1623.7" y="265.2" width="126.4" height="23.7" rx="2" fill="#d2d2d2"/>
<rect x="1626.5" y="266.8" width="114.5" height="20.6" rx="9" fill="none" stroke="#666" stroke-width="0.7"/>
<path d="M1627 288 l3 4 l3 -4 z" fill="#d2d2d2"/>
<text transform="translate(1630.7 275.6) scale(0.94 1)" font-size="7.6" fill="#333" stroke="#333" stroke-width="0.28">Select and in details panel tick on</text>
<text transform="translate(1630.7 283.7) scale(0.94 1)" font-size="7.6" fill="#333" stroke="#333" stroke-width="0.28">Amount option to show its pin</text>
<path d="M1743.5 267.5 l2.2 1.2 l2.2 -1.2 M1743.5 270 l2.2 -1.2 l2.2 1.2" stroke="#666" stroke-width="0.8" fill="none"/>
<path d="M1743.5 275.5 h4.4 M1743.5 277.5 h4.4" stroke="#999" stroke-width="0.8" fill="none"/>
<rect x="0" y="0" width="1919" height="28" fill="url(#g15)"/>
<rect x="0" y="0" width="425" height="25.5" fill="url(#g16)"/>
<rect x="0" y="908" width="1919" height="18" fill="url(#g17)"/>
<rect x="0" y="925.6" width="1919" height="2.4" fill="#161616"/>
<rect x="0" y="0" width="2" height="928" fill="#0c0c0c"/><rect x="2" y="0" width="1" height="928" fill="#0c0c0c" opacity="0.4"/>
<rect x="1917.5" y="0" width="1.5" height="928" fill="#0c0c0c"/>
<text transform="translate(1913.3 17.7) scale(0.98 1)" font-size="13.7" fill="#3e3e3e" text-anchor="end" font-weight="bold">Zoom -3</text>
<path d="M8.6 7.8 h6.4 v10.6 l-3.2 -2.6 l-3.2 2.6 z" fill="#c4c4c4"/>
<path d="M10.6 6.2 h6.2 v9.6" fill="none" stroke="#c4c4c4" stroke-width="1"/>
<path d="M23.4 12 l3 3 l3 -3" fill="none" stroke="#c4c4c4" stroke-width="1.3"/>
<path d="M45 13 l6.2 -5.4 v3.4 h7.6 v4 h-7.6 v3.4 z" fill="#fff"/>
<path d="M88.2 13 l-6.2 -5.4 v3.4 h-7.6 v4 h7.6 v3.4 z" fill="#fff"/>
<rect x="97" y="1" width="1" height="24" fill="#2a2a2a"/>
<text x="109" y="19" font-size="17" fill="#d0d0d0" font-style="italic">ƒ</text>
<text x="135.2" y="18.8" font-size="13.7" fill="#b4b4b4">BP_PlayerInventory</text>
<path d="M264.4 8.6 l5.4 5.4 l-5.4 5.4" fill="none" stroke="#c8c8c8" stroke-width="1.7"/>
<text x="278" y="18" font-size="13.7" fill="#b4b4b4">Unequip Weapon</text>
<path d="M40 -1 C44 4 48 8.5 54 9.5" stroke="#12509a" stroke-width="0.9" fill="none" opacity="0.8"/>
<circle cx="63" cy="11" r="3" fill="#123f78"/><path d="M65.4 9.3 l1.9 1.7 l-1.9 1.7 z" fill="#123f78"/>
<text transform="translate(71 12.6) scale(0.86 1)" font-size="6.5" fill="#3a3a3a" stroke="#3a3a3a" stroke-width="0.28">Sound</text></g>
</svg></body></html>
